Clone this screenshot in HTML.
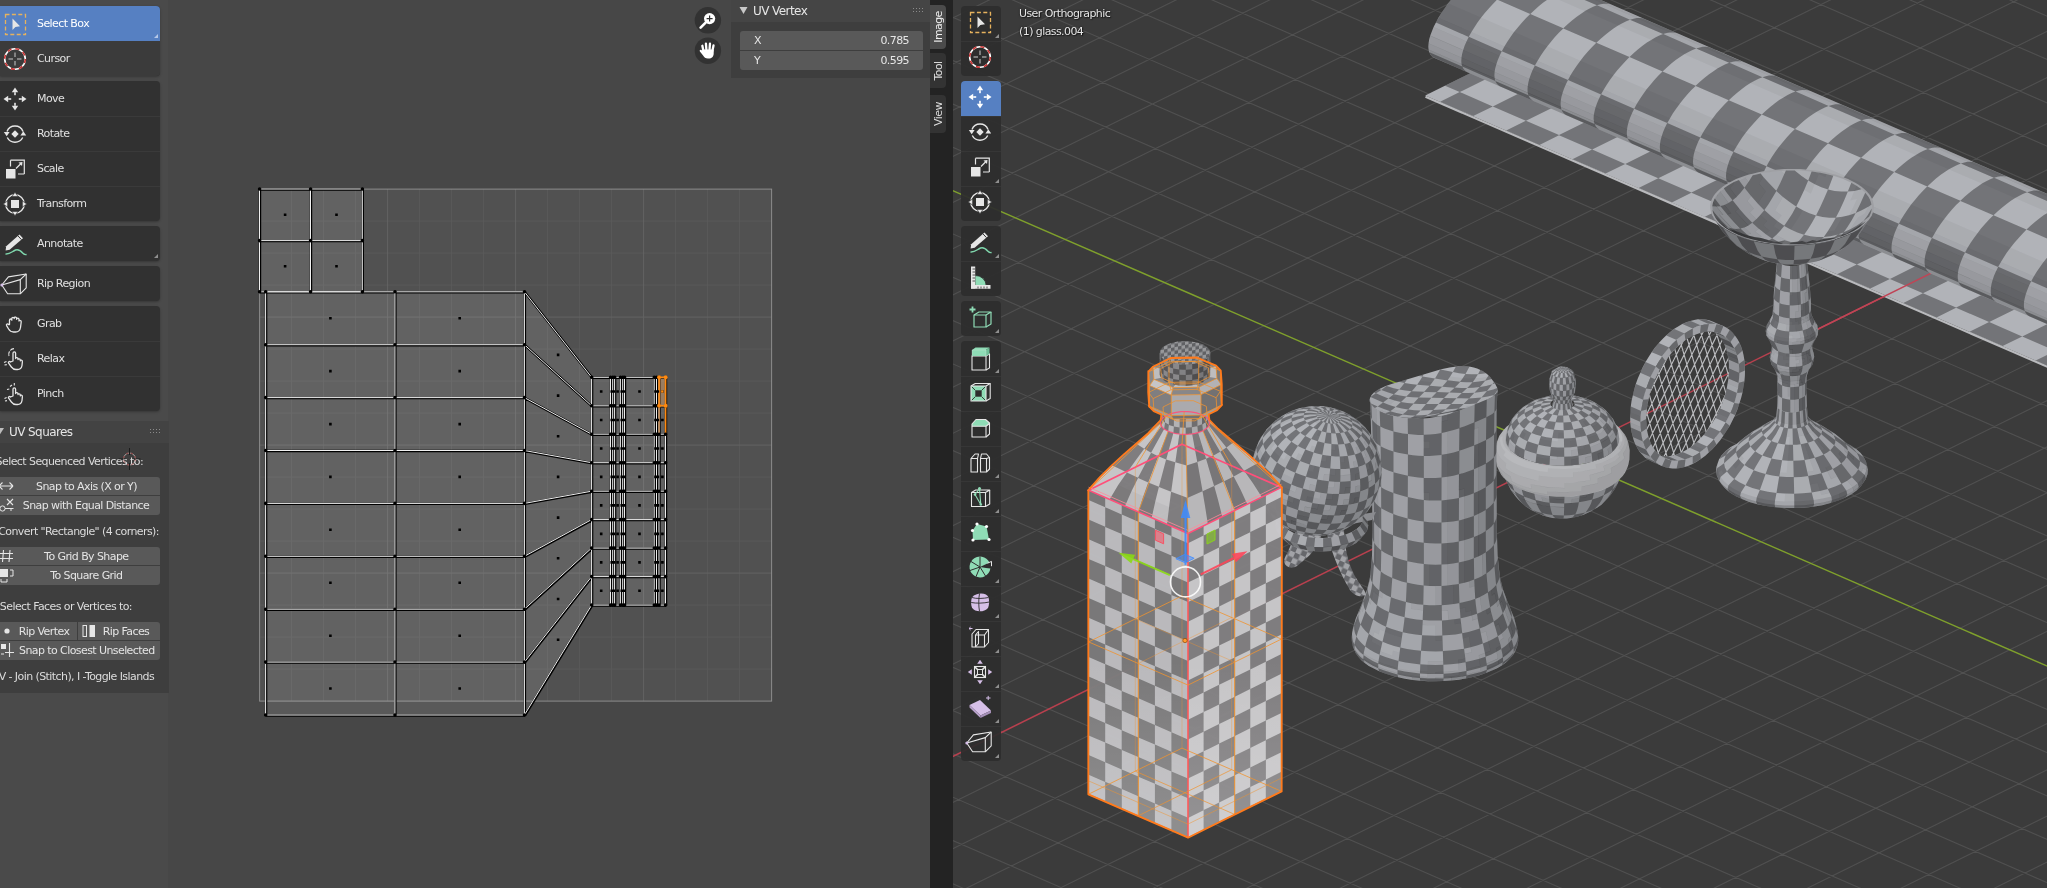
<!DOCTYPE html><html><head><meta charset="utf-8"><title>Blender</title><style>
*{box-sizing:border-box;margin:0;padding:0}
html,body{width:2047px;height:888px;overflow:hidden;background:#474747}
body{position:relative;font-family:"DejaVu Sans","Liberation Sans",sans-serif;font-size:11px;color:#e6e6e6;letter-spacing:-0.58px;-webkit-font-smoothing:antialiased}
.abs{position:absolute}
#uv{left:0;top:0;width:930px;height:888px;background:#474747;overflow:hidden;will-change:transform}
#tbreg{left:0;top:0;width:168px;height:888px;background:rgba(255,255,255,0.02)}
.tb{position:absolute;left:0;width:160px;background:#313131;box-shadow:0 1px 2.5px rgba(0,0,0,.28)}
.tb.g1{border-radius:0 4px 4px 0}
.ti{position:absolute;left:0;width:160px;height:35px;line-height:35px;padding-left:37px;font-size:11px;color:#e0e0e0;white-space:nowrap}
.ti.sep{box-shadow:inset 0 1px 0 #3a3a3a}
.ti.act{background:#5680c2;color:#fff;border-radius:0 4px 0 0}
.ti.hov{background:#3b3b3b;border-radius:0 0 4px 0}
.ti svg{position:absolute;left:1px;top:4px;width:28px;height:28px;overflow:visible}
.tri{position:absolute;right:2px;bottom:3px;width:0;height:0;border-left:4px solid transparent;border-bottom:4px solid #8f8f8f}
.ti.act .tri{border-bottom-color:#b6c8e8}
#pnl{left:0;top:421px;width:169px;height:272px;background:#3e3e3e}
#pnlh{left:0;top:0;width:169px;height:22px;background:#434343}
.pt{font-size:12px;color:#e6e6e6;white-space:nowrap}
.lbl{position:absolute;white-space:nowrap;color:#dcdcdc;font-size:11px;line-height:13px}
.btn{position:absolute;background:#595959;color:#e4e4e4;height:18px;line-height:19.6px;font-size:11px;white-space:nowrap;text-align:center}
.btn span{position:absolute;left:0;top:0;height:18px}
#npanel{left:731px;top:0;width:199px;height:78px;background:#3e3e3e}
#nph{left:0;top:0;width:199px;height:22px;background:#454545}
.fld{position:absolute;left:9px;width:183px;height:19px;background:#595959;line-height:19px;font-size:11px;color:#e6e6e6}
#tabs{left:930px;top:0;width:17px;height:888px;background:#232323;will-change:transform}
#gap{left:947px;top:0;width:6px;height:888px;background:#232323}
.tab{position:absolute;left:0;width:16px;border-radius:0 4px 4px 0}
.tab div{position:absolute;left:50%;top:50%;transform:translate(-50%,-50%) rotate(-90deg);white-space:nowrap;font-size:11px}
#v3d{left:953px;top:0;width:1094px;height:888px;background:#3b3b3b;overflow:hidden;will-change:transform}
.t3{position:absolute;left:8px;width:40px;background:rgba(45,45,45,0.93);border-radius:4px}
.t3i{position:absolute;left:0;width:40px;height:35px}
.t3i.sep{box-shadow:inset 0 1px 0 rgba(255,255,255,.04)}
.t3i.act{background:#5680c2}
.t3i svg{position:absolute;left:4.5px;top:2px;width:28px;height:28px;overflow:visible}
.t3i .tri{right:2px;bottom:3px}
.vtxt{position:absolute;left:66px;color:#e6e6e6;font-size:11px;white-space:nowrap;text-shadow:0 0 2px rgba(0,0,0,.7), 1px 1px 1px rgba(0,0,0,.5)}
</style></head><body>
<div id="uv" class="abs">
<svg class="abs" style="left:0;top:0" width="930" height="888" viewBox="0 0 930 888">
<rect x="259.6" y="189.1" width="512.0" height="512.0" fill="#515151"/>
<path d="M291.6 189.1v512.0M259.6 221.1h512.0M323.6 189.1v512.0M259.6 253.1h512.0M355.6 189.1v512.0M259.6 285.1h512.0M419.6 189.1v512.0M259.6 349.1h512.0M451.6 189.1v512.0M259.6 381.1h512.0M483.6 189.1v512.0M259.6 413.1h512.0M547.6 189.1v512.0M259.6 477.1h512.0M579.6 189.1v512.0M259.6 509.1h512.0M611.6 189.1v512.0M259.6 541.1h512.0M675.6 189.1v512.0M259.6 605.1h512.0M707.6 189.1v512.0M259.6 637.1h512.0M739.6 189.1v512.0M259.6 669.1h512.0" stroke="#5a5a5a" stroke-width="1" fill="none"/>
<path d="M387.6 189.1v512.0M259.6 317.1h512.0M515.6 189.1v512.0M259.6 445.1h512.0M643.6 189.1v512.0M259.6 573.1h512.0" stroke="#636363" stroke-width="1" fill="none"/>
<rect x="259.6" y="189.1" width="512.0" height="512.0" fill="none" stroke="#8c8c8c" stroke-width="1"/>
<path d="M259.6 189L310.6 189L310.6 240.6L259.6 240.6ZM259.6 240.6L310.6 240.6L310.6 291.8L259.6 291.8ZM310.6 189L362.4 189L362.4 240.6L310.6 240.6ZM310.6 240.6L362.4 240.6L362.4 291.8L310.6 291.8ZM265.7 291.8L395 291.8L395 344.7L265.7 344.7ZM265.7 344.7L395 344.7L395 397.6L265.7 397.6ZM265.7 397.6L395 397.6L395 450.5L265.7 450.5ZM265.7 450.5L395 450.5L395 503.4L265.7 503.4ZM265.7 503.4L395 503.4L395 556.3L265.7 556.3ZM265.7 556.3L395 556.3L395 609.2L265.7 609.2ZM265.7 609.2L395 609.2L395 662.1L265.7 662.1ZM265.7 662.1L395 662.1L395 715L265.7 715ZM395 291.8L524.5 291.8L524.5 344.7L395 344.7ZM395 344.7L524.5 344.7L524.5 397.6L395 397.6ZM395 397.6L524.5 397.6L524.5 450.5L395 450.5ZM395 450.5L524.5 450.5L524.5 503.4L395 503.4ZM395 503.4L524.5 503.4L524.5 556.3L395 556.3ZM395 556.3L524.5 556.3L524.5 609.2L395 609.2ZM395 609.2L524.5 609.2L524.5 662.1L395 662.1ZM395 662.1L524.5 662.1L524.5 715L395 715ZM524.5 291.8L591.7 377.3L591.7 405.8L524.5 344.7ZM524.5 344.7L591.7 405.8L591.7 434.2L524.5 397.6ZM524.5 397.6L591.7 434.2L591.7 462.7L524.5 450.5ZM524.5 450.5L591.7 462.7L591.7 491.2L524.5 503.4ZM524.5 503.4L591.7 491.2L591.7 519.6L524.5 556.3ZM524.5 556.3L591.7 519.6L591.7 548.1L524.5 609.2ZM524.5 609.2L591.7 548.1L591.7 576.6L524.5 662.1ZM524.5 662.1L591.7 576.6L591.7 605.1L524.5 715ZM591.7 377.3L610.6 377.3L610.6 405.8L591.7 405.8ZM591.7 405.8L610.6 405.8L610.6 434.2L591.7 434.2ZM591.7 434.2L610.6 434.2L610.6 462.7L591.7 462.7ZM591.7 462.7L610.6 462.7L610.6 491.2L591.7 491.2ZM591.7 491.2L610.6 491.2L610.6 519.6L591.7 519.6ZM591.7 519.6L610.6 519.6L610.6 548.1L591.7 548.1ZM591.7 548.1L610.6 548.1L610.6 576.6L591.7 576.6ZM591.7 576.6L610.6 576.6L610.6 605.1L591.7 605.1ZM610.6 377.3L612.8 377.3L612.8 405.8L610.6 405.8ZM610.6 405.8L612.8 405.8L612.8 434.2L610.6 434.2ZM610.6 434.2L612.8 434.2L612.8 462.7L610.6 462.7ZM610.6 462.7L612.8 462.7L612.8 491.2L610.6 491.2ZM610.6 491.2L612.8 491.2L612.8 519.6L610.6 519.6ZM610.6 519.6L612.8 519.6L612.8 548.1L610.6 548.1ZM610.6 548.1L612.8 548.1L612.8 576.6L610.6 576.6ZM610.6 576.6L612.8 576.6L612.8 605.1L610.6 605.1ZM612.8 377.3L614.7 377.3L614.7 405.8L612.8 405.8ZM612.8 405.8L614.7 405.8L614.7 434.2L612.8 434.2ZM612.8 434.2L614.7 434.2L614.7 462.7L612.8 462.7ZM612.8 462.7L614.7 462.7L614.7 491.2L612.8 491.2ZM612.8 491.2L614.7 491.2L614.7 519.6L612.8 519.6ZM612.8 519.6L614.7 519.6L614.7 548.1L612.8 548.1ZM612.8 548.1L614.7 548.1L614.7 576.6L612.8 576.6ZM612.8 576.6L614.7 576.6L614.7 605.1L612.8 605.1ZM614.7 377.3L620.5 377.3L620.5 405.8L614.7 405.8ZM614.7 405.8L620.5 405.8L620.5 434.2L614.7 434.2ZM614.7 434.2L620.5 434.2L620.5 462.7L614.7 462.7ZM614.7 462.7L620.5 462.7L620.5 491.2L614.7 491.2ZM614.7 491.2L620.5 491.2L620.5 519.6L614.7 519.6ZM614.7 519.6L620.5 519.6L620.5 548.1L614.7 548.1ZM614.7 548.1L620.5 548.1L620.5 576.6L614.7 576.6ZM614.7 576.6L620.5 576.6L620.5 605.1L614.7 605.1ZM620.5 377.3L622.8 377.3L622.8 405.8L620.5 405.8ZM620.5 405.8L622.8 405.8L622.8 434.2L620.5 434.2ZM620.5 434.2L622.8 434.2L622.8 462.7L620.5 462.7ZM620.5 462.7L622.8 462.7L622.8 491.2L620.5 491.2ZM620.5 491.2L622.8 491.2L622.8 519.6L620.5 519.6ZM620.5 519.6L622.8 519.6L622.8 548.1L620.5 548.1ZM620.5 548.1L622.8 548.1L622.8 576.6L620.5 576.6ZM620.5 576.6L622.8 576.6L622.8 605.1L620.5 605.1ZM622.8 377.3L624.6 377.3L624.6 405.8L622.8 405.8ZM622.8 405.8L624.6 405.8L624.6 434.2L622.8 434.2ZM622.8 434.2L624.6 434.2L624.6 462.7L622.8 462.7ZM622.8 462.7L624.6 462.7L624.6 491.2L622.8 491.2ZM622.8 491.2L624.6 491.2L624.6 519.6L622.8 519.6ZM622.8 519.6L624.6 519.6L624.6 548.1L622.8 548.1ZM622.8 548.1L624.6 548.1L624.6 576.6L622.8 576.6ZM622.8 576.6L624.6 576.6L624.6 605.1L622.8 605.1ZM624.6 377.3L654.3 377.3L654.3 405.8L624.6 405.8ZM624.6 405.8L654.3 405.8L654.3 434.2L624.6 434.2ZM624.6 434.2L654.3 434.2L654.3 462.7L624.6 462.7ZM624.6 462.7L654.3 462.7L654.3 491.2L624.6 491.2ZM624.6 491.2L654.3 491.2L654.3 519.6L624.6 519.6ZM624.6 519.6L654.3 519.6L654.3 548.1L624.6 548.1ZM624.6 548.1L654.3 548.1L654.3 576.6L624.6 576.6ZM624.6 576.6L654.3 576.6L654.3 605.1L624.6 605.1ZM654.3 377.3L656.6 377.3L656.6 405.8L654.3 405.8ZM654.3 405.8L656.6 405.8L656.6 434.2L654.3 434.2ZM654.3 434.2L656.6 434.2L656.6 462.7L654.3 462.7ZM654.3 462.7L656.6 462.7L656.6 491.2L654.3 491.2ZM654.3 491.2L656.6 491.2L656.6 519.6L654.3 519.6ZM654.3 519.6L656.6 519.6L656.6 548.1L654.3 548.1ZM654.3 548.1L656.6 548.1L656.6 576.6L654.3 576.6ZM654.3 576.6L656.6 576.6L656.6 605.1L654.3 605.1ZM656.6 377.3L659.1 377.3L659.1 405.8L656.6 405.8ZM656.6 405.8L659.1 405.8L659.1 434.2L656.6 434.2ZM656.6 434.2L659.1 434.2L659.1 462.7L656.6 462.7ZM656.6 462.7L659.1 462.7L659.1 491.2L656.6 491.2ZM656.6 491.2L659.1 491.2L659.1 519.6L656.6 519.6ZM656.6 519.6L659.1 519.6L659.1 548.1L656.6 548.1ZM656.6 548.1L659.1 548.1L659.1 576.6L656.6 576.6ZM656.6 576.6L659.1 576.6L659.1 605.1L656.6 605.1ZM659.1 377.3L665.6 377.3L665.6 405.8L659.1 405.8ZM659.1 405.8L665.6 405.8L665.6 434.2L659.1 434.2ZM659.1 434.2L665.6 434.2L665.6 462.7L659.1 462.7ZM659.1 462.7L665.6 462.7L665.6 491.2L659.1 491.2ZM659.1 491.2L665.6 491.2L665.6 519.6L659.1 519.6ZM659.1 519.6L665.6 519.6L665.6 548.1L659.1 548.1ZM659.1 548.1L665.6 548.1L665.6 576.6L659.1 576.6ZM659.1 576.6L665.6 576.6L665.6 605.1L659.1 605.1Z" fill="#fff" fill-opacity=".1"/>
<path d="M259.6 189L259.6 240.6M259.6 189L310.6 189M259.6 240.6L259.6 291.8M259.6 240.6L310.6 240.6M259.6 291.8L310.6 291.8M265.7 291.8L265.7 344.7M265.7 291.8L395 291.8M265.7 344.7L265.7 397.6M265.7 344.7L395 344.7M265.7 397.6L265.7 450.5M265.7 397.6L395 397.6M265.7 450.5L265.7 503.4M265.7 450.5L395 450.5M265.7 503.4L265.7 556.3M265.7 503.4L395 503.4M265.7 556.3L265.7 609.2M265.7 556.3L395 556.3M265.7 609.2L265.7 662.1M265.7 609.2L395 609.2M265.7 662.1L265.7 715M265.7 662.1L395 662.1M265.7 715L395 715M310.6 189L310.6 240.6M310.6 189L362.4 189M310.6 240.6L310.6 291.8M310.6 240.6L362.4 240.6M310.6 291.8L362.4 291.8M362.4 189L362.4 240.6M362.4 240.6L362.4 291.8M395 291.8L395 344.7M395 291.8L524.5 291.8M395 344.7L395 397.6M395 344.7L524.5 344.7M395 397.6L395 450.5M395 397.6L524.5 397.6M395 450.5L395 503.4M395 450.5L524.5 450.5M395 503.4L395 556.3M395 503.4L524.5 503.4M395 556.3L395 609.2M395 556.3L524.5 556.3M395 609.2L395 662.1M395 609.2L524.5 609.2M395 662.1L395 715M395 662.1L524.5 662.1M395 715L524.5 715M524.5 291.8L524.5 344.7M524.5 291.8L591.7 377.3M524.5 344.7L524.5 397.6M524.5 344.7L591.7 405.8M524.5 397.6L524.5 450.5M524.5 397.6L591.7 434.2M524.5 450.5L524.5 503.4M524.5 450.5L591.7 462.7M524.5 503.4L524.5 556.3M524.5 503.4L591.7 491.2M524.5 556.3L524.5 609.2M524.5 556.3L591.7 519.6M524.5 609.2L524.5 662.1M524.5 609.2L591.7 548.1M524.5 662.1L524.5 715M524.5 662.1L591.7 576.6M524.5 715L591.7 605.1M591.7 377.3L591.7 405.8M591.7 377.3L610.6 377.3M591.7 405.8L591.7 434.2M591.7 405.8L610.6 405.8M591.7 434.2L591.7 462.7M591.7 434.2L610.6 434.2M591.7 462.7L591.7 491.2M591.7 462.7L610.6 462.7M591.7 491.2L591.7 519.6M591.7 491.2L610.6 491.2M591.7 519.6L591.7 548.1M591.7 519.6L610.6 519.6M591.7 548.1L591.7 576.6M591.7 548.1L610.6 548.1M591.7 576.6L591.7 605.1M591.7 576.6L610.6 576.6M591.7 605.1L610.6 605.1M610.6 377.3L610.6 405.8M610.6 377.3L612.8 377.3M610.6 405.8L610.6 434.2M610.6 405.8L612.8 405.8M610.6 434.2L610.6 462.7M610.6 434.2L612.8 434.2M610.6 462.7L610.6 491.2M610.6 462.7L612.8 462.7M610.6 491.2L610.6 519.6M610.6 491.2L612.8 491.2M610.6 519.6L610.6 548.1M610.6 519.6L612.8 519.6M610.6 548.1L610.6 576.6M610.6 548.1L612.8 548.1M610.6 576.6L610.6 605.1M610.6 576.6L612.8 576.6M610.6 605.1L612.8 605.1M612.8 377.3L612.8 405.8M612.8 377.3L614.7 377.3M612.8 405.8L612.8 434.2M612.8 405.8L614.7 405.8M612.8 434.2L612.8 462.7M612.8 434.2L614.7 434.2M612.8 462.7L612.8 491.2M612.8 462.7L614.7 462.7M612.8 491.2L612.8 519.6M612.8 491.2L614.7 491.2M612.8 519.6L612.8 548.1M612.8 519.6L614.7 519.6M612.8 548.1L612.8 576.6M612.8 548.1L614.7 548.1M612.8 576.6L612.8 605.1M612.8 576.6L614.7 576.6M612.8 605.1L614.7 605.1M614.7 377.3L614.7 405.8M614.7 377.3L620.5 377.3M614.7 405.8L614.7 434.2M614.7 405.8L620.5 405.8M614.7 434.2L614.7 462.7M614.7 434.2L620.5 434.2M614.7 462.7L614.7 491.2M614.7 462.7L620.5 462.7M614.7 491.2L614.7 519.6M614.7 491.2L620.5 491.2M614.7 519.6L614.7 548.1M614.7 519.6L620.5 519.6M614.7 548.1L614.7 576.6M614.7 548.1L620.5 548.1M614.7 576.6L614.7 605.1M614.7 576.6L620.5 576.6M614.7 605.1L620.5 605.1M620.5 377.3L620.5 405.8M620.5 377.3L622.8 377.3M620.5 405.8L620.5 434.2M620.5 405.8L622.8 405.8M620.5 434.2L620.5 462.7M620.5 434.2L622.8 434.2M620.5 462.7L620.5 491.2M620.5 462.7L622.8 462.7M620.5 491.2L620.5 519.6M620.5 491.2L622.8 491.2M620.5 519.6L620.5 548.1M620.5 519.6L622.8 519.6M620.5 548.1L620.5 576.6M620.5 548.1L622.8 548.1M620.5 576.6L620.5 605.1M620.5 576.6L622.8 576.6M620.5 605.1L622.8 605.1M622.8 377.3L622.8 405.8M622.8 377.3L624.6 377.3M622.8 405.8L622.8 434.2M622.8 405.8L624.6 405.8M622.8 434.2L622.8 462.7M622.8 434.2L624.6 434.2M622.8 462.7L622.8 491.2M622.8 462.7L624.6 462.7M622.8 491.2L622.8 519.6M622.8 491.2L624.6 491.2M622.8 519.6L622.8 548.1M622.8 519.6L624.6 519.6M622.8 548.1L622.8 576.6M622.8 548.1L624.6 548.1M622.8 576.6L622.8 605.1M622.8 576.6L624.6 576.6M622.8 605.1L624.6 605.1M624.6 377.3L624.6 405.8M624.6 377.3L654.3 377.3M624.6 405.8L624.6 434.2M624.6 405.8L654.3 405.8M624.6 434.2L624.6 462.7M624.6 434.2L654.3 434.2M624.6 462.7L624.6 491.2M624.6 462.7L654.3 462.7M624.6 491.2L624.6 519.6M624.6 491.2L654.3 491.2M624.6 519.6L624.6 548.1M624.6 519.6L654.3 519.6M624.6 548.1L624.6 576.6M624.6 548.1L654.3 548.1M624.6 576.6L624.6 605.1M624.6 576.6L654.3 576.6M624.6 605.1L654.3 605.1M654.3 377.3L654.3 405.8M654.3 377.3L656.6 377.3M654.3 405.8L654.3 434.2M654.3 405.8L656.6 405.8M654.3 434.2L654.3 462.7M654.3 434.2L656.6 434.2M654.3 462.7L654.3 491.2M654.3 462.7L656.6 462.7M654.3 491.2L654.3 519.6M654.3 491.2L656.6 491.2M654.3 519.6L654.3 548.1M654.3 519.6L656.6 519.6M654.3 548.1L654.3 576.6M654.3 548.1L656.6 548.1M654.3 576.6L654.3 605.1M654.3 576.6L656.6 576.6M654.3 605.1L656.6 605.1M656.6 377.3L656.6 405.8M656.6 377.3L659.1 377.3M656.6 405.8L656.6 434.2M656.6 405.8L659.1 405.8M656.6 434.2L656.6 462.7M656.6 434.2L659.1 434.2M656.6 462.7L656.6 491.2M656.6 462.7L659.1 462.7M656.6 491.2L656.6 519.6M656.6 491.2L659.1 491.2M656.6 519.6L656.6 548.1M656.6 519.6L659.1 519.6M656.6 548.1L656.6 576.6M656.6 548.1L659.1 548.1M656.6 576.6L656.6 605.1M656.6 576.6L659.1 576.6M656.6 605.1L659.1 605.1M659.1 377.3L659.1 405.8M659.1 377.3L665.6 377.3M659.1 405.8L659.1 434.2M659.1 405.8L665.6 405.8M659.1 434.2L659.1 462.7M659.1 434.2L665.6 434.2M659.1 462.7L659.1 491.2M659.1 462.7L665.6 462.7M659.1 491.2L659.1 519.6M659.1 491.2L665.6 491.2M659.1 519.6L659.1 548.1M659.1 519.6L665.6 519.6M659.1 548.1L659.1 576.6M659.1 548.1L665.6 548.1M659.1 576.6L659.1 605.1M659.1 576.6L665.6 576.6M659.1 605.1L665.6 605.1M665.6 377.3L665.6 405.8M665.6 405.8L665.6 434.2M665.6 434.2L665.6 462.7M665.6 462.7L665.6 491.2M665.6 491.2L665.6 519.6M665.6 519.6L665.6 548.1M665.6 548.1L665.6 576.6M665.6 576.6L665.6 605.1" stroke="#000" stroke-width="2.4" fill="none" transform="translate(0.4,0.5)"/>
<path d="M259.6 189L259.6 240.6M259.6 189L310.6 189M259.6 240.6L259.6 291.8M259.6 240.6L310.6 240.6M259.6 291.8L310.6 291.8M265.7 291.8L265.7 344.7M265.7 291.8L395 291.8M265.7 344.7L265.7 397.6M265.7 344.7L395 344.7M265.7 397.6L265.7 450.5M265.7 397.6L395 397.6M265.7 450.5L265.7 503.4M265.7 450.5L395 450.5M265.7 503.4L265.7 556.3M265.7 503.4L395 503.4M265.7 556.3L265.7 609.2M265.7 556.3L395 556.3M265.7 609.2L265.7 662.1M265.7 609.2L395 609.2M265.7 662.1L265.7 715M265.7 662.1L395 662.1M265.7 715L395 715M310.6 189L310.6 240.6M310.6 189L362.4 189M310.6 240.6L310.6 291.8M310.6 240.6L362.4 240.6M310.6 291.8L362.4 291.8M362.4 189L362.4 240.6M362.4 240.6L362.4 291.8M395 291.8L395 344.7M395 291.8L524.5 291.8M395 344.7L395 397.6M395 344.7L524.5 344.7M395 397.6L395 450.5M395 397.6L524.5 397.6M395 450.5L395 503.4M395 450.5L524.5 450.5M395 503.4L395 556.3M395 503.4L524.5 503.4M395 556.3L395 609.2M395 556.3L524.5 556.3M395 609.2L395 662.1M395 609.2L524.5 609.2M395 662.1L395 715M395 662.1L524.5 662.1M395 715L524.5 715M524.5 291.8L524.5 344.7M524.5 291.8L591.7 377.3M524.5 344.7L524.5 397.6M524.5 344.7L591.7 405.8M524.5 397.6L524.5 450.5M524.5 397.6L591.7 434.2M524.5 450.5L524.5 503.4M524.5 450.5L591.7 462.7M524.5 503.4L524.5 556.3M524.5 503.4L591.7 491.2M524.5 556.3L524.5 609.2M524.5 556.3L591.7 519.6M524.5 609.2L524.5 662.1M524.5 609.2L591.7 548.1M524.5 662.1L524.5 715M524.5 662.1L591.7 576.6M524.5 715L591.7 605.1M591.7 377.3L591.7 405.8M591.7 377.3L610.6 377.3M591.7 405.8L591.7 434.2M591.7 405.8L610.6 405.8M591.7 434.2L591.7 462.7M591.7 434.2L610.6 434.2M591.7 462.7L591.7 491.2M591.7 462.7L610.6 462.7M591.7 491.2L591.7 519.6M591.7 491.2L610.6 491.2M591.7 519.6L591.7 548.1M591.7 519.6L610.6 519.6M591.7 548.1L591.7 576.6M591.7 548.1L610.6 548.1M591.7 576.6L591.7 605.1M591.7 576.6L610.6 576.6M591.7 605.1L610.6 605.1M610.6 377.3L610.6 405.8M610.6 377.3L612.8 377.3M610.6 405.8L610.6 434.2M610.6 405.8L612.8 405.8M610.6 434.2L610.6 462.7M610.6 434.2L612.8 434.2M610.6 462.7L610.6 491.2M610.6 462.7L612.8 462.7M610.6 491.2L610.6 519.6M610.6 491.2L612.8 491.2M610.6 519.6L610.6 548.1M610.6 519.6L612.8 519.6M610.6 548.1L610.6 576.6M610.6 548.1L612.8 548.1M610.6 576.6L610.6 605.1M610.6 576.6L612.8 576.6M610.6 605.1L612.8 605.1M612.8 377.3L612.8 405.8M612.8 377.3L614.7 377.3M612.8 405.8L612.8 434.2M612.8 405.8L614.7 405.8M612.8 434.2L612.8 462.7M612.8 434.2L614.7 434.2M612.8 462.7L612.8 491.2M612.8 462.7L614.7 462.7M612.8 491.2L612.8 519.6M612.8 491.2L614.7 491.2M612.8 519.6L612.8 548.1M612.8 519.6L614.7 519.6M612.8 548.1L612.8 576.6M612.8 548.1L614.7 548.1M612.8 576.6L612.8 605.1M612.8 576.6L614.7 576.6M612.8 605.1L614.7 605.1M614.7 377.3L614.7 405.8M614.7 377.3L620.5 377.3M614.7 405.8L614.7 434.2M614.7 405.8L620.5 405.8M614.7 434.2L614.7 462.7M614.7 434.2L620.5 434.2M614.7 462.7L614.7 491.2M614.7 462.7L620.5 462.7M614.7 491.2L614.7 519.6M614.7 491.2L620.5 491.2M614.7 519.6L614.7 548.1M614.7 519.6L620.5 519.6M614.7 548.1L614.7 576.6M614.7 548.1L620.5 548.1M614.7 576.6L614.7 605.1M614.7 576.6L620.5 576.6M614.7 605.1L620.5 605.1M620.5 377.3L620.5 405.8M620.5 377.3L622.8 377.3M620.5 405.8L620.5 434.2M620.5 405.8L622.8 405.8M620.5 434.2L620.5 462.7M620.5 434.2L622.8 434.2M620.5 462.7L620.5 491.2M620.5 462.7L622.8 462.7M620.5 491.2L620.5 519.6M620.5 491.2L622.8 491.2M620.5 519.6L620.5 548.1M620.5 519.6L622.8 519.6M620.5 548.1L620.5 576.6M620.5 548.1L622.8 548.1M620.5 576.6L620.5 605.1M620.5 576.6L622.8 576.6M620.5 605.1L622.8 605.1M622.8 377.3L622.8 405.8M622.8 377.3L624.6 377.3M622.8 405.8L622.8 434.2M622.8 405.8L624.6 405.8M622.8 434.2L622.8 462.7M622.8 434.2L624.6 434.2M622.8 462.7L622.8 491.2M622.8 462.7L624.6 462.7M622.8 491.2L622.8 519.6M622.8 491.2L624.6 491.2M622.8 519.6L622.8 548.1M622.8 519.6L624.6 519.6M622.8 548.1L622.8 576.6M622.8 548.1L624.6 548.1M622.8 576.6L622.8 605.1M622.8 576.6L624.6 576.6M622.8 605.1L624.6 605.1M624.6 377.3L624.6 405.8M624.6 377.3L654.3 377.3M624.6 405.8L624.6 434.2M624.6 405.8L654.3 405.8M624.6 434.2L624.6 462.7M624.6 434.2L654.3 434.2M624.6 462.7L624.6 491.2M624.6 462.7L654.3 462.7M624.6 491.2L624.6 519.6M624.6 491.2L654.3 491.2M624.6 519.6L624.6 548.1M624.6 519.6L654.3 519.6M624.6 548.1L624.6 576.6M624.6 548.1L654.3 548.1M624.6 576.6L624.6 605.1M624.6 576.6L654.3 576.6M624.6 605.1L654.3 605.1M654.3 377.3L654.3 405.8M654.3 377.3L656.6 377.3M654.3 405.8L654.3 434.2M654.3 405.8L656.6 405.8M654.3 434.2L654.3 462.7M654.3 434.2L656.6 434.2M654.3 462.7L654.3 491.2M654.3 462.7L656.6 462.7M654.3 491.2L654.3 519.6M654.3 491.2L656.6 491.2M654.3 519.6L654.3 548.1M654.3 519.6L656.6 519.6M654.3 548.1L654.3 576.6M654.3 548.1L656.6 548.1M654.3 576.6L654.3 605.1M654.3 576.6L656.6 576.6M654.3 605.1L656.6 605.1M656.6 377.3L656.6 405.8M656.6 377.3L659.1 377.3M656.6 405.8L656.6 434.2M656.6 405.8L659.1 405.8M656.6 434.2L656.6 462.7M656.6 434.2L659.1 434.2M656.6 462.7L656.6 491.2M656.6 462.7L659.1 462.7M656.6 491.2L656.6 519.6M656.6 491.2L659.1 491.2M656.6 519.6L656.6 548.1M656.6 519.6L659.1 519.6M656.6 548.1L656.6 576.6M656.6 548.1L659.1 548.1M656.6 576.6L656.6 605.1M656.6 576.6L659.1 576.6M656.6 605.1L659.1 605.1M659.1 377.3L659.1 405.8M659.1 377.3L665.6 377.3M659.1 405.8L659.1 434.2M659.1 405.8L665.6 405.8M659.1 434.2L659.1 462.7M659.1 434.2L665.6 434.2M659.1 462.7L659.1 491.2M659.1 462.7L665.6 462.7M659.1 491.2L659.1 519.6M659.1 491.2L665.6 491.2M659.1 519.6L659.1 548.1M659.1 519.6L665.6 519.6M659.1 548.1L659.1 576.6M659.1 548.1L665.6 548.1M659.1 576.6L659.1 605.1M659.1 576.6L665.6 576.6M659.1 605.1L665.6 605.1M665.6 377.3L665.6 405.8M665.6 405.8L665.6 434.2M665.6 434.2L665.6 462.7M665.6 462.7L665.6 491.2M665.6 491.2L665.6 519.6M665.6 519.6L665.6 548.1M665.6 548.1L665.6 576.6M665.6 576.6L665.6 605.1" stroke="#f0f0f0" stroke-width="1" fill="none" transform="translate(-0.1,0)"/>
<rect x="659.1" y="377.3" width="6.5" height="28.5" fill="#ffb060" fill-opacity=".35"/>
<path d="M659.1 377.3H665.6V434.2M659.1 377.3V405.8H665.6" stroke="#ff8a10" stroke-width="1.6" fill="none"/>
<path d="M659.1 405.8V434.2" stroke="#d9904a" stroke-width="1.2" fill="none"/>
<path d="M283.8 213.5h2.6v2.6h-2.6zM283.8 264.9h2.6v2.6h-2.6zM335.2 213.5h2.6v2.6h-2.6zM335.2 264.9h2.6v2.6h-2.6zM329.1 316.9h2.6v2.6h-2.6zM329.1 369.8h2.6v2.6h-2.6zM329.1 422.8h2.6v2.6h-2.6zM329.1 475.6h2.6v2.6h-2.6zM329.1 528.5h2.6v2.6h-2.6zM329.1 581.5h2.6v2.6h-2.6zM329.1 634.4h2.6v2.6h-2.6zM329.1 687.2h2.6v2.6h-2.6zM458.4 316.9h2.6v2.6h-2.6zM458.4 369.8h2.6v2.6h-2.6zM458.4 422.8h2.6v2.6h-2.6zM458.4 475.6h2.6v2.6h-2.6zM458.4 528.5h2.6v2.6h-2.6zM458.4 581.5h2.6v2.6h-2.6zM458.4 634.4h2.6v2.6h-2.6zM458.4 687.2h2.6v2.6h-2.6zM556.8 353.6h2.6v2.6h-2.6zM556.8 394.3h2.6v2.6h-2.6zM556.8 435.0h2.6v2.6h-2.6zM556.8 475.6h2.6v2.6h-2.6zM556.8 516.3h2.6v2.6h-2.6zM556.8 557.0h2.6v2.6h-2.6zM556.8 597.7h2.6v2.6h-2.6zM556.8 638.4h2.6v2.6h-2.6zM599.9 390.2h2.6v2.6h-2.6zM599.9 418.7h2.6v2.6h-2.6zM599.9 447.2h2.6v2.6h-2.6zM599.9 475.6h2.6v2.6h-2.6zM599.9 504.1h2.6v2.6h-2.6zM599.9 532.6h2.6v2.6h-2.6zM599.9 561.1h2.6v2.6h-2.6zM599.9 589.5h2.6v2.6h-2.6zM610.4 390.2h2.6v2.6h-2.6zM610.4 418.7h2.6v2.6h-2.6zM610.4 447.2h2.6v2.6h-2.6zM610.4 475.6h2.6v2.6h-2.6zM610.4 504.1h2.6v2.6h-2.6zM610.4 532.6h2.6v2.6h-2.6zM610.4 561.1h2.6v2.6h-2.6zM610.4 589.5h2.6v2.6h-2.6zM612.5 390.2h2.6v2.6h-2.6zM612.5 418.7h2.6v2.6h-2.6zM612.5 447.2h2.6v2.6h-2.6zM612.5 475.6h2.6v2.6h-2.6zM612.5 504.1h2.6v2.6h-2.6zM612.5 532.6h2.6v2.6h-2.6zM612.5 561.1h2.6v2.6h-2.6zM612.5 589.5h2.6v2.6h-2.6zM616.3 390.2h2.6v2.6h-2.6zM616.3 418.7h2.6v2.6h-2.6zM616.3 447.2h2.6v2.6h-2.6zM616.3 475.6h2.6v2.6h-2.6zM616.3 504.1h2.6v2.6h-2.6zM616.3 532.6h2.6v2.6h-2.6zM616.3 561.1h2.6v2.6h-2.6zM616.3 589.5h2.6v2.6h-2.6zM620.4 390.2h2.6v2.6h-2.6zM620.4 418.7h2.6v2.6h-2.6zM620.4 447.2h2.6v2.6h-2.6zM620.4 475.6h2.6v2.6h-2.6zM620.4 504.1h2.6v2.6h-2.6zM620.4 532.6h2.6v2.6h-2.6zM620.4 561.1h2.6v2.6h-2.6zM620.4 589.5h2.6v2.6h-2.6zM622.4 390.2h2.6v2.6h-2.6zM622.4 418.7h2.6v2.6h-2.6zM622.4 447.2h2.6v2.6h-2.6zM622.4 475.6h2.6v2.6h-2.6zM622.4 504.1h2.6v2.6h-2.6zM622.4 532.6h2.6v2.6h-2.6zM622.4 561.1h2.6v2.6h-2.6zM622.4 589.5h2.6v2.6h-2.6zM638.2 390.2h2.6v2.6h-2.6zM638.2 418.7h2.6v2.6h-2.6zM638.2 447.2h2.6v2.6h-2.6zM638.2 475.6h2.6v2.6h-2.6zM638.2 504.1h2.6v2.6h-2.6zM638.2 532.6h2.6v2.6h-2.6zM638.2 561.1h2.6v2.6h-2.6zM638.2 589.5h2.6v2.6h-2.6zM654.2 390.2h2.6v2.6h-2.6zM654.2 418.7h2.6v2.6h-2.6zM654.2 447.2h2.6v2.6h-2.6zM654.2 475.6h2.6v2.6h-2.6zM654.2 504.1h2.6v2.6h-2.6zM654.2 532.6h2.6v2.6h-2.6zM654.2 561.1h2.6v2.6h-2.6zM654.2 589.5h2.6v2.6h-2.6zM656.6 390.2h2.6v2.6h-2.6zM656.6 418.7h2.6v2.6h-2.6zM656.6 447.2h2.6v2.6h-2.6zM656.6 475.6h2.6v2.6h-2.6zM656.6 504.1h2.6v2.6h-2.6zM656.6 532.6h2.6v2.6h-2.6zM656.6 561.1h2.6v2.6h-2.6zM656.6 589.5h2.6v2.6h-2.6zM661.1 390.2h2.6v2.6h-2.6zM661.1 418.7h2.6v2.6h-2.6zM661.1 447.2h2.6v2.6h-2.6zM661.1 475.6h2.6v2.6h-2.6zM661.1 504.1h2.6v2.6h-2.6zM661.1 532.6h2.6v2.6h-2.6zM661.1 561.1h2.6v2.6h-2.6zM661.1 589.5h2.6v2.6h-2.6z" fill="#000"/>
<path d="M257.8 189.0a1.8 1.8 0 1 0 3.6 0a1.8 1.8 0 1 0 -3.6 0M257.8 240.6a1.8 1.8 0 1 0 3.6 0a1.8 1.8 0 1 0 -3.6 0M257.8 291.8a1.8 1.8 0 1 0 3.6 0a1.8 1.8 0 1 0 -3.6 0M263.9 291.8a1.8 1.8 0 1 0 3.6 0a1.8 1.8 0 1 0 -3.6 0M263.9 344.7a1.8 1.8 0 1 0 3.6 0a1.8 1.8 0 1 0 -3.6 0M263.9 397.6a1.8 1.8 0 1 0 3.6 0a1.8 1.8 0 1 0 -3.6 0M263.9 450.5a1.8 1.8 0 1 0 3.6 0a1.8 1.8 0 1 0 -3.6 0M263.9 503.4a1.8 1.8 0 1 0 3.6 0a1.8 1.8 0 1 0 -3.6 0M263.9 556.3a1.8 1.8 0 1 0 3.6 0a1.8 1.8 0 1 0 -3.6 0M263.9 609.2a1.8 1.8 0 1 0 3.6 0a1.8 1.8 0 1 0 -3.6 0M263.9 662.1a1.8 1.8 0 1 0 3.6 0a1.8 1.8 0 1 0 -3.6 0M263.9 715.0a1.8 1.8 0 1 0 3.6 0a1.8 1.8 0 1 0 -3.6 0M308.8 189.0a1.8 1.8 0 1 0 3.6 0a1.8 1.8 0 1 0 -3.6 0M308.8 240.6a1.8 1.8 0 1 0 3.6 0a1.8 1.8 0 1 0 -3.6 0M308.8 291.8a1.8 1.8 0 1 0 3.6 0a1.8 1.8 0 1 0 -3.6 0M360.6 189.0a1.8 1.8 0 1 0 3.6 0a1.8 1.8 0 1 0 -3.6 0M360.6 240.6a1.8 1.8 0 1 0 3.6 0a1.8 1.8 0 1 0 -3.6 0M360.6 291.8a1.8 1.8 0 1 0 3.6 0a1.8 1.8 0 1 0 -3.6 0M393.2 291.8a1.8 1.8 0 1 0 3.6 0a1.8 1.8 0 1 0 -3.6 0M393.2 344.7a1.8 1.8 0 1 0 3.6 0a1.8 1.8 0 1 0 -3.6 0M393.2 397.6a1.8 1.8 0 1 0 3.6 0a1.8 1.8 0 1 0 -3.6 0M393.2 450.5a1.8 1.8 0 1 0 3.6 0a1.8 1.8 0 1 0 -3.6 0M393.2 503.4a1.8 1.8 0 1 0 3.6 0a1.8 1.8 0 1 0 -3.6 0M393.2 556.3a1.8 1.8 0 1 0 3.6 0a1.8 1.8 0 1 0 -3.6 0M393.2 609.2a1.8 1.8 0 1 0 3.6 0a1.8 1.8 0 1 0 -3.6 0M393.2 662.1a1.8 1.8 0 1 0 3.6 0a1.8 1.8 0 1 0 -3.6 0M393.2 715.0a1.8 1.8 0 1 0 3.6 0a1.8 1.8 0 1 0 -3.6 0M522.7 291.8a1.8 1.8 0 1 0 3.6 0a1.8 1.8 0 1 0 -3.6 0M522.7 344.7a1.8 1.8 0 1 0 3.6 0a1.8 1.8 0 1 0 -3.6 0M522.7 397.6a1.8 1.8 0 1 0 3.6 0a1.8 1.8 0 1 0 -3.6 0M522.7 450.5a1.8 1.8 0 1 0 3.6 0a1.8 1.8 0 1 0 -3.6 0M522.7 503.4a1.8 1.8 0 1 0 3.6 0a1.8 1.8 0 1 0 -3.6 0M522.7 556.3a1.8 1.8 0 1 0 3.6 0a1.8 1.8 0 1 0 -3.6 0M522.7 609.2a1.8 1.8 0 1 0 3.6 0a1.8 1.8 0 1 0 -3.6 0M522.7 662.1a1.8 1.8 0 1 0 3.6 0a1.8 1.8 0 1 0 -3.6 0M522.7 715.0a1.8 1.8 0 1 0 3.6 0a1.8 1.8 0 1 0 -3.6 0M589.9 377.3a1.8 1.8 0 1 0 3.6 0a1.8 1.8 0 1 0 -3.6 0M589.9 405.8a1.8 1.8 0 1 0 3.6 0a1.8 1.8 0 1 0 -3.6 0M589.9 434.2a1.8 1.8 0 1 0 3.6 0a1.8 1.8 0 1 0 -3.6 0M589.9 462.7a1.8 1.8 0 1 0 3.6 0a1.8 1.8 0 1 0 -3.6 0M589.9 491.2a1.8 1.8 0 1 0 3.6 0a1.8 1.8 0 1 0 -3.6 0M589.9 519.6a1.8 1.8 0 1 0 3.6 0a1.8 1.8 0 1 0 -3.6 0M589.9 548.1a1.8 1.8 0 1 0 3.6 0a1.8 1.8 0 1 0 -3.6 0M589.9 576.6a1.8 1.8 0 1 0 3.6 0a1.8 1.8 0 1 0 -3.6 0M589.9 605.1a1.8 1.8 0 1 0 3.6 0a1.8 1.8 0 1 0 -3.6 0M608.8 377.3a1.8 1.8 0 1 0 3.6 0a1.8 1.8 0 1 0 -3.6 0M608.8 405.8a1.8 1.8 0 1 0 3.6 0a1.8 1.8 0 1 0 -3.6 0M608.8 434.2a1.8 1.8 0 1 0 3.6 0a1.8 1.8 0 1 0 -3.6 0M608.8 462.7a1.8 1.8 0 1 0 3.6 0a1.8 1.8 0 1 0 -3.6 0M608.8 491.2a1.8 1.8 0 1 0 3.6 0a1.8 1.8 0 1 0 -3.6 0M608.8 519.6a1.8 1.8 0 1 0 3.6 0a1.8 1.8 0 1 0 -3.6 0M608.8 548.1a1.8 1.8 0 1 0 3.6 0a1.8 1.8 0 1 0 -3.6 0M608.8 576.6a1.8 1.8 0 1 0 3.6 0a1.8 1.8 0 1 0 -3.6 0M608.8 605.1a1.8 1.8 0 1 0 3.6 0a1.8 1.8 0 1 0 -3.6 0M611.0 377.3a1.8 1.8 0 1 0 3.6 0a1.8 1.8 0 1 0 -3.6 0M611.0 405.8a1.8 1.8 0 1 0 3.6 0a1.8 1.8 0 1 0 -3.6 0M611.0 434.2a1.8 1.8 0 1 0 3.6 0a1.8 1.8 0 1 0 -3.6 0M611.0 462.7a1.8 1.8 0 1 0 3.6 0a1.8 1.8 0 1 0 -3.6 0M611.0 491.2a1.8 1.8 0 1 0 3.6 0a1.8 1.8 0 1 0 -3.6 0M611.0 519.6a1.8 1.8 0 1 0 3.6 0a1.8 1.8 0 1 0 -3.6 0M611.0 548.1a1.8 1.8 0 1 0 3.6 0a1.8 1.8 0 1 0 -3.6 0M611.0 576.6a1.8 1.8 0 1 0 3.6 0a1.8 1.8 0 1 0 -3.6 0M611.0 605.1a1.8 1.8 0 1 0 3.6 0a1.8 1.8 0 1 0 -3.6 0M612.9 377.3a1.8 1.8 0 1 0 3.6 0a1.8 1.8 0 1 0 -3.6 0M612.9 405.8a1.8 1.8 0 1 0 3.6 0a1.8 1.8 0 1 0 -3.6 0M612.9 434.2a1.8 1.8 0 1 0 3.6 0a1.8 1.8 0 1 0 -3.6 0M612.9 462.7a1.8 1.8 0 1 0 3.6 0a1.8 1.8 0 1 0 -3.6 0M612.9 491.2a1.8 1.8 0 1 0 3.6 0a1.8 1.8 0 1 0 -3.6 0M612.9 519.6a1.8 1.8 0 1 0 3.6 0a1.8 1.8 0 1 0 -3.6 0M612.9 548.1a1.8 1.8 0 1 0 3.6 0a1.8 1.8 0 1 0 -3.6 0M612.9 576.6a1.8 1.8 0 1 0 3.6 0a1.8 1.8 0 1 0 -3.6 0M612.9 605.1a1.8 1.8 0 1 0 3.6 0a1.8 1.8 0 1 0 -3.6 0M618.7 377.3a1.8 1.8 0 1 0 3.6 0a1.8 1.8 0 1 0 -3.6 0M618.7 405.8a1.8 1.8 0 1 0 3.6 0a1.8 1.8 0 1 0 -3.6 0M618.7 434.2a1.8 1.8 0 1 0 3.6 0a1.8 1.8 0 1 0 -3.6 0M618.7 462.7a1.8 1.8 0 1 0 3.6 0a1.8 1.8 0 1 0 -3.6 0M618.7 491.2a1.8 1.8 0 1 0 3.6 0a1.8 1.8 0 1 0 -3.6 0M618.7 519.6a1.8 1.8 0 1 0 3.6 0a1.8 1.8 0 1 0 -3.6 0M618.7 548.1a1.8 1.8 0 1 0 3.6 0a1.8 1.8 0 1 0 -3.6 0M618.7 576.6a1.8 1.8 0 1 0 3.6 0a1.8 1.8 0 1 0 -3.6 0M618.7 605.1a1.8 1.8 0 1 0 3.6 0a1.8 1.8 0 1 0 -3.6 0M621.0 377.3a1.8 1.8 0 1 0 3.6 0a1.8 1.8 0 1 0 -3.6 0M621.0 405.8a1.8 1.8 0 1 0 3.6 0a1.8 1.8 0 1 0 -3.6 0M621.0 434.2a1.8 1.8 0 1 0 3.6 0a1.8 1.8 0 1 0 -3.6 0M621.0 462.7a1.8 1.8 0 1 0 3.6 0a1.8 1.8 0 1 0 -3.6 0M621.0 491.2a1.8 1.8 0 1 0 3.6 0a1.8 1.8 0 1 0 -3.6 0M621.0 519.6a1.8 1.8 0 1 0 3.6 0a1.8 1.8 0 1 0 -3.6 0M621.0 548.1a1.8 1.8 0 1 0 3.6 0a1.8 1.8 0 1 0 -3.6 0M621.0 576.6a1.8 1.8 0 1 0 3.6 0a1.8 1.8 0 1 0 -3.6 0M621.0 605.1a1.8 1.8 0 1 0 3.6 0a1.8 1.8 0 1 0 -3.6 0M622.8 377.3a1.8 1.8 0 1 0 3.6 0a1.8 1.8 0 1 0 -3.6 0M622.8 405.8a1.8 1.8 0 1 0 3.6 0a1.8 1.8 0 1 0 -3.6 0M622.8 434.2a1.8 1.8 0 1 0 3.6 0a1.8 1.8 0 1 0 -3.6 0M622.8 462.7a1.8 1.8 0 1 0 3.6 0a1.8 1.8 0 1 0 -3.6 0M622.8 491.2a1.8 1.8 0 1 0 3.6 0a1.8 1.8 0 1 0 -3.6 0M622.8 519.6a1.8 1.8 0 1 0 3.6 0a1.8 1.8 0 1 0 -3.6 0M622.8 548.1a1.8 1.8 0 1 0 3.6 0a1.8 1.8 0 1 0 -3.6 0M622.8 576.6a1.8 1.8 0 1 0 3.6 0a1.8 1.8 0 1 0 -3.6 0M622.8 605.1a1.8 1.8 0 1 0 3.6 0a1.8 1.8 0 1 0 -3.6 0M652.5 377.3a1.8 1.8 0 1 0 3.6 0a1.8 1.8 0 1 0 -3.6 0M652.5 405.8a1.8 1.8 0 1 0 3.6 0a1.8 1.8 0 1 0 -3.6 0M652.5 434.2a1.8 1.8 0 1 0 3.6 0a1.8 1.8 0 1 0 -3.6 0M652.5 462.7a1.8 1.8 0 1 0 3.6 0a1.8 1.8 0 1 0 -3.6 0M652.5 491.2a1.8 1.8 0 1 0 3.6 0a1.8 1.8 0 1 0 -3.6 0M652.5 519.6a1.8 1.8 0 1 0 3.6 0a1.8 1.8 0 1 0 -3.6 0M652.5 548.1a1.8 1.8 0 1 0 3.6 0a1.8 1.8 0 1 0 -3.6 0M652.5 576.6a1.8 1.8 0 1 0 3.6 0a1.8 1.8 0 1 0 -3.6 0M652.5 605.1a1.8 1.8 0 1 0 3.6 0a1.8 1.8 0 1 0 -3.6 0M654.8 377.3a1.8 1.8 0 1 0 3.6 0a1.8 1.8 0 1 0 -3.6 0M654.8 405.8a1.8 1.8 0 1 0 3.6 0a1.8 1.8 0 1 0 -3.6 0M654.8 434.2a1.8 1.8 0 1 0 3.6 0a1.8 1.8 0 1 0 -3.6 0M654.8 462.7a1.8 1.8 0 1 0 3.6 0a1.8 1.8 0 1 0 -3.6 0M654.8 491.2a1.8 1.8 0 1 0 3.6 0a1.8 1.8 0 1 0 -3.6 0M654.8 519.6a1.8 1.8 0 1 0 3.6 0a1.8 1.8 0 1 0 -3.6 0M654.8 548.1a1.8 1.8 0 1 0 3.6 0a1.8 1.8 0 1 0 -3.6 0M654.8 576.6a1.8 1.8 0 1 0 3.6 0a1.8 1.8 0 1 0 -3.6 0M654.8 605.1a1.8 1.8 0 1 0 3.6 0a1.8 1.8 0 1 0 -3.6 0M657.3 377.3a1.8 1.8 0 1 0 3.6 0a1.8 1.8 0 1 0 -3.6 0M657.3 405.8a1.8 1.8 0 1 0 3.6 0a1.8 1.8 0 1 0 -3.6 0M657.3 434.2a1.8 1.8 0 1 0 3.6 0a1.8 1.8 0 1 0 -3.6 0M657.3 462.7a1.8 1.8 0 1 0 3.6 0a1.8 1.8 0 1 0 -3.6 0M657.3 491.2a1.8 1.8 0 1 0 3.6 0a1.8 1.8 0 1 0 -3.6 0M657.3 519.6a1.8 1.8 0 1 0 3.6 0a1.8 1.8 0 1 0 -3.6 0M657.3 548.1a1.8 1.8 0 1 0 3.6 0a1.8 1.8 0 1 0 -3.6 0M657.3 576.6a1.8 1.8 0 1 0 3.6 0a1.8 1.8 0 1 0 -3.6 0M657.3 605.1a1.8 1.8 0 1 0 3.6 0a1.8 1.8 0 1 0 -3.6 0M663.8 377.3a1.8 1.8 0 1 0 3.6 0a1.8 1.8 0 1 0 -3.6 0M663.8 405.8a1.8 1.8 0 1 0 3.6 0a1.8 1.8 0 1 0 -3.6 0M663.8 434.2a1.8 1.8 0 1 0 3.6 0a1.8 1.8 0 1 0 -3.6 0M663.8 462.7a1.8 1.8 0 1 0 3.6 0a1.8 1.8 0 1 0 -3.6 0M663.8 491.2a1.8 1.8 0 1 0 3.6 0a1.8 1.8 0 1 0 -3.6 0M663.8 519.6a1.8 1.8 0 1 0 3.6 0a1.8 1.8 0 1 0 -3.6 0M663.8 548.1a1.8 1.8 0 1 0 3.6 0a1.8 1.8 0 1 0 -3.6 0M663.8 576.6a1.8 1.8 0 1 0 3.6 0a1.8 1.8 0 1 0 -3.6 0M663.8 605.1a1.8 1.8 0 1 0 3.6 0a1.8 1.8 0 1 0 -3.6 0" fill="#000"/>
<circle cx="659.1" cy="377.3" r="2" fill="#ff8a10"/>
<circle cx="665.6" cy="377.3" r="2" fill="#ff8a10"/>
<circle cx="659.1" cy="405.8" r="2" fill="#ff8a10"/>
<circle cx="665.6" cy="405.8" r="2" fill="#ff8a10"/>
<rect x="661.1" y="390.3" width="2.4" height="2.4" fill="#ff8a10"/>
</svg>
<div id="tbreg" class="abs"></div>
<div id="pnl" class="abs"><div id="pnlh" class="abs"></div>
<svg class="abs" style="left:-5px;top:6px" width="12" height="10"><path d="M0 1H9L4.5 8Z" fill="#bdbdbd"/></svg>
<div class="abs pt" style="left:9px;top:3px;line-height:16px">UV Squares</div>
<svg class="abs" style="left:150px;top:7px" width="14" height="8"><g fill="#8a8a8a"><rect x="0" y="1" width="1" height="1"/><rect x="0" y="4" width="1" height="1"/><rect x="3" y="1" width="1" height="1"/><rect x="3" y="4" width="1" height="1"/><rect x="6" y="1" width="1" height="1"/><rect x="6" y="4" width="1" height="1"/><rect x="9" y="1" width="1" height="1"/><rect x="9" y="4" width="1" height="1"/></g></svg>
<div class="lbl" style="left:-4.4px;top:34.2px">Select Sequenced Vertices to:</div>
<div class="btn" style="left:0px;top:56px;width:160px;height:18px;border-radius:0 3px 0 0"><svg class="abs" style="left:-2px;top:1px" width="18" height="16"><path d="M1 8H15M1 8L4.5 4.5M1 8L4.5 11.5M15 8L11.5 4.5M15 8L11.5 11.5" stroke="#e6e6e6" stroke-width="1.1" fill="none"/></svg><span style="left:-13.5px;width:200px">Snap to Axis (X or Y)</span></div>
<div class="btn" style="left:0px;top:74.80000000000001px;width:160px;height:19px;border-radius:0 0 3px 0"><svg class="abs" style="left:-1px;top:1px" width="18" height="16"><path d="M8 2L14 8M14 2L8 8" stroke="#e6e6e6" stroke-width="1.1"/><circle cx="3.5" cy="11.5" r="2.6" fill="none" stroke="#e6e6e6" stroke-width="1"/><path d="M6 11.5H14.5M12 11.5V14" stroke="#e6e6e6" stroke-width="1"/></svg><span style="left:-14px;width:200px">Snap with Equal Distance</span></div>
<div class="lbl" style="left:-1.8px;top:104.2px">Convert "Rectangle" (4 corners):</div>
<div class="btn" style="left:0px;top:126px;width:160px;height:18px;border-radius:0 3px 0 0"><svg class="abs" style="left:-1px;top:1px" width="18" height="16"><path d="M1 5.5H14M1 10.5H14M4.5 2L3.5 14M11 2L10 14" stroke="#e6e6e6" stroke-width="1.1"/></svg><span style="left:-13.700000000000003px;width:200px">To Grid By Shape</span></div>
<div class="btn" style="left:0px;top:144.79999999999995px;width:160px;height:19px;border-radius:0 0 3px 0"><svg class="abs" style="left:-1px;top:1px" width="18" height="16"><rect x="0" y="2" width="9" height="8" fill="#e6e6e6"/><path d="M11 3H14V9H11M2 12V15H8V12" stroke="#e6e6e6" stroke-width="1" fill="none"/></svg><span style="left:-13.700000000000003px;width:200px">To Square Grid</span></div>
<div class="lbl" style="left:-0.2px;top:178.8px">Select Faces or Vertices to:</div>
<div class="btn" style="left:0px;top:201px;width:77px;height:18px;border-radius:0"><svg class="abs" style="left:0;top:1px" width="18" height="16"><circle cx="7" cy="8" r="2.6" fill="#e6e6e6"/></svg><span style="left:-56px;width:200px">Rip Vertex</span></div>
<div class="btn" style="left:78px;top:201px;width:82px;height:18px;border-radius:0 3px 0 0"><svg class="abs" style="left:4px;top:1px" width="18" height="16"><rect x="1" y="2.5" width="3.5" height="11" fill="none" stroke="#e6e6e6" stroke-width="1"/><rect x="7.5" y="2" width="5.5" height="12" fill="#e6e6e6"/></svg><span style="left:-52px;width:200px">Rip Faces</span></div>
<div class="btn" style="left:0px;top:219.79999999999995px;width:160px;height:19px;border-radius:0 0 3px 0"><svg class="abs" style="left:-1px;top:1px" width="18" height="16"><rect x="2" y="2" width="5" height="5" fill="#e6e6e6"/><path d="M10.5 1V15M6 10.5H15M2 12H5" stroke="#e6e6e6" stroke-width="1.1"/></svg><span style="left:-13.200000000000003px;width:200px">Snap to Closest Unselected</span></div>
<div class="lbl" style="left:-1.3px;top:248.99999999999994px">V - Join (Stitch), I -Toggle Islands</div>
</div>
<svg class="abs" style="left:110px;top:440px;opacity:.55" width="40" height="40" viewBox="110 440 40 40">
<g transform="translate(129.5,459)"><circle r="6" fill="none" stroke="#fff" stroke-width="1"/><circle r="6" fill="none" stroke="#d03030" stroke-width="1" stroke-dasharray="2.4 2.4"/><path d="M-11 0H-4M4 0H11M0 -11V-4M0 4V11" stroke="#000" stroke-width="1"/></g>
</svg>
<div class="tb" style="top:5.5px;height:70px;border-radius:0 4px 4px 0">
<div class="ti act" style="top:0px"><svg viewBox="0 0 28 28"><rect x="4.5" y="4.5" width="20" height="20" fill="none" stroke="#e6b25e" stroke-width="1.3" stroke-dasharray="4 2.4"/><path d="M11.5 8.5 L11.5 20 L14.4 17 L19 16.2 Z" fill="#e6e6e6"/></svg>Select Box<i class=tri></i></div>
<div class="ti hov" style="top:35px"><svg viewBox="0 0 28 28"><circle cx="14" cy="14" r="10.3" fill="none" stroke="#fff" stroke-width="1.6"/><circle cx="14" cy="14" r="10.3" fill="none" stroke="#c83232" stroke-width="1.6" stroke-dasharray="4.05 4.05"/><path d="M14 7.5V12M14 16V20.5M7.5 14H12M16 14H20.5" stroke="#9a9a9a" stroke-width="1.5" fill="none"/></svg>Cursor</div>
</div>
<div class="tb" style="top:80.5px;height:140px;border-radius:0 4px 4px 0">
<div class="ti " style="top:0px"><svg viewBox="0 0 28 28"><g fill="#e6e6e6"><path d="M14 2.5L17.2 7.2H10.8Z"/><path d="M14 25.5L17.2 20.8H10.8Z"/><path d="M2.5 14L7.2 10.8V17.2Z"/><path d="M25.5 14L20.8 10.8V17.2Z"/><rect x="13.2" y="7.2" width="1.6" height="3"/><rect x="13.2" y="17.8" width="1.6" height="3"/><rect x="7.2" y="13.2" width="3" height="1.6"/><rect x="17.8" y="13.2" width="3" height="1.6"/></g></svg>Move</div>
<div class="ti  sep" style="top:35px"><svg viewBox="0 0 28 28"><g fill="none" stroke="#e6e6e6" stroke-width="1.4"><path d="M6 11.5A8.6 8.6 0 0 1 22 11.5"/><path d="M6.3 17.5A8.6 8.6 0 0 0 21.7 17.5"/></g><g fill="#e6e6e6"><path d="M14 10.3L17.7 14L14 17.7L10.3 14Z"/><path d="M2.8 12L8.6 12L5.7 16.3Z"/><path d="M19.4 15.6L25.2 15.6L22.3 11.3Z"/></g></svg>Rotate</div>
<div class="ti  sep" style="top:70px"><svg viewBox="0 0 28 28"><rect x="5" y="14" width="9.5" height="9.5" fill="#e6e6e6"/><path d="M9.5 5.2H23.3V19" fill="none" stroke="#e6e6e6" stroke-width="1.2"/><path d="M9.5 5.2V11.5M23.3 19H17" fill="none" stroke="#e6e6e6" stroke-width="1.2"/><path d="M15 13.5L20.5 8" stroke="#e6e6e6" stroke-width="1.3"/><path d="M21.5 7L21 11L17.5 7.5Z" fill="#e6e6e6"/></svg>Scale</div>
<div class="ti  sep" style="top:105px"><svg viewBox="0 0 28 28"><circle cx="14" cy="14" r="9.3" fill="none" stroke="#e6e6e6" stroke-width="1.3"/><rect x="10" y="10" width="8" height="8" fill="#e6e6e6"/><g fill="#e6e6e6" stroke="#313131" stroke-width=".6"><path d="M14 2.2L17 6.6H11Z"/><path d="M14 25.8L17 21.4H11Z"/><path d="M2.2 14L6.6 11V17Z"/><path d="M25.8 14L21.4 11V17Z"/></g></svg>Transform</div>
</div>
<div class="tb" style="top:225.5px;height:35px;border-radius:0 4px 4px 0">
<div class="ti " style="top:0px"><svg viewBox="0 0 28 28"><path d="M5.2 16.2L18.5 4.4L22 8.2L8.6 19.8L4.6 20.6Z" fill="#e6e6e6"/><path d="M17 5.9L20.4 9.6" stroke="#313131" stroke-width="1"/><path d="M4.5 24C9 24.5 11 21.5 14.5 20C18 18.6 20 21 22 23.3 C23 24.4 24.5 24.7 25.6 24.5" fill="none" stroke="#7fd6ac" stroke-width="1.4"/></svg>Annotate<i class=tri></i></div>
</div>
<div class="tb" style="top:265.5px;height:35px;border-radius:0 4px 4px 0">
<div class="ti " style="top:0px"><svg viewBox="0 0 28 28"><g fill="none" stroke="#e6e6e6" stroke-width="1.1" stroke-linejoin="round"><path d="M0.8 15L7.4 6.9L25.2 4V17.8L19.3 23.8H6.6Z"/><path d="M19.3 9.6V23.8M19.3 9.6L25.2 4M0.8 15L19.3 9.6"/></g><circle cx="0.8" cy="15" r="1.5" fill="#d6bfe8"/></svg>Rip Region</div>
</div>
<div class="tb" style="top:305.5px;height:105px;border-radius:0 4px 4px 0">
<div class="ti " style="top:0px"><svg viewBox="0 0 28 28"><path d="M8.5 14.5V10.2C8.5 8.6 10.8 8.6 10.8 10.2V8.6C10.8 7 13.2 7 13.2 8.6V8.2C13.2 6.6 15.6 6.6 15.6 8.4V9.3C15.6 7.8 18 7.8 18 9.5V11C18.6 10 20.6 10.4 20.2 12L19.5 17.5C19 20.5 17.3 22 14.5 22H12.5C10 22 8.8 21 7.6 19L5.6 15.6C4.9 14.2 6.6 13.3 7.6 14.5Z" fill="none" stroke="#e6e6e6" stroke-width="1.3" stroke-linejoin="round"/></svg>Grab</div>
<div class="ti  sep" style="top:35px"><svg viewBox="0 0 28 28"><path d="M12 16V8.3C12 6.5 14.6 6.5 14.6 8.3V13.5C14.6 12.2 17 12.3 17 13.8V14.6C17 13.4 19.3 13.6 19.3 15V15.8C19.5 14.8 21.5 15 21.4 16.6L21 20.5C20.6 23 19 24.5 16.5 24.5H15C12.8 24.5 11.6 23.6 10.4 22L7.6 18.2C6.8 17 8.4 15.9 9.5 17Z" fill="none" stroke="#e6e6e6" stroke-width="1.3" stroke-linejoin="round"/><path d="M9.2 5.5A5 5 0 0 1 13 3.6M8 11A5.5 5.5 0 0 1 8.5 6.4" fill="none" stroke="#e6e6e6" stroke-width="1.1"/><path d="M3 17.5L5.5 16.5M3.5 20L5.8 19.6" stroke="#e6e6e6" stroke-width="1.1"/></svg>Relax</div>
<div class="ti  sep" style="top:70px"><svg viewBox="0 0 28 28"><path d="M12 16V9.3C12 7.5 14.6 7.5 14.6 9.3V13.5C14.6 12.2 17 12.3 17 13.8V14.6C17 13.4 19.3 13.6 19.3 15V15.8C19.5 14.8 21.5 15 21.4 16.6L21 20.5C20.6 23 19 24.5 16.5 24.5H15C12.8 24.5 11.6 23.6 10.4 22L7.6 18.2C6.8 17 8.4 15.9 9.5 17Z" fill="none" stroke="#e6e6e6" stroke-width="1.3" stroke-linejoin="round"/><path d="M9 6.5L11 5M13.3 3V5.4M6 9.5L8.3 9" fill="none" stroke="#e6e6e6" stroke-width="1.1"/><path d="M3.5 18.5L5.6 17.5M4 21L6 20.6" stroke="#e6e6e6" stroke-width="1.1"/></svg>Pinch</div>
</div>
<div id="npanel" class="abs"><div id="nph" class="abs"></div>
<svg class="abs" style="left:8px;top:6px" width="10" height="10"><path d="M0.5 1H8.5L4.5 8Z" fill="#c8c8c8"/></svg>
<div class="abs pt" style="left:22px;top:3px;line-height:16px">UV Vertex</div>
<svg class="abs" style="left:182px;top:7px" width="14" height="8"><g fill="#8a8a8a"><rect x="0" y="1" width="1" height="1"/><rect x="0" y="4" width="1" height="1"/><rect x="3" y="1" width="1" height="1"/><rect x="3" y="4" width="1" height="1"/><rect x="6" y="1" width="1" height="1"/><rect x="6" y="4" width="1" height="1"/><rect x="9" y="1" width="1" height="1"/><rect x="9" y="4" width="1" height="1"/></g></svg>
<div class="fld" style="top:31px;border-radius:3px 3px 0 0"><span class="abs" style="left:14px">X</span><span class="abs" style="right:14px">0.785</span></div>
<div class="fld" style="top:50.5px;border-radius:0 0 3px 3px"><span class="abs" style="left:14px">Y</span><span class="abs" style="right:14px">0.595</span></div>
</div>
<svg class="abs" style="left:690px;top:0" width="40" height="70"><circle cx="17.9" cy="20.3" r="13.2" fill="#303030" fill-opacity=".9"/><circle cx="17.9" cy="50.7" r="13.2" fill="#303030" fill-opacity=".9"/><circle cx="19.6" cy="18.6" r="5.6" fill="#fff"/><path d="M15.6 22.6L10.6 27.6" stroke="#fff" stroke-width="2.6" stroke-linecap="round"/><path d="M19.6 15.6V21.6M16.6 18.6H22.6" stroke="#303030" stroke-width="1.2"/><g transform="translate(17.9,51)" fill="#fff"><rect x="-5.6" y="-6.5" width="2.3" height="8" rx="1.15" transform="rotate(-12 -4.5 0)"/><rect x="-2.6" y="-8.6" width="2.3" height="9" rx="1.15" transform="rotate(-4 -1.5 0)"/><rect x="0.4" y="-8.6" width="2.3" height="9" rx="1.15" transform="rotate(4 1.5 0)"/><rect x="3.3" y="-6.8" width="2.3" height="8" rx="1.15" transform="rotate(12 4.5 0)"/><path d="M-5.6 -1.5H5.8V2.5C5.8 5.5 3.8 7.6 0.8 7.6H0C-2.5 7.6 -3.6 6.4 -4.8 4.6L-8 0.6C-8.8 -0.6 -7.4 -1.8 -6.2 -0.8L-5.6 -0.2Z"/></g></svg>
</div>
<div id="tabs" class="abs">
<div class="tab" style="top:4.5px;height:44px;background:#4b4b4b;color:#f0f0f0"><div>Image</div></div>
<div class="tab" style="top:53px;height:35px;background:#333;color:#dcdcdc"><div>Tool</div></div>
<div class="tab" style="top:94.5px;height:38.5px;background:#333;color:#dcdcdc"><div>View</div></div>
</div><div id="gap" class="abs"></div>
<div id="v3d" class="abs">
<svg class="abs" style="left:0;top:0" width="1094" height="888" viewBox="953 0 1094 888"><path d="M2151 2010.9L-1826.6 282.9M2197.7 1987.8L-1779.9 259.8M2244.3 1964.8L-1733.3 236.8M2291 1941.8L-1686.6 213.8M2337.7 1918.7L-1639.9 190.7M2384.3 1895.7L-1593.2 167.7M2431 1872.6L-1546.6 144.6M2477.7 1849.5L-1499.9 121.5M2524.4 1826.5L-1453.2 98.5M2571 1803.5L-1406.6 75.5M2617.7 1780.4L-1359.9 52.4M2664.4 1757.3L-1313.2 29.3M2711 1734.3L-1266.6 6.3M2757.7 1711.2L-1219.9 -16.8M2804.4 1688.2L-1173.2 -39.8M2851 1665.2L-1126.6 -62.9M2897.7 1642.1L-1079.9 -85.9M2944.4 1619L-1033.2 -109M2991.1 1596L-986.5 -132M3037.7 1573L-939.9 -155M3084.4 1549.9L-893.2 -178.1M3131.1 1526.8L-846.5 -201.1M3177.7 1503.8L-799.9 -224.2M3224.4 1480.8L-753.2 -247.2M3271.1 1457.7L-706.5 -270.3M3317.8 1434.7L-659.9 -293.4M3364.4 1411.6L-613.2 -316.4M3411.1 1388.5L-566.5 -339.5M3457.8 1365.5L-519.8 -362.5M3504.4 1342.5L-473.2 -385.6M3597.8 1296.3L-379.8 -431.7M3644.4 1273.3L-333.2 -454.7M3691.1 1250.2L-286.5 -477.8M3737.8 1227.2L-239.8 -500.8M3784.4 1204.2L-193.1 -523.9M3831.1 1181.1L-146.5 -546.9M3877.8 1158L-99.8 -570M3924.5 1135L-53.1 -593M3971.1 1112L-6.5 -616.1M4017.8 1088.9L40.2 -639.1M4064.5 1065.8L86.9 -662.2M4111.1 1042.8L133.5 -685.2M4157.8 1019.8L180.2 -708.2M4204.5 996.7L226.9 -731.3M4251.1 973.6L273.5 -754.4M4297.8 950.6L320.2 -777.4M4344.5 927.5L366.9 -800.5M4391.2 904.5L413.6 -823.5M4437.8 881.5L460.2 -846.5M4484.5 858.4L506.9 -869.6M4531.2 835.3L553.6 -892.7M4577.8 812.3L600.2 -915.7M4624.5 789.2L646.9 -938.8M4671.2 766.2L693.6 -961.8M4717.9 743.1L740.3 -984.9M4764.5 720.1L786.9 -1007.9M4811.2 697L833.6 -1031M4857.9 674L880.3 -1054M4904.5 650.9L926.9 -1077.1M4951.2 627.9L973.6 -1100.1M1187.1 2025.4L4920.7 181.4M1137.4 2003.8L4871 159.8M1087.7 1982.2L4821.3 138.2M1037.9 1960.6L4771.5 116.6M988.2 1939L4721.8 95M938.5 1917.4L4672.1 73.4M888.8 1895.8L4622.4 51.8M839.1 1874.2L4572.7 30.2M789.3 1852.6L4522.9 8.6M739.6 1831L4473.2 -13M689.9 1809.4L4423.5 -34.6M640.2 1787.8L4373.8 -56.2M590.5 1766.2L4324.1 -77.8M540.7 1744.6L4274.3 -99.4M491 1723L4224.6 -121M441.3 1701.4L4174.9 -142.6M391.6 1679.8L4125.2 -164.2M341.9 1658.2L4075.5 -185.8M292.1 1636.6L4025.7 -207.4M242.4 1615L3976 -229M192.7 1593.4L3926.3 -250.6M143 1571.8L3876.6 -272.2M93.3 1550.2L3826.9 -293.8M43.5 1528.6L3777.1 -315.4M-6.2 1507L3727.4 -337M-55.9 1485.4L3677.7 -358.6M-105.6 1463.8L3628 -380.2M-155.3 1442.2L3578.3 -401.8M-205.1 1420.6L3528.5 -423.4M-254.8 1399L3478.8 -445M-354.2 1355.8L3379.4 -488.2M-403.9 1334.2L3329.7 -509.8M-453.7 1312.6L3279.9 -531.4M-503.4 1291L3230.2 -553M-553.1 1269.4L3180.5 -574.6M-602.8 1247.8L3130.8 -596.2M-652.5 1226.2L3081.1 -617.8M-702.3 1204.6L3031.3 -639.4M-752 1183L2981.6 -661M-801.7 1161.4L2931.9 -682.6M-851.4 1139.8L2882.2 -704.2M-901.1 1118.2L2832.5 -725.8M-950.9 1096.6L2782.7 -747.4M-1000.6 1075L2733 -769M-1050.3 1053.4L2683.3 -790.6M-1100 1031.8L2633.6 -812.2M-1149.7 1010.2L2583.9 -833.8M-1199.5 988.6L2534.1 -855.4M-1249.2 967L2484.4 -877M-1298.9 945.4L2434.7 -898.6M-1348.6 923.8L2385 -920.2M-1398.3 902.2L2335.3 -941.8M-1448.1 880.6L2285.5 -963.4M-1497.8 859L2235.8 -985M-1547.5 837.4L2186.1 -1006.6M-1597.2 815.8L2136.4 -1028.2M-1646.9 794.2L2086.7 -1049.8M-1696.7 772.6L2036.9 -1071.4M-1746.4 751L1987.2 -1093M-1796.1 729.4L1937.5 -1114.6" stroke="#505050" stroke-width="1.1" fill="none"/><path d="M3551.1 1319.4L-426.5 -408.6" stroke="#7fa02c" stroke-width="1.5" fill="none"/><path d="M-304.5 1377.4L3429.1 -466.6" stroke="#b8404e" stroke-width="1.5" fill="none"/><path d="M1425.2 95.4L2068.8 375L2150.8 334.5L1507.2 54.9Z" fill="rgb(177, 179, 184)"/><path d="M1459.7 92L1440.1 101.7L1473.2 116.1L1492.8 106.4L1525.8 120.8L1506.2 130.5L1539.4 144.9L1559 135.2L1592 149.5L1572.4 159.2L1605.6 173.6L1625.2 163.9L1658.2 178.3L1638.6 188L1671.8 202.4L1691.4 192.7L1724.4 207L1704.8 216.7L1737.9 231.1L1757.5 221.4L1790.5 235.8L1770.9 245.5L1804.1 259.9L1823.7 250.2L1856.7 264.5L1837.1 274.2L1870.3 288.6L1889.9 278.9L1922.9 293.3L1903.3 303L1936.5 317.4L1956.1 307.7L1989.1 322L1969.5 331.7L2002.6 346.1L2022.2 336.4L2055.3 350.8L2035.7 360.5L2068.8 374.9L2088.5 365.1L2055.4 350.8L2086.4 335.5L2119.5 349.8L2150.6 334.5L2117.4 320.1L2086.4 335.4L2053.4 321.1L2084.4 305.7L2051.3 291.3L2020.2 306.6L1987.2 292.3L2018.3 277L1985.1 262.6L1954 277.9L1921 263.6L1952.1 248.2L1918.9 233.8L1887.9 249.1L1854.8 234.8L1885.9 219.5L1852.7 205.1L1821.7 220.4L1788.7 206.1L1819.7 190.7L1786.6 176.3L1755.5 191.6L1722.5 177.3L1753.5 162L1720.4 147.6L1689.3 162.9L1656.3 148.6L1687.4 133.2L1654.2 118.8L1623.1 134.1L1590.1 119.8L1621.2 104.5L1588 90.1L1557 105.4L1524 91.1L1555 75.7L1521.8 61.3L1490.8 76.6L1476.2 70.3L1445 85.7ZM1724.5 207L1755.5 191.7L1788.5 206.1L1757.5 221.4ZM1557 105.5L1590 119.8L1559 135.1L1526 120.8ZM1523.8 91.1L1492.8 106.4L1459.8 92L1490.8 76.7ZM1625.2 163.9L1592.2 149.5L1623.1 134.2L1656.2 148.6ZM1691.4 192.6L1658.3 178.3L1689.3 163L1722.3 177.3ZM1887.9 249.2L1920.9 263.6L1889.9 278.9L1856.9 264.5ZM1854.7 234.8L1823.7 250.1L1790.7 235.8L1821.7 220.5ZM1956.1 307.6L1923 293.3L1954 278L1987 292.3ZM2022.2 336.4L1989.2 322L2020.2 306.7L2053.2 321.1Z" fill="#000" fill-opacity="0.350"/><path d="M1425.5 96.7L2061.9 373.1" stroke="#b9babd" stroke-width="2.2"/><path d="M1805 335.5L2005.7 236.4" stroke="#c04455" stroke-width="1.5" fill="none"/><path d="M1507.2 -39.6L1501.1 -38.8L1497.6 -37.7L1490.2 -34.4L1485.8 -31.9L1477.2 -26L1468.4 -18.7L1460 -10.5L1455.7 -5.9L1448 3.5L1441.4 13L1438.3 17.9L1433.6 27L1430.3 35.6L1429.2 39.6L1428.6 43.2L1428.4 46.8L1428.6 49.5L1429.2 52.1L1430.3 54.3L1430.1 54.2L1431.5 56L1433.9 57.7L2095.9 345.3L2093.6 343.5L2092.1 341.8L2091 339.7L2090.4 337.1L2090.1 334.1L2090.3 330.8L2090.9 327.1L2092 323.2L2095.3 314.6L2100.1 305.3L2106.3 295.7L2113.5 286.2L2121.6 277.1L2130.2 268.7L2139 261.5L2147.6 255.6L2155.7 251.3L2159.5 249.8L2163 248.8L2166.3 248.2L2169.3 248.1L2171.9 248.5L2174.7 249.5L2174.8 249.3L1512.7 -38.3L1509.9 -39.3Z" fill="rgb(177, 179, 184)"/><path d="M1504.7 -39.3L1501.4 -38.7L1497.9 -37.7L1530.7 -23.4L1526.9 -21.9L1522.9 -20L1518.8 -17.6L1514.5 -14.9L1510.2 -11.7L1505.8 -8.3L1501.4 -4.5L1497.1 -0.5L1464.3 -14.7L1460 -10.4L1455.9 -5.9L1451.9 -1.3L1448.1 3.5L1444.6 8.3L1441.4 13.1L1438.5 17.9L1435.9 22.6L1468.7 36.9L1466.5 41.4L1464.6 45.8L1463.2 50L1462.1 54L1461.5 57.6L1461.3 61L1461.5 63.9L1462.2 66.5L1429.4 52.3L1430.4 54.4L1431.9 56.2L1433.9 57.6L1466.9 71.9L1464.9 70.5L1463.4 68.7L1462.3 66.6L1495.3 81L1496.3 83.1L1497.8 84.8L1499.8 86.2L1533 100.7L1531 99.2L1529.5 97.5L1528.5 95.4L1561.5 109.7L1562.5 111.8L1564 113.6L1566 115L1599.2 129.4L1597.2 128L1595.7 126.2L1594.7 124.1L1627.7 138.5L1628.7 140.6L1630.1 142.3L1632.2 143.7L1665.4 158.2L1663.4 156.7L1661.9 155L1660.8 152.9L1693.8 167.2L1694.8 169.3L1696.3 171.1L1698.3 172.5L1731.6 186.9L1729.6 185.5L1728.1 183.7L1727 181.6L1760 196L1761 198.1L1762.5 199.8L1764.5 201.2L1797.7 215.7L1795.7 214.2L1794.2 212.5L1793.2 210.4L1826.2 224.7L1827.2 226.8L1828.7 228.6L1830.7 230L1863.9 244.4L1861.9 243L1860.4 241.2L1859.4 239.1L1892.4 253.5L1893.4 255.6L1894.8 257.3L1896.9 258.7L1930.1 273.2L1928.1 271.7L1926.6 270L1925.5 267.9L1958.5 282.2L1959.6 284.3L1961 286.1L1963.1 287.5L1996.3 301.9L1994.3 300.5L1992.8 298.7L1991.7 296.6L2024.7 311L2025.7 313.1L2027.2 314.8L2029.2 316.2L2062.5 330.6L2060.4 329.2L2058.9 327.5L2057.9 325.4L2091 339.7L2090.3 337.1L2090 334.1L2090.2 330.8L2090.8 327.1L2091.9 323.2L2093.3 319L2095.2 314.6L2097.4 310L2064.4 295.6L2066.9 290.9L2069.9 286.1L2073.1 281.3L2076.6 276.5L2080.4 271.8L2084.3 267.1L2088.5 262.6L2092.7 258.4L2125.8 272.7L2130.2 268.7L2134.6 264.9L2138.9 261.4L2143.3 258.3L2147.6 255.5L2151.7 253.2L2155.7 251.2L2159.5 249.7L2126.5 235.3L2129.9 234.3L2133.2 233.7L2136.2 233.7L2138.8 234L2141.2 234.9L2108 220.4L2105.6 219.5L2102.9 219.2L2100 219.3L2096.7 219.9L2093.3 220.9L2060.3 206.6L2063.8 205.6L2067 205L2070 204.9L2072.6 205.3L2075.1 206.1L2041.8 191.7L2039.4 190.8L2036.8 190.4L2033.8 190.6L2030.6 191.2L2027.1 192.2L1994.1 177.8L1997.6 176.8L2000.8 176.3L2003.8 176.2L2006.4 176.5L2008.9 177.4L1975.7 162.9L1973.2 162L1970.6 161.7L1967.6 161.8L1964.4 162.4L1960.9 163.4L1927.9 149.1L1931.4 148.1L1934.7 147.5L1937.6 147.4L1940.3 147.8L1942.7 148.6L1909.5 134.2L1907.1 133.3L1904.4 132.9L1901.4 133.1L1898.2 133.7L1894.8 134.7L1861.8 120.3L1865.2 119.3L1868.5 118.8L1871.5 118.7L1874.1 119L1876.5 119.9L1843.3 105.4L1840.9 104.5L1838.2 104.2L1835.3 104.3L1832 104.9L1828.6 105.9L1795.6 91.6L1799 90.6L1802.3 90L1805.3 89.9L1807.9 90.3L1810.4 91.1L1777.1 76.7L1774.7 75.8L1772.1 75.4L1769.1 75.6L1765.8 76.2L1762.4 77.2L1729.4 62.8L1732.9 61.8L1736.1 61.3L1739.1 61.2L1741.7 61.5L1744.2 62.4L1710.9 47.9L1708.5 47L1705.9 46.7L1702.9 46.8L1699.7 47.4L1696.2 48.4L1663.2 34.1L1666.7 33.1L1670 32.5L1672.9 32.4L1675.6 32.8L1678 33.6L1644.8 19.2L1642.3 18.3L1639.7 17.9L1636.7 18.1L1633.5 18.7L1630 19.7L1597 5.3L1600.5 4.3L1603.8 3.8L1606.7 3.7L1609.4 4L1611.8 4.9L1578.6 -9.6L1576.2 -10.5L1573.5 -10.8L1570.6 -10.7L1567.3 -10.1L1563.9 -9.1L1530.9 -23.4L1534.3 -24.4L1537.6 -25L1540.6 -25.1L1543.2 -24.7L1545.6 -23.9L1512.7 -38.2L1510.3 -39.1L1507.6 -39.4ZM1760.1 195.9L1759.4 193.3L1759.2 190.4L1759.3 187L1760 183.4L1761 179.4L1762.5 175.2L1764.3 170.8L1766.5 166.3L1799.6 180.6L1797.4 185.1L1795.5 189.6L1794 193.8L1793 197.7L1792.4 201.4L1792.2 204.7L1792.4 207.7L1793.1 210.3ZM1802.2 175.9L1805.2 171.1L1808.4 166.3L1811.9 161.5L1815.7 156.8L1819.6 152.1L1823.8 147.6L1828 143.4L1861 157.7L1856.8 162L1852.7 166.5L1848.7 171.1L1844.9 175.9L1841.4 180.7L1838.2 185.5L1835.3 190.3L1832.7 194.9L1799.7 180.6ZM1778.8 147.1L1775.2 151.9L1772 156.7L1769.1 161.5L1766.5 166.2L1733.5 151.8L1736.1 147.2L1739 142.4L1742.2 137.6L1745.7 132.8L1749.5 128L1753.5 123.4L1757.6 118.9L1761.8 114.6L1794.9 129L1790.6 133.2L1786.5 137.7L1782.5 142.4ZM1799.3 124.9L1803.7 121.1L1808.1 117.6L1812.4 114.5L1816.7 111.8L1820.8 109.4L1824.8 107.5L1828.6 106L1861.6 120.3L1857.8 121.8L1853.8 123.8L1849.7 126.1L1845.4 128.9L1841.1 132L1836.7 135.5L1832.3 139.3L1828 143.3L1795 128.9ZM1774.9 103.2L1770.5 106.7L1766.1 110.5L1761.8 114.5L1728.8 100.2L1733.1 96.2L1737.5 92.4L1741.9 88.9L1746.2 85.8L1750.5 83L1754.6 80.7L1758.6 78.7L1762.4 77.2L1795.4 91.6L1791.6 93.1L1787.6 95L1783.5 97.4L1779.2 100.1ZM1560.9 107.1L1560.6 104.1L1560.8 100.8L1561.4 97.1L1562.5 93.2L1563.9 89L1565.8 84.6L1568 80L1601 94.4L1598.8 98.9L1597 103.3L1595.5 107.5L1594.5 111.5L1593.8 115.1L1593.6 118.4L1593.9 121.4L1594.5 124L1561.5 109.7ZM1537.5 60.9L1540.5 56.1L1543.7 51.3L1547.2 46.5L1551 41.8L1554.9 37.1L1559.1 32.6L1563.3 28.4L1596.3 42.7L1592.1 47L1587.9 51.5L1584 56.1L1580.2 60.9L1576.7 65.7L1573.5 70.5L1570.5 75.3L1568 79.9L1534.9 65.6ZM1629.5 57.1L1662.5 71.5L1658.2 75.8L1654.1 80.2L1650.2 84.9L1646.4 89.6L1642.9 94.4L1639.7 99.2L1636.7 104L1634.2 108.7L1601.1 94.3L1603.7 89.7L1606.6 84.9L1609.9 80.1L1613.4 75.3L1617.1 70.5L1621.1 65.9L1625.2 61.4ZM1600.7 38.7L1605.1 34.9L1609.5 31.4L1613.9 28.3L1618.1 25.5L1622.3 23.2L1626.3 21.2L1630 19.7L1663.1 34.1L1659.3 35.6L1655.3 37.5L1651.2 39.9L1646.9 42.6L1642.5 45.8L1638.1 49.2L1633.8 53L1629.5 57L1596.4 42.7ZM1494.6 72L1495.2 68.4L1496.3 64.4L1497.7 60.2L1499.6 55.8L1501.8 51.3L1534.9 65.6L1532.6 70.1L1530.8 74.6L1529.3 78.8L1528.3 82.7L1527.7 86.4L1527.5 89.7L1527.7 92.7L1528.4 95.3L1495.3 80.9L1494.7 78.3L1494.4 75.4ZM1539 6.1L1543.3 2.6L1547.7 -0.5L1552 -3.2L1556.1 -5.6L1560.1 -7.5L1563.9 -9L1596.9 5.3L1593.1 6.8L1589.1 8.8L1585 11.1L1580.7 13.9L1576.4 17L1572 20.5L1567.6 24.3L1563.3 28.3L1530.3 13.9L1534.6 9.9ZM1484.8 13L1488.8 8.4L1492.9 3.9L1497.1 -0.4L1530.2 14L1525.9 18.3L1521.8 22.7L1517.8 27.4L1514 32.1L1510.5 36.9L1507.3 41.7L1504.4 46.5L1501.8 51.2L1468.8 36.8L1471.3 32.2L1474.3 27.4L1477.5 22.6L1481 17.8ZM1675.7 60.1L1680.1 57L1684.3 54.3L1688.5 51.9L1692.5 50L1696.2 48.5L1729.2 62.8L1725.4 64.3L1721.5 66.3L1717.3 68.6L1713.1 71.4L1708.7 74.5L1704.3 78L1699.9 81.8L1695.6 85.8L1662.6 71.4L1666.9 67.4L1671.3 63.6ZM1626.8 132.9L1627 129.5L1627.6 125.9L1628.6 121.9L1630.1 117.7L1632 113.3L1634.2 108.8L1667.2 123.1L1665 127.6L1663.1 132.1L1661.7 136.3L1660.6 140.2L1660 143.9L1659.8 147.2L1660.1 150.2L1660.7 152.8L1627.7 138.4L1627 135.8ZM1676.1 108.8L1679.6 104L1683.3 99.3L1687.3 94.6L1691.4 90.1L1695.7 85.9L1728.7 100.2L1724.4 104.5L1720.3 109L1716.3 113.6L1712.6 118.4L1709.1 123.2L1705.8 128L1702.9 132.8L1700.3 137.4L1667.3 123.1L1669.9 118.4L1672.8 113.6ZM1693.8 154.6L1694.8 150.7L1696.3 146.5L1698.1 142.1L1700.4 137.5L1733.4 151.9L1731.2 156.4L1729.3 160.8L1727.9 165L1726.8 169L1726.2 172.6L1726 175.9L1726.2 178.9L1726.9 181.5L1693.9 167.2L1693.2 164.6L1693 161.6L1693.2 158.3ZM1891.7 250.8L1891.5 247.9L1891.7 244.5L1892.3 240.9L1893.4 236.9L1894.8 232.7L1896.7 228.3L1898.9 223.8L1931.9 238.1L1929.7 242.6L1927.9 247.1L1926.4 251.3L1925.3 255.2L1924.7 258.9L1924.5 262.2L1924.8 265.2L1925.4 267.8L1892.4 253.4ZM1868.4 204.7L1871.3 199.9L1874.6 195.1L1878.1 190.3L1881.9 185.5L1885.8 180.9L1889.9 176.4L1894.2 172.1L1927.2 186.5L1923 190.7L1918.8 195.2L1914.9 199.9L1911.1 204.6L1907.6 209.4L1904.4 214.2L1901.4 219L1898.9 223.7L1865.8 209.3ZM1960.4 200.9L1993.4 215.2L1989.1 219.5L1985 224L1981 228.6L1977.3 233.4L1973.8 238.2L1970.5 243L1967.6 247.8L1965 252.4L1932 238.1L1934.6 233.4L1937.5 228.6L1940.8 223.8L1944.3 219L1948 214.3L1952 209.6L1956.1 205.1ZM1931.6 182.4L1936 178.6L1940.4 175.1L1944.8 172L1949 169.3L1953.2 166.9L1957.2 165L1960.9 163.5L1993.9 177.8L1990.2 179.3L1986.2 181.3L1982 183.6L1977.8 186.4L1973.4 189.5L1969 193L1964.6 196.8L1960.4 200.8L1927.3 186.4ZM1827.2 208.2L1828.6 204L1830.5 199.6L1832.7 195L1865.7 209.4L1863.5 213.9L1861.7 218.3L1860.2 222.5L1859.2 226.5L1858.5 230.1L1858.4 233.4L1858.6 236.4L1859.3 239L1826.2 224.7L1825.6 222.1L1825.3 219.1L1825.5 215.8L1826.1 212.1ZM1898.5 168L1894.2 172L1861.1 157.7L1865.5 153.7L1869.8 149.9L1874.2 146.4L1878.6 143.3L1882.9 140.5L1887 138.2L1891 136.2L1894.8 134.7L1927.8 149.1L1924 150.6L1920 152.5L1915.9 154.9L1911.7 157.6L1907.2 160.8L1902.9 164.2ZM2006.6 203.9L2010.9 200.8L2015.2 198L2019.4 195.7L2023.3 193.7L2027.1 192.2L2060.1 206.6L2056.3 208.1L2052.4 210L2048.2 212.4L2043.9 215.1L2039.6 218.3L2035.2 221.7L2030.8 225.5L2026.5 229.5L1993.5 215.2L1997.8 211.2L2002.2 207.4ZM2024 302L2024.7 298.4L2025.7 294.4L2027.2 290.2L2029 285.8L2031.2 281.3L2064.3 295.6L2062.1 300.1L2060.2 304.6L2058.7 308.8L2057.7 312.7L2057.1 316.4L2056.9 319.7L2057.1 322.7L2057.8 325.3L2024.8 310.9L2024.1 308.3L2023.9 305.4ZM1991.5 284L1990.9 287.6L1990.7 290.9L1990.9 293.9L1991.6 296.5L1958.6 282.2L1957.9 279.6L1957.7 276.6L1957.9 273.3L1958.5 269.6L1959.5 265.7L1961 261.5L1962.8 257.1L1965.1 252.5L1998.1 266.9L1995.9 271.4L1994 275.8L1992.6 280ZM2006.9 252.6L2010.5 247.8L2014.2 243L2018.2 238.4L2022.3 233.9L2026.5 229.6L2059.6 244L2055.3 248.2L2051.2 252.7L2047.2 257.4L2043.5 262.1L2040 266.9L2036.7 271.7L2033.8 276.5L2031.2 281.2L1998.2 266.8L2000.8 262.2L2003.7 257.4ZM2089.5 222.5L2093.3 221L2126.3 235.3L2122.5 236.8L2118.5 238.8L2114.4 241.1L2110.1 243.9L2105.8 247L2101.4 250.5L2097 254.3L2092.7 258.3L2059.7 243.9L2064 239.9L2068.4 236.1L2072.8 232.6L2077.1 229.5L2081.4 226.8L2085.5 224.4Z" fill="#000" fill-opacity="0.350"/><path d="M1490.2 -34.4L1485.8 -31.9L2147.6 255.6L2155.7 251.3L2159.8 249.7L1498 -37.8ZM1448.2 3.3L1438.3 17.9L2100.1 305.4L2109.9 290.8Z" fill="#000" fill-opacity="0.04"/><path d="M1497.6 -37.7L2159.5 249.8L2166.7 248.1L1504.8 -39.4ZM1433.5 27.2L2095.2 314.7L2100.2 305.2L1438.5 17.7Z" fill="#000" fill-opacity="0.07"/><path d="M1504.2 -39.4L2166.3 248.2L2172.5 248.6L1510.4 -39.1L1507.2 -39.6ZM1430.2 35.9L1926.3 251.4L2091.9 323.3L2095.3 314.5L1433.6 27Z" fill="#000" fill-opacity="0.10"/><path d="M1509.9 -39.3L2171.9 248.5L2174.7 249.5ZM1428.6 43.5L1858.4 230.2L2090.3 331L2092 323.1L1430.3 35.6Z" fill="#000" fill-opacity="0.14"/><path d="M1428.6 43.2L1428.6 49.8L2090.4 337.3L2090.3 330.7Z" fill="#000" fill-opacity="0.17"/><path d="M1430.3 54.3L1431.5 56L1433.9 57.7L2096 345.2L2093.6 343.5L2092.1 341.8L2090.3 337L1428.6 49.5Z" fill="#000" fill-opacity="0.21"/><path d="M1745.2 436.8L1736.8 443.7L1730.7 447.1L1725.6 451L1721.6 455.2L1718.9 459.6L1719 459.5L1717.4 464L1716.4 467.1L1716 472.3L1716.2 472.2L1717.1 476.8L1717.2 476.6L1719 480.4L1721.4 483.9L1725.2 488.5L1729.8 492.4L1735.4 496L1741.9 499.1L1749.3 501.9L1757.4 504.2L1766.2 506L1775.4 507.3L1784.8 508L1794.2 508.1L1803.8 507.7L1813.1 506.7L1822.1 505.2L1830.6 503.1L1838.4 500.6L1845.4 497.6L1851.4 494.3L1856.6 490.5L1861 486L1865.8 479L1867.4 474.4L1867.5 474.7L1867.9 470.1L1868 470L1866.9 464.9L1866 461.8L1863.8 457.3L1864 457.4L1860.6 453.1L1856.1 449L1849.9 445L1847.7 443.9L1834.9 433.8L1822.6 426.1L1811.1 419.7L1810 418.8L1808.6 417.5L1807.9 416.1L1806.7 404.8L1806.5 406.3L1805.6 408L1803.8 409.5L1802.6 410.2L1799.7 411.3L1796.2 412L1790.6 412.3L1785.1 411.5L1780.7 409.8L1779.6 409.1L1778.1 407.5L1777.6 406.7L1777.5 405.8L1777.6 404.4L1777.4 404.4L1776.2 416L1775.3 417.6L1772.9 419.7L1764.2 424.4L1751.9 431.9Z" fill="rgb(177, 179, 184)"/><path d="M1748 434.9L1745.4 436.8L1742.7 439L1739.6 442.2L1737.5 445.4L1731.7 450.3L1725.9 455L1728.4 451.2L1732.2 447.3L1726.1 450.7L1722 455L1719.1 459.3L1725.7 455.2L1724.3 459.3L1724 463.3L1720.7 465.8L1717.3 468.1L1716.2 471.7L1717.2 476.4L1719.4 480.9L1720.5 477.1L1726.9 471.4L1730 475.3L1734.2 478.9L1728.5 485.3L1727.5 489.1L1727.5 489L1729.4 492L1735.1 495.7L1741.7 498.9L1740.1 496.2L1740.9 492.4L1745.5 485.3L1752.3 487.9L1759.8 490.1L1756.7 497.6L1756.1 501.5L1757.2 504L1766 505.9L1775.2 507.2L1774.7 504.8L1775 500.8L1776.5 493L1785.2 493.6L1794.1 493.8L1794.3 501.7L1794.3 508.1L1803.9 507.6L1813.3 506.6L1814 504.2L1813.7 500.2L1811.7 492.4L1820 491L1827.8 489.1L1831.4 496.5L1831.9 500.4L1830.8 503L1838.6 500.4L1845.7 497.3L1847.3 494.6L1846.5 490.7L1841.6 483.8L1847.2 480.7L1851.9 477.2L1857.8 483.4L1858.8 487.2L1856.8 490.1L1860.9 486L1865.9 478.6L1864.8 474.9L1858.2 469.4L1859.7 465.4L1860 461.3L1866.7 466L1867.9 469.6L1866.9 464.9L1865.8 461.5L1863.6 457L1857.1 453.1L1854.1 449.4L1850 445.8L1852.7 447.4L1855.6 448.9L1849.8 445.1L1847.6 444L1839.4 437.5L1842.9 440.6L1845.3 443.5L1842.6 441.2L1839.6 439L1833.5 434.9L1831.6 432.5L1829.1 430.4L1834.5 433.7L1825.4 427.9L1826.5 428.7L1815.3 422L1810.1 419.3L1808.7 418L1809.2 419.1L1809.4 420L1807.9 416.9L1806.7 405.3L1806.6 406.3L1806.2 407.2L1807.4 418.9L1809 422.3L1808.3 423.3L1807.4 424.2L1806 420.6L1804.9 408.8L1802.7 410.3L1803.5 422.1L1804.7 426L1801.2 427.3L1800.4 423.3L1799.8 411.4L1796.2 412.1L1796.5 424.1L1797 428.2L1792.6 428.5L1792.5 412.4L1788.6 412.2L1788.4 424.2L1788 428.3L1783.8 427.6L1784.6 423.5L1785.1 411.6L1781.9 410.5L1781.1 422.4L1780 426.3L1777.2 424.7L1778.6 421L1779.6 409.2L1778.7 408.4L1777.9 407.5L1776.8 419.2L1775.2 422.7L1774.8 421.7L1774.5 420.7L1776.2 417.5L1776.2 417L1776.7 416.5L1776.2 416.9L1776.7 415.3L1776.4 415.8L1777.4 404.8L1776.2 416L1775.4 417.6L1771.5 421L1765.8 424.1L1767.6 422.8L1770.2 421.2L1759.6 427.3L1756.8 429L1753.8 431.3ZM1779.3 476.5L1782.1 460.3L1787.7 460.8L1793.3 460.8L1793.7 477.1L1786.5 477ZM1776.7 459.5L1771.6 458.4L1777.8 443.2L1781.3 443.9L1785.1 444.5L1782.1 460.3ZM1785.2 444.4L1786.7 436.6L1788 428.4L1792.5 428.6L1792.9 444.8L1789 444.7ZM1798.8 436.4L1797.1 428.2L1801.2 427.4L1804.2 435.3L1807.8 442.7L1804.4 443.5L1800.7 444.2ZM1739.4 482.2L1734.3 478.9L1744.5 465L1748.7 467.7L1753.7 470.2L1745.5 485.2ZM1755.8 466.4L1762.4 455.4L1766.7 457.1L1771.5 458.5L1768.4 466.2L1765.6 474.1L1759.4 472.3L1753.8 470.2ZM1771.4 441.1L1762.3 455.4L1758.5 453.5L1755.2 451.3L1766.4 438.3L1768.7 439.7ZM1764.6 436.6L1763.2 434.9L1769.7 429.3L1775.3 422.8L1776.1 423.8L1777.1 424.7L1772.2 431.8L1766.4 438.2ZM1768.7 426.5L1762 431.3L1762.1 429.5L1762.7 427.7L1769.2 423.8L1774.9 418.7L1774.5 419.8L1774.5 420.7ZM1762.7 427.7L1749.9 436.1L1751.5 433.7L1753.8 431.3L1765.3 424.4L1763.7 426ZM1755.1 451.4L1746.9 461.4L1744.5 464.9L1741.1 461.9L1738.5 458.8L1741.3 455.6L1744.3 452.5L1750.5 446.6L1752.5 449.1ZM1748.7 441.4L1758.6 433.8L1761.9 431.4L1762.3 433.2L1763.2 434.9L1750.5 446.5L1749.3 444ZM1733.2 455L1736.1 452.2L1736.8 455.5L1738.4 458.8L1732.8 465.1L1726.9 471.3L1724.9 467.4L1724.1 463.3ZM1748.7 441.4L1742.1 446.5L1739.1 449.2L1736.1 452L1736.4 448.7L1737.6 445.4L1740.4 442.9L1743.5 440.6L1749.7 436.3L1748.8 438.9ZM1759.9 490L1765.6 474.1L1772.2 475.5L1779.2 476.5L1776.5 492.9L1768 491.7ZM1776.1 434L1780 426.4L1783.7 427.6L1781 435.6L1777.8 443.1L1774.5 442.2L1771.4 441ZM1808.2 476L1804.6 460L1809.9 459.1L1814.8 457.8L1818.3 465.4L1821.4 473.2L1815 474.8ZM1814.9 457.8L1807.9 442.7L1811.1 441.7L1813.9 440.4L1823.6 454.5L1819.4 456.2ZM1814 440.4L1809 433.5L1804.8 426L1806.2 425.2L1807.4 424.3L1812.5 431.2L1818.5 437.4L1816.4 439ZM1814.7 428.6L1809.1 422.3L1809.4 421.4L1809.5 420.2L1815.3 425.9L1822.1 430.4L1821.9 432.2L1821.3 434ZM1821.8 428.7L1820.9 426.9L1833.5 435L1834.7 437.5L1835.3 440L1822.1 430.4ZM1794.2 493.7L1793.8 477.2L1801.1 476.9L1808.2 476.1L1811.6 492.4L1803 493.3ZM1793.4 460.8L1793 444.8L1796.9 444.7L1800.7 444.2L1804.5 459.9L1799 460.5ZM1810.3 419.5L1817.6 423.5L1819.4 425.1L1820.7 426.7L1814.3 423ZM1827.9 489L1821.5 473.3L1827.5 471.3L1832.8 469L1841.5 483.8L1835.1 486.6ZM1830.7 465.2L1823.6 454.5L1827.2 452.5L1830.2 450.3L1835.9 456.7L1838.7 460L1841.2 463.5L1837.4 466.3L1832.8 468.9ZM1840.5 451L1834.2 445.3L1835.2 442.8L1835.3 440.2L1841.8 445.1L1844.9 447.7L1847.9 450.4L1847.6 453.8L1846.4 457.1L1843.6 454ZM1820.2 435.8L1821.3 434.1L1834.2 445.3L1832.5 447.8L1830.2 450.2L1818.6 437.4ZM1844.4 460.4L1846.5 457.2L1852.2 463.4L1858.2 469.4L1855.6 473.4L1851.9 477.1L1841.3 463.5ZM1847.2 447.1L1845.6 443.9L1851.3 448.6L1857.1 453.2L1859.1 457.2L1859.9 461.2L1853.9 455.9L1847.9 450.4Z" fill="#000" fill-opacity="0.350"/><path d="M1759.3 429.7L1740.3 442.8L1739.2 446L1733.7 451L1735 447.5L1723 456.8L1725.7 452.7L1722 454.8L1718.9 459.6L1717.4 464L1717.2 468.4L1718.2 472.9L1721.6 470.3L1723.7 474.5L1732.8 465.3L1735.6 468.9L1743.9 458.6L1741.4 455.6L1763.3 434.9L1762.5 433.2L1768.9 428.1L1770.8 430.8L1776.1 424L1780.1 426.5L1787.9 428.4L1786.5 436.7L1789.6 437L1786.6 472.7L1779.8 472.2L1776.3 493L1785.1 493.7L1784.5 501.6L1794.5 501.8L1804.2 501.3L1822.7 498.8L1831.6 496.6L1829.7 492.6L1821.4 494.7L1817.6 482.8L1810 484.1L1807.5 472L1814 470.9L1804.6 443.7L1808 442.8L1804.3 435.1L1798.8 436.3L1797.2 428.1L1788.1 428.2L1788.5 424.1L1781.2 422.3L1777.5 419.9L1776 423.6L1774.8 421.7L1774.7 419.3L1769.1 424.7L1770.6 422L1760.6 427.7Z" fill="#000" fill-opacity="0.04"/><path d="M1751.9 431.9L1736.8 443.7L1730.7 447.1L1725.6 451L1721.6 455.2L1724.9 453.5L1722.2 457.6L1725.4 455.6L1734.4 448.3L1733.2 451.8L1739.4 446.1L1740.5 442.9L1759.5 429.8L1760.8 427.9L1769.8 422.7L1768.6 425.5L1774.4 420L1774.7 422.1L1776.1 424L1777.7 420.1L1776.3 417.3L1777.1 416.3L1776.3 416.7L1776.4 415.8L1775.6 417.3L1772.9 419.7ZM1722.8 485.1L1727.6 489.4L1733.4 493.1L1740.2 496.4L1747.9 499.3L1756.3 501.7L1765.3 503.6L1774.6 504.9L1784.6 505.7L1794.5 505.8L1794.5 501.6L1784.6 501.4L1775 500.7L1765.6 499.4L1756.7 497.5L1748.4 495.1L1740.9 492.2L1734.2 488.9L1728.6 485.3L1724 481.3L1720.6 477.1L1718.2 472.4L1717 476.3L1719.4 481.1ZM1787.9 428.4L1797 428.3L1798.6 436.6L1804.2 435.4L1807.7 442.6L1804.2 443.5L1813.7 470.7L1807.2 471.8L1809.8 484.4L1817.4 483.1L1821.3 495L1829.5 492.9L1831.3 496.6L1839.5 493.9L1846.7 490.8L1852.9 487.3L1847.3 480.5L1841.6 483.6L1837.2 476.3L1831.3 478.8L1825.7 467.5L1830.8 465.3L1821.4 451L1824.7 449.1L1810.9 432.3L1806.8 434.3L1803.1 426.6L1797.2 428.1L1796.7 424L1788.3 424.1Z" fill="#000" fill-opacity="0.07"/><path d="M1782 410.5L1778.7 408.4L1777.5 406.3L1776.6 415.2L1774.3 420.2L1776.5 416.1L1776.2 418.3L1776.9 419.7L1779.9 422L1786.3 424.1L1792.6 424.6L1792.6 412.3L1786.8 411.9ZM1717.1 476.8L1718.4 472.7L1717.4 468.2L1717.7 463.1L1716.4 467.1L1716 472.3ZM1800.4 423.2L1796.4 424L1797 428.3L1801.4 427.4ZM1802.9 426.6L1806.7 434.6L1810.9 432.6L1824.4 449L1821 450.9L1830.5 465.2L1825.4 467.4L1831.1 479.2L1837.1 476.6L1841.5 484L1847.2 480.8L1852.7 487.4L1857.9 483.6L1861.9 479.5L1864.8 475.1L1866.5 470.4L1862.9 467.8L1861.4 472L1858.2 469.2L1855.5 473.3L1851.9 476.9L1838.9 460L1841.7 457.1L1838.8 453.9L1840.7 451L1814.6 428.4L1812.5 431L1807.4 424.1ZM1794.2 501.6L1794.3 505.8L1804.2 505.4L1814.1 504.3L1813.7 500.1L1804.1 501.1Z" fill="#000" fill-opacity="0.10"/><path d="M1777.4 404.4L1776 417.9L1776.4 418.9L1777.7 406.7ZM1792.3 412.3L1792.4 424.6L1796.7 424.2L1796.4 412ZM1814.9 424.4L1815.1 426.9L1812.2 424.1L1811.7 425.3L1809 422.1L1807.3 424.3L1812.5 431.4L1814.7 428.8L1840.4 451.1L1838.5 454L1841.4 457.1L1838.5 460L1851.9 477.3L1855.6 473.6L1858.2 469.6L1861.5 472.4L1863 468.2L1866.5 470.7L1866.9 466.2L1866 461.8L1864 457.4L1860.6 453.1L1855.6 448.7L1852.1 446.9L1856.9 451.2L1859.7 454.7L1856.8 452.8L1859 457.2L1859.8 460.9L1853.7 455.7L1853.5 459.4L1844.8 450.8L1845.1 447.6L1841.9 445L1841.3 442L1834.9 437.4L1833.6 434.8L1824.1 428.7L1822.6 426.8L1817.6 423.4L1811.3 420L1813.1 421.8ZM1801.1 427.5L1804.9 426.1L1803.6 422L1800.2 423.2ZM1813.5 500.1L1813.8 504.4L1823.1 502.8L1831.9 500.6L1840.2 497.9L1839.4 493.7L1831.4 496.4L1822.7 498.5Z" fill="#000" fill-opacity="0.14"/><path d="M1796.1 412L1796.5 424.3L1802.2 422.9L1801.4 410.7ZM1815.4 424.8L1812.7 421L1817.5 423.6L1822.4 427L1823.9 428.9L1833.4 435L1834.7 437.6L1841.1 442.1L1841.7 445.1L1844.8 447.7L1844.6 450.9L1853.7 459.9L1853.9 456.2L1860.2 461.6L1859.5 457.6L1857.4 453.6L1860.7 455.5L1857.5 451.4L1853.4 447.9L1856.1 449L1847.7 443.9L1833.9 433.2L1822.6 426.1L1811.1 419.7L1808.4 417.6L1809.4 420.2L1808.9 422.3L1811.8 425.7L1812.3 424.5L1815.3 427.5ZM1804.7 426.2L1808.5 423.3L1806.9 419.5L1803.4 422.1ZM1847.2 494.8L1853.7 491.1L1852.8 487.1L1846.4 490.6L1839.2 493.8L1839.9 497.9Z" fill="#000" fill-opacity="0.17"/><path d="M1801.2 410.8L1801.7 418.7L1801.9 422.9L1805 421.4L1804 409.4ZM1749 501.8L1757.4 504.2L1756.3 501.5L1747.8 499L1740.2 496.1L1733 492.6L1734.9 495.7L1741.9 499.1ZM1807.5 416.7L1808.7 418.2L1811.9 421L1810.6 419.4ZM1809.5 421.2L1807.7 417.5L1806.7 419.7L1808.3 423.6ZM1836.6 435L1846 443.3L1846.2 443.1ZM1863.1 483L1862 479L1857.8 483.3L1852.6 487.2L1853.5 491.3L1858.8 487.4Z" fill="#000" fill-opacity="0.21"/><path d="M1807.9 416.1L1806.6 404.8L1806.2 407.1L1803.8 409.5L1804.8 421.6L1806.7 420L1807.8 418.3L1809.5 421.7L1809.6 419.6ZM1725.2 488.5L1729.8 492.4L1735.4 496L1733.4 492.8L1727.6 489.1L1723 485L1719 480.4ZM1766.2 506L1775.4 507.3L1784.8 508L1804 507.7L1813.1 506.7L1822.4 505.1L1830.6 503.1L1838.4 500.6L1845.4 497.6L1851.4 494.3L1856.6 490.5L1861 486L1865.8 479L1867.5 474.7L1868 470L1865.7 460.8L1866.6 466L1866.2 470.5L1864.6 474.9L1861.8 479.3L1862.8 483L1858.8 487.1L1853.5 491L1847.2 494.5L1840 497.7L1831.9 500.3L1823.2 502.5L1813.9 504.1L1804.3 505.2L1794.4 505.6L1784.5 505.4L1774.7 504.7L1765.2 503.4L1756 501.4L1757.1 504.1Z" fill="#000" fill-opacity="0.25"/><path d="M1774 290.3L1772.6 314.4L1770.6 318.6L1766.8 324.9L1766 328.4L1765.7 330.9L1766.3 334.8L1766.1 334.9L1766.6 336L1766.7 335.9L1769.5 340.7L1771.8 345.5L1771.8 347.2L1771.4 349.5L1770.7 351.9L1769.8 356.5L1769.8 357.7L1769.9 357.7L1770.6 361.2L1771.6 364.7L1775.3 370.2L1776.9 375.1L1777.3 377.6L1777.6 390.2L1777.2 405.9L1777.6 407.5L1777.7 407.3L1778.3 408.4L1779.3 409.2L1781.8 410.7L1783.9 411.4L1787.8 412.3L1790.3 412.5L1794.6 412.4L1797.1 412.1L1800.9 411.2L1802.6 410.5L1805.2 408.8L1806 407.9L1806 408.1L1806.4 407L1806.6 407.1L1806.8 405.4L1806.4 389.7L1806.7 377.5L1807 375.2L1808.7 370.1L1812.3 365.1L1813.6 360.6L1814.2 356.4L1813.5 352.8L1812.6 349.7L1812.2 347.3L1812.2 345.4L1814 341.7L1816.8 337L1817.6 335.2L1817.8 335.2L1818.3 329L1818.1 329L1817.3 325.3L1817.4 325.2L1813.8 319.4L1811.4 314.4L1811.1 312.3L1810.9 302.3L1809.8 286.6L1806.7 258.6L1806.4 260.2L1806 261.2L1804.1 263.1L1802.6 263.9L1799 265.2L1796.9 265.7L1792.5 266.1L1790.2 266L1785.8 265.4L1783.8 264.9L1780.5 263.4L1779.2 262.6L1777.7 260.6L1777.5 259.6L1777.6 258L1777.4 257.9Z" fill="rgb(177, 179, 184)"/><path d="M1774.6 284.6L1774.9 285.9L1774 298.3L1773.6 297L1773.2 303.3L1773 309.7L1773.4 311.1L1773.3 314.2L1772.9 317.4L1770.3 323.3L1769.9 321.8L1770.1 320.2L1770.8 318.5L1767.5 323.7L1766.7 325.7L1766 328.4L1765.8 330.5L1766.1 333.5L1766.6 335.5L1769.6 340.7L1771.9 345.5L1771.9 347.3L1771.5 349.5L1770.7 352.3L1769.9 357.3L1770.3 358.7L1770.8 361.6L1771.7 364.7L1772.6 366.3L1776 371L1777.2 372.2L1778.7 373.2L1780.3 374L1781.7 379.4L1782 382.3L1782 385.4L1780.5 384.6L1779.3 383.8L1778.3 382.8L1777.7 381.8L1777.7 378.8L1777.3 375.6L1776.9 374.4L1777.4 377.6L1777.4 380.8L1777.7 381.8L1777.9 391.2L1777.9 394.1L1777.6 393.1L1777.3 405.9L1777.6 407.1L1777.9 394.4L1778.5 395.5L1779.4 396.4L1780.7 397.2L1782.1 398L1781.9 410.6L1785.8 411.8L1790.2 412.4L1790.2 399.7L1794.7 399.7L1798.9 399L1799 411.6L1802.7 410.3L1804.1 409.5L1805.3 408.5L1805 395.9L1805.8 395.1L1806.3 394.1L1806.4 392.9L1806.6 380.2L1806.4 381.4L1805.9 382.4L1805.2 383.3L1805.3 380.3L1805.6 377.3L1807.4 371.6L1811.9 365.4L1812.5 364.1L1813.4 361L1813.9 357.9L1813.1 359.6L1812 361.1L1811.5 357.9L1810.7 354.7L1810.2 351.5L1810.2 348.5L1811.3 347.1L1813.9 341.6L1817 336.3L1815.5 338.1L1815.7 335L1815.1 332L1812.1 325.8L1813.3 324.4L1814 322.8L1814.2 321.3L1813.8 319.7L1817.1 324.9L1813.7 319.4L1811.3 314.4L1811 312.3L1811 309L1810.8 310.5L1810.2 311.9L1809.2 313.1L1809 306.8L1808.6 300.5L1809.6 299.4L1810.2 298.1L1810.4 296.6L1809.7 287.1L1809.4 284L1809.2 285.4L1808.6 286.6L1807.7 287.7L1806.8 278.2L1806.5 275L1807.3 274.1L1807.8 273L1808 271.6L1806.7 259L1806.5 260.2L1806.1 261.3L1805.2 262.3L1806.4 275L1805.2 276L1803.6 276.9L1801.8 277.7L1799.7 278.3L1799.1 265.3L1794.7 266L1790.1 266.1L1790 279.2L1785.2 278.5L1783.1 278L1781.1 277.3L1782 264.3L1780.4 263.5L1779.2 262.6L1778.2 261.7L1777.6 260.6L1776.3 273.1L1776.1 272.1L1776.2 270.8ZM1785.9 399.1L1782.2 397.9L1782.1 385.5L1785.8 386.7L1790.2 387.2L1790.2 399.7ZM1784.8 375.4L1782.4 374.8L1780.4 374L1777.9 369.8L1777.3 367.2L1777 364.3L1779.6 365.3L1782.6 366.1L1785.9 366.6L1789.2 366.9L1789.4 372.3L1789.8 376.1ZM1789.3 366.9L1789.5 353.8L1792.6 353.8L1795.7 353.7L1798.8 353.3L1801.6 352.7L1801.7 355.8L1802.6 365.7L1799.5 366.4L1796.1 366.8L1792.7 367ZM1783.5 352.9L1780.7 352.2L1778.3 351.3L1776.5 346.5L1774.3 341.9L1777.5 343.1L1781 344L1784.8 344.7L1788.7 345L1789.5 353.7L1786.4 353.4ZM1788.8 342L1789.3 331.7L1792.7 331.7L1796.1 331.6L1799.5 331.1L1802.6 330.5L1804.2 337.3L1804.6 340.6L1804.5 343.6L1800.8 344.3L1796.9 344.8L1792.8 345.1L1788.8 345ZM1792.6 318.2L1789.7 318.1L1789.7 305.4L1792.6 305.4L1795.4 305.3L1798.2 304.9L1800.8 304.4L1801.1 317.1L1798.4 317.7L1795.5 318ZM1795.3 292.2L1789.9 292.3L1790 279.2L1795 279.2L1799.7 278.4L1800.3 291.4L1797.9 291.9ZM1776.9 328.9L1778.7 322.3L1779 319.1L1779.1 315.9L1781.4 316.7L1784 317.4L1786.8 317.9L1789.6 318.2L1789.5 324.6L1789.2 331.6L1785.8 331.3L1782.6 330.7L1779.6 329.9ZM1779.5 303.1L1780.2 290.3L1782.3 291.1L1784.6 291.7L1787.2 292.1L1789.8 292.4L1789.7 305.3L1786.9 305L1784.2 304.6L1781.7 303.9ZM1776.8 288.2L1775.7 287.1L1775 285.9L1776.4 273.4L1777 274.5L1778.1 275.5L1779.4 276.5L1781.1 277.3L1780.1 290.2L1778.3 289.3ZM1771.7 352.6L1772.3 349.5L1772.3 346.4L1773.2 347.8L1774.5 349.1L1776.2 350.3L1778.2 351.3L1778.2 354.4L1776.9 364.2L1774.6 363L1772.7 361.7L1771.3 360.2L1770.4 358.7L1770.9 355.6ZM1774.5 335.6L1774.1 338.7L1774.2 341.8L1771.5 340.4L1769.3 338.9L1767.6 337.1L1766.6 335.3L1766.4 332.2L1767 329.2L1770.3 323.5L1771.2 325L1772.6 326.5L1774.5 327.8L1776.8 329ZM1773.4 311.1L1774 298.6L1774.8 299.9L1776 301.1L1777.5 302.2L1779.4 303.1L1779 315.8L1777.1 314.8L1775.4 313.7L1774.2 312.4ZM1801.7 352.6L1803 347.9L1804.5 343.6L1807.9 342.6L1810.9 341.3L1813.4 339.9L1815.3 338.3L1812.5 343.3L1810.2 348.4L1808.6 349.7L1806.6 350.8L1804.3 351.8ZM1799 398.9L1799 386.5L1802.6 385.2L1804 384.4L1805.1 383.5L1805 395.9L1803.9 396.8L1802.5 397.6ZM1800.3 375.1L1802 371.2L1802.7 365.8L1805.5 364.9L1808 363.8L1810.2 362.6L1811.9 361.2L1811.4 364.1L1810.6 366.9L1807.4 371.6L1806.1 372.7L1804.4 373.6L1802.4 374.5ZM1790.2 387.2L1790.2 381.2L1789.9 376.1L1795.2 376L1797.7 375.7L1800.2 375.2L1799.2 380.4L1799 386.4L1794.7 387.1ZM1801.4 323.5L1801.2 317.1L1803.6 316.4L1805.8 315.5L1807.6 314.4L1809.1 313.2L1809.2 316.4L1809.5 319.6L1812 325.8L1810.3 327.2L1808.1 328.4L1805.6 329.5L1802.7 330.4ZM1800.9 304.3L1800.4 291.4L1802.6 290.8L1804.6 289.9L1806.3 288.9L1807.7 287.9L1808.6 300.5L1807.2 301.6L1805.4 302.7L1803.2 303.6Z" fill="#000" fill-opacity="0.350"/><path d="M1772.6 326.2L1771.1 324.7L1769.6 327.7L1768.7 326.1L1766.9 329.2L1768.1 331.3L1771.7 334.3L1774.6 335.8L1781.3 337.8L1788.7 338.8L1792.9 338.9L1792.9 335.1L1789.2 335L1789.4 331.5L1786 331.2L1786.7 324.2L1778.8 322.1L1774.9 319.8Z" fill="#000" fill-opacity="0.04"/><path d="M1773 317.3L1772.6 315.6L1770.1 321.1L1770.2 319.7L1766.6 325.5L1766.4 327.9L1766.9 329.5L1768.7 326.6L1769.7 328.2L1771.2 325.2L1772.6 326.6L1775.1 320ZM1767.3 334.1L1771.4 337.6L1777.4 340.1L1784.6 341.7L1788.8 342.1L1788.9 338.6L1781.2 337.6L1774.6 335.5L1769.8 332.6L1768 330.8ZM1770.8 355.6L1773 358.6L1772.6 361.8L1774.7 363.3L1779.5 365.3L1786 366.7L1786.1 363.4L1789.4 363.7L1789.5 360.1L1783.3 359.2L1783.6 355.9L1778.3 354.3L1774.3 351.9L1773.8 355L1771.7 352.2ZM1786.5 324.2L1785.7 331.4L1789.1 331.7L1788.9 335.3L1792.6 335.4L1792.7 338.9L1800.8 338.2L1799.6 331L1796.3 331.4L1795.8 324.4Z" fill="#000" fill-opacity="0.07"/><path d="M1777.5 260.3L1773.5 304.8L1774.2 306.2L1774 315.2L1773.2 313.9L1772.8 317.4L1775.1 320.3L1778.8 322.4L1786.5 324.4L1792.7 324.8L1792.7 321.3L1789.7 321.2L1789.9 295.8L1792.7 295.8L1792.6 266.1L1787.9 265.8L1782 264.2L1779.2 262.6ZM1773.5 312.6L1770.6 318.6L1767.4 323.7L1766.5 326.1L1769.8 320.8L1769.7 322.4L1772.7 316ZM1766.3 332.8L1767.5 334.4L1768.2 331L1767.1 329.2L1766.6 326.9L1765.8 330.3ZM1774.1 341.9L1777.6 343.2L1777.4 339.9L1774 338.6ZM1771.9 347.3L1769.8 357.1L1770.4 359.3L1772.8 362L1773.3 358.5L1771 355.6L1771.8 352.8L1774 355.6L1774.5 352.3L1778.4 354.6L1783.3 356.1L1783.1 359.4L1789.3 360.3L1789.2 363.5L1785.9 363.2L1785.7 366.7L1796.3 366.9L1796.2 363.6L1799.4 363.2L1799.1 359.5L1796 359.9L1795.9 356.6L1786.5 356.4L1786.5 353.4L1778.3 351.2L1774.5 348.9L1773 347.4L1773 350.3ZM1779.1 380.4L1779.3 392.8L1778.4 391.9L1778.1 408L1779.3 409.2L1782.1 410.8L1785.9 411.9L1790.3 412.5L1790.3 396.4L1788.1 396.2L1788 383.8L1782 382.2ZM1799.4 331.2L1800.5 338.2L1807.8 336.4L1805.7 329.4L1802.8 330.3L1801.5 323.4L1795.5 324.4L1796 331.7ZM1788.6 342.1L1797 342L1796.9 338.5L1788.7 338.6Z" fill="#000" fill-opacity="0.10"/><path d="M1775 280.3L1773.1 302.9L1772.4 316.5L1773 318L1773.4 314.7L1774.2 316L1774.5 306.1L1773.7 304.8L1774.7 289.1L1777.7 260.7L1777.6 258ZM1765.7 330.9L1766.7 327.4L1766.9 325L1766 328.4ZM1767.8 337.7L1774.4 342L1774.2 338.7L1769.2 335.7L1766.2 331.7L1766.4 335.4ZM1771.9 344.2L1771.2 351.6L1771.4 351.6L1771.9 348.5L1772.3 349.9L1773.2 351.2L1773.2 347.6ZM1770 357.7L1770.6 354.1L1770.7 351.9L1770 355.5ZM1774.9 366.1L1780 368.3L1789.4 369.9L1789.4 366.8L1782.6 365.9L1777 364.1L1772.8 361.6L1771.1 359.9L1771.6 363.3ZM1777.4 383.3L1777.2 405.9L1777.6 407.5L1778.3 408.4L1778.6 392.5L1779.6 393.4L1779.3 380.9L1782.1 382.5L1787.8 384L1787.9 396.4L1790.1 396.6L1790 412.5L1794.9 412.4L1794.9 383.9L1790.3 384L1790.2 381.1L1785.6 380.5L1781.8 379.3L1778.9 377.6L1777 375ZM1789.7 295.5L1789.5 321.4L1792.5 321.5L1792.5 324.8L1798.7 324.2L1798.6 320.7L1795.7 321.1L1795.6 311.8L1798.5 311.4L1797.1 265.6L1792.3 266.1L1792.4 295.6ZM1781.1 344.1L1788.6 345.1L1792.9 345.2L1792.9 341.9L1784.7 341.5L1777.2 339.8L1777.3 343.1ZM1786.3 356.6L1795.7 356.9L1795.8 360.2L1798.9 359.8L1799.2 363L1795.9 363.4L1796 366.9L1802.8 365.8L1802.5 362.5L1805.3 361.7L1804.8 358.1L1802.1 358.9L1801.8 355.6L1795.9 356.6L1795.9 353.5L1786.3 353.3ZM1805.5 329.7L1807.5 336.5L1813.2 333.7L1810.4 327L1808.2 328.3L1806.2 321.7L1801.2 323.5L1802.6 330.6ZM1796.8 342L1804.7 340.7L1804.4 337.2L1796.7 338.5Z" fill="#000" fill-opacity="0.14"/><path d="M1766 333.5L1766.7 335.9L1765.9 329.7L1765.7 329.8ZM1772.5 366.2L1774.2 367.9L1778.1 370.1L1786.1 372.2L1792.8 372.6L1792.8 370L1796.2 369.8L1796.3 366.7L1789.1 366.8L1789.2 369.6L1782.9 368.8L1777.3 367.1L1775.1 365.9L1771.9 363.2L1771.4 360.2L1769.8 356.5L1770.9 362.4ZM1775.7 370.5L1777.7 379.3L1777.3 375.3L1777.8 376.7L1780.3 378.9L1785.5 380.7L1790 381.3L1790.1 384.2L1794.6 384.2L1794.6 412.4L1799.2 411.7L1799.2 383.2L1797.1 383.6L1797.2 380.7L1790.2 381.1L1790 376L1784.8 375.3L1780.4 373.9L1777.2 372ZM1795.4 311.6L1795.4 321.4L1798.3 321L1798.5 324.3L1804 322.9L1803.8 319.4L1801.3 320.1L1801.2 310.9L1803.6 310.1L1801.1 264.6L1796.8 265.7L1798.2 311.2ZM1792.7 341.9L1792.7 345.2L1800.9 344.5L1801 341.2ZM1795.6 353.5L1795.7 356.9L1801.6 355.9L1801.8 359.2L1804.6 358.4L1805 361.5L1802.2 362.4L1802.5 365.9L1808.2 363.8L1806.8 353.8L1801.8 355.6L1801.8 352.5ZM1809.6 319.3L1806 321.8L1808.1 328.7L1810.2 327.4L1813 333.8L1816.6 330.3L1813.3 324.1L1812.1 325.6ZM1810.7 334.9L1804.1 337.2L1804.5 340.7L1811.2 338.3Z" fill="#000" fill-opacity="0.17"/><path d="M1773 347.7L1776.4 350.6L1780.9 352.4L1786.5 353.6L1792.8 353.9L1792.8 349.1L1789.3 349L1788.9 344.9L1781 343.8L1774.3 341.7L1769.4 338.8L1767.3 336.7ZM1775.1 369.2L1777.1 375.7L1778.1 377.2L1776.1 370.9ZM1778.5 373.2L1780.7 374.3L1782.7 375L1781.5 372.7L1776.8 370.6ZM1792.6 369.7L1792.5 372.6L1799.1 372L1799.4 369.4L1802.5 368.7L1802.8 365.6L1796 366.7L1795.9 369.6ZM1789.7 376L1790 381.3L1797 381L1796.8 383.9L1798.9 383.5L1798.9 411.7L1800.9 411.2L1802.8 410.4L1802.8 381.8L1801.1 382.5L1801.3 379.6L1797.2 380.7L1797.9 375.5ZM1804.2 263L1800.9 264.7L1803.4 309.9L1800.9 310.7L1801.1 320.5L1803.5 319.7L1803.8 322.9L1808.2 320.8L1807.8 317.3L1806 318.4L1805 293.2L1806.8 292.2ZM1808 342.7L1808.2 339.3L1800.7 341.2L1800.7 344.5ZM1806.6 354.1L1807 357.4L1808 364L1810.4 362.6L1809.9 359.4L1811.6 358L1810.7 354.5L1809.2 355.8L1808.7 352.6L1806.8 353.7L1806.8 350.7L1801.6 352.6L1801.6 355.9ZM1813.2 324.5L1816.5 330.5L1817.7 327.2L1817.1 324.7L1815.1 321.6L1815.4 323.1L1814 320.7L1813.9 322.3L1811.3 316.5L1809.4 319.5L1812 326.1ZM1810.4 335L1811 338.4L1815.8 335.1L1815.1 331.8Z" fill="#000" fill-opacity="0.21"/><path d="M1766.3 334.8L1770.8 342.9L1771 342.7ZM1800.8 344.3L1788.6 344.9L1789 349.3L1792.6 349.4L1792.5 353.9L1798.9 353.4L1806.5 351.1L1806.5 354.2L1808.5 353L1809 356.3L1810.6 355L1811.3 357.9L1809.7 359.3L1810.1 362.5L1805.5 364.7L1802.5 365.6L1802.3 368.5L1799.2 369.2L1798.9 371.8L1795.9 372.1L1789.4 372.2L1780.4 370.7L1775.8 368.6L1772.2 365.7L1775.9 371L1779 373.5L1777.5 371.2L1781.3 372.9L1782.4 374.9L1785 375.6L1792.4 376.3L1797.6 375.8L1797 381L1801.1 380L1800.8 382.9L1802.5 382.2L1802.6 410.5L1805.2 408.8L1806.6 407.1L1806.4 389.7L1807 375.2L1808.7 370.1L1812.3 365.1L1813.6 360.6L1814.2 356.4L1812.6 349.7L1812.2 345.4L1817.8 335.2L1818.3 329L1817.4 326L1817.1 328.4L1814.9 332L1815.5 335L1811 338.1L1807.9 339.4L1807.8 342.5ZM1806 261.2L1804 263.1L1806.5 292L1804.8 293L1805.8 318.8L1807.6 317.7L1808 320.9L1810.6 318.6L1811.3 317.2L1814 323.2L1814.2 321.6L1815.9 324.5L1815.6 322.8L1817.2 325.3L1811.4 314.4L1809.8 286.6L1806.7 258.6Z" fill="#000" fill-opacity="0.25"/><path d="M1713.9 218.5L1722.3 231L1726 235.6L1736.8 245.7L1749.2 253.9L1759.5 258.6L1764.9 260.6L1770.1 262.1L1775.8 263.2L1783.7 264.4L1792.9 264.8L1797.7 264.6L1803.3 264L1811 262.7L1816.5 261.4L1821.5 259.8L1832.2 255.2L1837.4 252.3L1843.8 248L1848.7 244.4L1860.1 233.1L1872.1 215L1871.9 214.9L1868.5 220.1L1864 224.6L1858.4 228.8L1851.6 232.6L1843.8 236L1835.1 238.9L1825.7 241.2L1815.7 243L1805.2 244.1L1794.6 244.6L1783.9 244.4L1773.3 243.6L1763.1 242.2L1753.4 240.1L1744.3 237.5L1736 234.4L1728.7 230.7L1722.5 226.7L1717.5 222.4L1713.4 217.3Z" fill="rgb(177, 179, 184)"/><path d="M1737.2 245.9L1748.9 253.6L1753.9 256.1L1748.2 252.1L1754.6 254.5L1761.6 256.5L1765.5 259.9L1769.6 261.8L1775.4 263L1783.1 264.2L1788.3 264.6L1793.2 264.7L1793.5 264.4L1799.6 264.1L1805.7 263.5L1808.3 261.8L1810.6 258.7L1818.4 257.4L1825.8 255.6L1821.4 259L1816.9 261.2L1821.9 259.5L1832.9 254.7L1838.9 250.6L1844.1 247.7L1848.7 244.3L1856.2 236.9L1863.5 225.8L1867.9 221.4L1871.8 215.3L1868.5 220.1L1864.1 224.7L1863.5 225.7L1857.9 229.9L1851.2 233.6L1851.7 232.7L1843.8 236.1L1835.1 239L1834.8 239.9L1825.4 242.2L1815.5 243.9L1815.7 243L1805.2 244.2L1794.6 244.7L1794.5 245.6L1784 245.4L1773.5 244.6L1773.4 243.7L1763.1 242.2L1753.3 240.2L1753.6 241.1L1744.7 238.5L1736.5 235.4L1736 234.4L1728.7 230.8L1722.4 226.7L1722.9 227.7L1718.1 223.5L1714.2 218.8L1722.4 230.9L1725.6 234.9L1733.4 242.5ZM1761.7 256.4L1757.7 250.8L1753.7 241.2L1763.4 243.2L1773.5 244.6L1775.4 253.9L1777.3 259.2L1769.3 258ZM1785.6 259.9L1794 260L1793.5 264.3L1787.3 264.2L1781.2 263.8L1779.3 262.3L1777.4 259.2ZM1794.1 259.9L1794.6 245.6L1805.1 245.1L1815.4 244L1813 253.4L1810.6 258.7L1802.4 259.6ZM1730.2 238.9L1723.1 228L1729.3 231.9L1736.4 235.5L1742.1 245.6L1747.9 251.8L1742.3 249.1L1737.4 245.9ZM1845 244.1L1838.8 250.6L1832.7 253.2L1826 255.4L1830.4 249.7L1834.8 240L1843.4 237.1L1851.1 233.8Z" fill="#000" fill-opacity="0.350"/><path d="M1713.4 217.3L1722.3 231L1726 235.6L1736.8 245.7L1749.2 253.9L1759.5 258.6L1770.1 262.1L1783.7 264.4L1792.9 264.8L1803.3 264L1816.5 261.4L1821.5 259.8L1832.2 255.2L1837.4 252.3L1848.7 244.4L1860.1 233.1L1872.1 215L1868.5 220.1L1864 224.6L1858.4 228.8L1851.6 232.6L1843.8 236L1835.1 238.9L1825.7 241.2L1815.7 243L1805.2 244.1L1794.6 244.6L1783.9 244.4L1773.3 243.6L1763.1 242.2L1753.4 240.1L1744.3 237.5L1736 234.4L1728.7 230.7L1722.5 226.7L1717.5 222.4Z" fill="#000" fill-opacity="0.33"/><path d="M1848 179.1L1844 177.5L1839.7 176L1835.3 174.6L1830.7 173.4L1825.9 172.3L1820.9 171.3L1815.8 170.5L1810.7 169.9L1805.4 169.4L1800.1 169.1L1794.8 168.9L1789.4 168.9L1784.1 169.1L1778.8 169.4L1773.5 169.9L1768.3 170.5L1763.3 171.3L1758.3 172.3L1753.5 173.4L1748.9 174.6L1744.4 176L1740.2 177.5L1736.1 179.1L1732.3 180.9L1728.8 182.7L1725.5 184.7L1722.6 186.8L1719.9 188.9L1717.5 191.2L1715.4 193.4L1713.7 195.8L1712.3 198.2L1711.3 200.6L1710.6 203.1L1710.2 205.6L1710.2 208L1710.6 210.5L1711.2 213L1712.3 215.4L1713.7 217.8L1715.4 220.1L1717.4 222.4L1719.8 224.7L1722.5 226.8L1725.4 228.9L1728.7 230.8L1732.2 232.7L1736 234.5L1740 236.1L1744.3 237.6L1748.7 239L1753.3 240.2L1758.1 241.3L1763.1 242.3L1768.2 243.1L1773.3 243.7L1778.6 244.2L1783.9 244.5L1789.2 244.7L1794.6 244.7L1799.9 244.5L1805.2 244.2L1810.5 243.7L1815.7 243.1L1820.7 242.3L1825.7 241.3L1830.5 240.2L1835.1 239L1839.6 237.6L1843.8 236.1L1847.9 234.5L1851.7 232.7L1855.2 230.9L1858.5 228.9L1861.4 226.8L1864.1 224.7L1866.5 222.5L1868.6 220.2L1870.3 217.8L1871.7 215.4L1872.7 213L1873.4 210.5L1873.8 208.1L1873.8 205.6L1873.4 203.1L1872.8 200.6L1871.7 198.2L1870.3 195.8L1868.6 193.5L1866.6 191.2L1864.2 188.9L1861.5 186.8L1858.6 184.7L1855.3 182.8L1851.8 180.9Z" fill="#9fa0a4"/><path d="M1842.7 178.8L1834.2 176L1825 173.7L1815.2 172L1810.2 171.4L1799.9 170.6L1789.5 170.5L1779.1 170.9L1774 171.4L1764 172.8L1754.5 174.8L1745.6 177.4L1741.5 178.8L1733.8 182.1L1727.2 185.9L1721.7 190L1717.4 194.4L1715.7 196.7L1714.3 199L1713.3 201.4L1712.6 203.8L1712.3 206.2L1712.3 208.6L1712.6 211L1713.3 213.4L1714.3 215.8L1717.3 220.4L1721.6 224.8L1727.1 228.9L1730.3 230.8L1737.4 234.4L1745.5 237.4L1754.3 240L1763.8 242L1773.8 243.4L1784.1 244.2L1794.5 244.3L1804.9 243.9L1815.1 242.8L1820 242L1829.5 240L1838.4 237.5L1842.5 236L1850.2 232.7L1856.8 228.9L1862.3 224.8L1866.6 220.4L1869.7 215.8L1870.7 213.4L1871.4 211L1871.7 208.6L1871.7 206.2L1871.4 203.8L1870.7 201.4L1869.7 199L1866.7 194.4L1862.4 190L1856.9 185.9L1850.3 182.2Z" fill="rgb(177, 179, 184)"/><path d="M1725.8 191.4L1732.5 200.3L1728.5 203L1724.5 204.9L1720.5 206.1L1714.7 198.3L1713.3 201.4L1712.6 203.8L1712.3 206.3L1716.6 206.6L1720.5 206.2L1727 214.3L1733.7 221.8L1740.3 228.5L1736.3 229L1732.3 228.6L1728.3 227.6L1721.7 220.9L1715.1 213.4L1712.5 210.1L1713.3 213.4L1714.3 215.8L1715.6 218.1L1717.3 220.4L1719.3 222.7L1721.6 224.8L1724.2 226.9L1727.1 228.9L1732.8 232.2L1732.2 231.6L1725.6 227.1L1722.1 224.4L1724.4 225.9L1728.3 227.7L1734 232.8L1741.3 236L1749.8 238.8L1759 241.1L1768.8 242.8L1773.8 243.4L1783.4 244.1L1778.8 242.1L1772.2 238.4L1776.2 234.9L1780.2 230.7L1784.2 225.9L1790.7 229.5L1797.3 232.5L1804 234.8L1800 239.7L1797.9 241.8L1795.6 242.2L1791.5 242.4L1789.1 244.3L1794.5 244.3L1804.9 243.9L1815.1 242.8L1824.8 241.1L1829.5 240L1836.2 238.1L1834.2 237.5L1827.5 238.5L1823.3 238.8L1820.6 241L1823.9 236.9L1830.4 236.2L1837 234.7L1843.6 232.4L1840 236.9L1846.5 234.4L1850.2 232.7L1853.6 230.9L1856.8 228.9L1859.7 226.9L1862.3 224.8L1864.6 222.7L1864.9 222.4L1864.8 222.3L1860.1 225.4L1863.5 221.1L1869.2 216.6L1870.7 213.4L1871.4 211L1871.7 208.6L1871.7 208.5L1867.5 215.4L1863.5 221.1L1856.9 225.6L1850.3 229.3L1843.8 232.3L1847.8 226.6L1851.7 220.2L1855.7 213.1L1862.2 210.1L1868.8 206.4L1871.5 204.6L1870.7 201.4L1869.7 199L1868.4 196.7L1866.7 194.4L1865.2 192.8L1859.7 205.1L1855.7 213L1849.1 215.3L1842.5 216.8L1835.9 217.6L1839.9 209.7L1843.9 201L1847.9 191.6L1854.4 190.9L1861.4 189.2L1856.9 185.9L1851.3 182.7L1847.8 191.6L1841.2 191.6L1834.6 190.9L1828.1 189.4L1833.3 175.8L1825 173.7L1820.2 172.8L1811.6 171.6L1808.2 180.4L1801.6 176L1794.7 170.5L1785.9 170.6L1780.3 182.9L1776.3 190.8L1769.8 184.1L1763.1 176.7L1760.6 173.5L1752.7 175.3L1748.5 182.1L1744.5 187.7L1738.8 179.9L1733.8 182.1L1730.4 184L1727.2 185.9L1723.8 188.3ZM1777.6 221.3L1771 216.1L1764.4 210.1L1768.3 204.5L1772.3 198.1L1776.4 190.9L1783 196.9L1789.6 202.1L1796.1 206.5L1792.2 213.7L1788.1 220.1L1784.2 225.8ZM1744.3 227.4L1748.4 225.4L1752.3 222.8L1758.9 228.7L1765.5 233.9L1772.1 238.4L1768.8 240.6L1767.9 239.9L1761.3 238.1L1754.6 237.2L1748.7 235.8L1747 234.5L1740.4 228.6ZM1745.7 216L1739.1 208.5L1732.5 200.3L1736.5 196.9L1740.5 192.7L1744.5 187.8L1751.1 196L1757.7 203.5L1764.3 210.2L1760.3 215.1L1756.3 219.3L1752.3 222.7ZM1804.1 234.7L1808.1 229L1812.1 222.6L1816 215.5L1822.6 216.9L1829.2 217.7L1835.8 217.7L1831.8 224.8L1827.8 231.2L1823.8 236.9L1817.2 236.9L1810.6 236.2ZM1800.2 198.6L1804.2 190L1808.2 180.5L1814.8 184.2L1821.4 187.2L1828 189.4L1824 198.8L1820 207.5L1816 215.4L1809.4 213.2L1802.8 210.2L1796.2 206.5Z" fill="#000" fill-opacity="0.350"/><path d="M1784.2 174.3L1776.2 190.9L1782.8 196.8L1774.8 210.5L1781.4 215.7L1773.4 226.3L1780 230.8L1776 235L1782.6 238.7L1789.2 241.7L1786.2 244.3L1799.7 244.2L1815.1 242.8L1829.5 240L1840.2 236.8L1843.8 232.5L1850.4 229.5L1858.4 217.3L1865 213.6L1869 206.4L1871.5 204.7L1869.7 199L1866.7 194.4L1862.4 190L1856.4 185.6L1850.3 200.4L1856.9 198.9L1853 207.4L1849 215.2L1842.4 216.8L1834.4 230.4L1827.8 231.1L1823.8 236.8L1817.2 236.8L1813.2 241.8L1806.6 241L1800.2 239.6L1804.2 234.7L1797.4 232.4L1791 229.5L1798.8 217.6L1803 210.2L1796.3 206.5L1804.2 190.1L1810.9 193.8L1818.9 174.2L1825.5 177.2L1826.6 174.1L1819.2 172.7L1818.7 173.9L1815.6 172.1L1805.1 170.9L1794.7 170.5L1780.8 170.8ZM1864.8 222.5L1866.1 221L1864.4 222.5Z" fill="#000" fill-opacity="0.04"/><path d="M1763 176.7L1759 183.9L1765.6 191.3L1757.6 203.5L1764.2 210.2L1760.2 215.1L1766.8 221.1L1762.8 225.3L1769.4 230.5L1765.4 233.9L1772 238.4L1769.2 240.2L1761.5 238L1754.6 237.1L1750.8 239.1L1759 241.1L1768.8 242.8L1778.9 243.9L1789.3 244.3L1799.7 244.2L1810 243.4L1820 242L1828.9 240.2L1823.5 238.7L1819.5 241.7L1812.8 239.9L1808.8 242.9L1802.2 241.1L1798.2 244.1L1789.5 241.7L1776.4 234.9L1780.4 230.7L1773.7 226.3L1781.7 215.6L1775.1 210.4L1783.1 196.8L1776.5 190.8L1784.5 174.2L1781.1 170.8L1768.9 172L1760.4 173.5ZM1864.7 222.3L1860.4 225.1L1863.6 221.2L1869.1 216.8L1869.7 215.8L1871.4 211L1871.7 208.6L1871.5 204.4L1868.8 206.2L1864.8 213.4L1858.2 217.2L1850.2 229.3L1843.6 232.3L1841.2 235.2L1838.1 234.4L1831.4 239.5L1842.5 236L1850.2 232.7L1859.7 226.9ZM1741.6 233.5L1735 230.6L1725.8 228.1L1730.3 230.8L1738.8 235ZM1719.2 222L1718.6 221.8L1718.9 222.2Z" fill="#000" fill-opacity="0.07"/><path d="M1748.4 182.1L1744.4 187.8L1751 196L1747 200.9L1753.6 208.4L1749.6 212.6L1756.2 219.3L1752.1 222.7L1758.7 228.7L1754.7 231.4L1761.3 236.6L1757.3 238.5L1761.9 241.6L1772.2 243.2L1768.4 241.1L1772.4 238.4L1765.8 233.9L1769.7 230.5L1763.1 225.2L1767.1 221.1L1760.5 215.1L1764.5 210.1L1757.9 203.4L1765.9 191.3L1759.3 183.8L1763.3 176.7L1760.7 173.4L1745 177.6ZM1863.4 221L1859.4 225.9L1852.8 230.4L1851.2 232.1L1856.8 228.9L1862.3 224.8L1866.6 220.4L1869.5 216.2ZM1748 235.6L1741.4 233.4L1738.5 234.8L1751.1 239.1L1754.9 237.1ZM1778.4 241.8L1773.8 241.7L1781.1 243.8L1785.5 240.4ZM1802.7 241L1791 242.4L1798.5 244.2ZM1842.1 234.5L1837.5 234.5L1842.7 235.9L1849.2 233.1ZM1834.5 237.4L1827.5 238.4L1822.9 238.7L1828.4 240.3L1832 239.4Z" fill="#000" fill-opacity="0.10"/><path d="M1733.7 183.7L1729.7 187.9L1736.3 196.9L1732.3 200.3L1738.9 208.5L1734.9 211.2L1748.1 225.4L1744.1 227.3L1750.7 233.3L1746.7 234.5L1753.4 239.7L1762.5 241.7L1757.8 238.6L1761.8 236.6L1755.1 231.4L1759.1 228.7L1752.5 222.7L1756.5 219.3L1749.9 212.6L1753.9 208.4L1747.3 200.9L1751.3 196L1744.7 187.8L1748.7 182.1L1745.3 177.5L1733 182.6ZM1718.9 221.9L1724.2 226.9L1725.9 227.3ZM1846.5 233.9L1849 233.2L1853.3 230L1853.2 229.8ZM1819.5 242L1824 238.5L1816.7 241.2ZM1808.9 243.2L1813.4 239.7L1806.1 242.4Z" fill="#000" fill-opacity="0.14"/><path d="M1720 191.5L1728.3 203L1724.3 204.9L1730.9 213.1L1726.9 214.3L1740.1 228.4L1736 228.9L1746.2 237.7L1754.1 239.9L1747.2 234.6L1751.2 233.4L1744.5 227.4L1748.5 225.4L1735.3 211.2L1739.3 208.6L1732.7 200.3L1736.7 196.9L1730 187.9L1734 183.7L1733.2 182.5L1727.2 185.9ZM1717.1 194.7L1715.7 196.7L1715.6 196.8L1718.1 196.1ZM1712.3 205.8L1712.3 206.3L1712.8 206.5Z" fill="#000" fill-opacity="0.17"/><path d="M1720.2 191.4L1717 194.9L1717.7 195.9L1715.7 196.7L1713.1 202.2L1722.8 214.7L1718.8 214.4L1732 228.5L1738.5 234.4L1736.1 233.8L1746.8 237.9L1736.6 229.1L1740.6 228.6L1727.3 214.4L1731.3 213.2L1724.7 205L1728.7 203.1ZM1728.5 229.1L1725.6 227L1724.3 227L1726.4 228.5Z" fill="#000" fill-opacity="0.21"/><path d="M1719.1 222.4L1720.8 223.6L1716.2 219ZM1717.6 219.2L1728.5 229.8L1733.7 232.7L1739.4 234.9L1732.4 228.6L1719.4 214.6L1723.4 214.9L1713.2 201.9L1712.3 206.2L1712.6 211L1713.3 213.4L1715.4 217.8Z" fill="#000" fill-opacity="0.25"/><path d="M1715.2 217.4L1717.2 220.3L1721.6 224.8L1729.6 230.5L1717.8 219Z" fill="#000" fill-opacity="0.29"/><path d="M1866.1 221L1846.1 234.1L1842.1 234.5L1838.4 234.4L1838.5 234.1L1834.1 237.5L1823.5 238.7L1816.9 241.1L1812.9 239.9L1806.3 242.4L1802.3 241.1L1791.7 242.3L1784.6 240.3L1778.4 241.8L1774.4 241.7L1760.8 237.9L1754.6 237.1L1748 235.6L1734.3 230.4L1728.1 228.7L1718.4 221.7L1724.2 226.9L1730.3 230.8L1737.4 234.4L1745.5 237.4L1759 241.1L1768.8 242.8L1778.9 243.9L1789.3 244.3L1804.9 243.9L1815.1 242.8L1824.8 241.1L1834.1 238.8L1842.5 236L1853.6 230.9L1859.7 226.9Z" fill="#000" fill-opacity="0.33"/><clipPath id="svc"><path d="M1739.4 373.1L1739.2 367.9L1738.7 362.9L1737.8 358.2L1736.6 353.8L1735 349.7L1733.1 345.9L1731 342.6L1728.5 339.6L1725.7 337.1L1722.7 335L1719.5 333.4L1716.1 332.3L1712.4 331.6L1708.7 331.5L1704.8 331.8L1700.8 332.6L1696.8 333.9L1692.7 335.7L1688.7 337.9L1684.6 340.6L1680.6 343.7L1676.8 347.2L1673 351.1L1669.4 355.3L1666 359.8L1662.7 364.6L1659.7 369.7L1657 374.9L1654.5 380.3L1652.3 385.9L1650.4 391.5L1648.9 397.1L1647.6 402.7L1646.8 408.3L1646.2 413.8L1646.1 419.2L1646.2 424.4L1646.8 429.3L1647.6 434L1648.9 438.5L1650.4 442.6L1652.3 446.3L1654.5 449.7L1657 452.6L1659.7 455.2L1662.7 457.2L1666 458.9L1669.4 460L1673 460.6L1676.8 460.8L1680.6 460.5L1684.6 459.6L1688.7 458.3L1692.7 456.6L1696.8 454.3L1700.8 451.6L1704.8 448.5L1708.7 445L1712.4 441.2L1716.1 436.9L1719.5 432.4L1722.7 427.6L1725.7 422.6L1728.5 417.3L1731 411.9L1733.1 406.4L1735 400.8L1736.6 395.1L1737.8 389.5L1738.7 383.9L1739.2 378.4Z"/></clipPath><g clip-path="url(#svc)" stroke="#b9babd" stroke-width="1.15" fill="none"><path d="M1437.4 493.9L1537.4 293.9M1458.8 293.9L1516 493.9M1445.1 493.9L1545.1 293.9M1466.5 293.9L1523.7 493.9M1452.8 493.9L1552.8 293.9M1474.2 293.9L1531.4 493.9M1460.5 493.9L1560.5 293.9M1481.9 293.9L1539.1 493.9M1468.2 493.9L1568.2 293.9M1489.6 293.9L1546.8 493.9M1475.9 493.9L1575.9 293.9M1497.3 293.9L1554.5 493.9M1483.6 493.9L1583.6 293.9M1505 293.9L1562.2 493.9M1491.3 493.9L1591.3 293.9M1512.7 293.9L1569.9 493.9M1499 493.9L1599 293.9M1520.4 293.9L1577.6 493.9M1506.7 493.9L1606.7 293.9M1528.1 293.9L1585.3 493.9M1514.4 493.9L1614.4 293.9M1535.8 293.9L1593 493.9M1522.1 493.9L1622.1 293.9M1543.5 293.9L1600.7 493.9M1529.8 493.9L1629.8 293.9M1551.2 293.9L1608.4 493.9M1537.5 493.9L1637.5 293.9M1558.9 293.9L1616.1 493.9M1545.2 493.9L1645.2 293.9M1566.6 293.9L1623.8 493.9M1552.9 493.9L1652.9 293.9M1574.3 293.9L1631.5 493.9M1560.6 493.9L1660.6 293.9M1582 293.9L1639.2 493.9M1568.3 493.9L1668.3 293.9M1589.7 293.9L1646.9 493.9M1576 493.9L1676 293.9M1597.4 293.9L1654.6 493.9M1583.7 493.9L1683.7 293.9M1605.1 293.9L1662.3 493.9M1591.4 493.9L1691.4 293.9M1612.8 293.9L1670 493.9M1599.1 493.9L1699.1 293.9M1620.5 293.9L1677.7 493.9M1606.8 493.9L1706.8 293.9M1628.2 293.9L1685.4 493.9M1614.5 493.9L1714.5 293.9M1635.9 293.9L1693.1 493.9M1622.2 493.9L1722.2 293.9M1643.6 293.9L1700.8 493.9M1629.9 493.9L1729.9 293.9M1651.3 293.9L1708.5 493.9M1637.6 493.9L1737.6 293.9M1659 293.9L1716.2 493.9M1645.3 493.9L1745.3 293.9M1666.7 293.9L1723.9 493.9M1653 493.9L1753 293.9M1674.4 293.9L1731.6 493.9M1660.7 493.9L1760.7 293.9M1682.1 293.9L1739.3 493.9M1668.4 493.9L1768.4 293.9M1689.8 293.9L1747 493.9M1676.1 493.9L1776.1 293.9M1697.5 293.9L1754.7 493.9M1683.8 493.9L1783.8 293.9M1705.2 293.9L1762.4 493.9M1691.5 493.9L1791.5 293.9M1712.9 293.9L1770.1 493.9M1699.2 493.9L1799.2 293.9M1720.6 293.9L1777.8 493.9M1706.9 493.9L1806.9 293.9M1728.3 293.9L1785.5 493.9M1714.6 493.9L1814.6 293.9M1736 293.9L1793.2 493.9M1722.3 493.9L1822.3 293.9M1743.7 293.9L1800.9 493.9M1730 493.9L1830 293.9M1751.4 293.9L1808.6 493.9M1737.7 493.9L1837.7 293.9M1759.1 293.9L1816.3 493.9M1745.4 493.9L1845.4 293.9M1766.8 293.9L1824 493.9M1753.1 493.9L1853.1 293.9M1774.5 293.9L1831.7 493.9M1760.8 493.9L1860.8 293.9M1782.2 293.9L1839.4 493.9M1768.5 493.9L1868.5 293.9M1789.9 293.9L1847.1 493.9M1776.2 493.9L1876.2 293.9M1797.6 293.9L1854.8 493.9M1783.9 493.9L1883.9 293.9M1805.3 293.9L1862.5 493.9M1791.6 493.9L1891.6 293.9M1813 293.9L1870.2 493.9M1799.3 493.9L1899.3 293.9M1820.7 293.9L1877.9 493.9M1807 493.9L1907 293.9M1828.4 293.9L1885.6 493.9M1814.7 493.9L1914.7 293.9M1836.1 293.9L1893.3 493.9M1822.4 493.9L1922.4 293.9M1843.8 293.9L1901 493.9M1830.1 493.9L1930.1 293.9M1851.5 293.9L1908.7 493.9M1837.8 493.9L1937.8 293.9M1859.2 293.9L1916.4 493.9"/></g><path d="M1720.2 333.6L1709.4 328.9L1709.3 329.1L1712.7 330.9L1715.4 332.7L1717.9 335L1720.1 337.6L1722.2 340.5L1724 343.8L1725.5 347.3L1726.7 351.1L1727.7 355.2L1728.5 359.5L1728.9 364L1728.9 373.4L1728.5 378.3L1726.7 388.4L1725.5 393.5L1722.2 403.6L1720.1 408.5L1715.4 418.1L1709.8 427L1703.6 435L1696.8 441.9L1693.3 445L1689.7 447.7L1686.1 450L1682.4 452L1678.8 453.6L1675.1 454.9L1671.6 455.7L1668 456.2L1664.6 456.2L1661.3 455.9L1658.1 455.1L1654.5 453.8L1654.5 454L1665.2 458.7L1668.9 460L1672.1 460.7L1675.4 461L1678.9 460.8L1682.3 460.3L1685.8 459.5L1689.4 458.2L1693 456.6L1696.4 454.7L1700.3 452.2L1703.9 449.5L1710.6 443.3L1717.3 435.6L1723.1 427.3L1725.9 422.5L1728.4 417.8L1732.6 408.2L1736 397.9L1738.2 388L1738.9 383L1739.4 377.8L1739.4 368.6L1738.9 363.8L1737.3 355.7L1735.9 351.6L1734.6 348.4L1732.9 345.2L1730.9 342.3L1728.7 339.7L1726.3 337.3L1723.6 335.4Z" fill="rgb(177, 179, 184)"/><path d="M1723 335.2L1720.2 333.7L1709.8 329.2L1712.8 330.8L1715.5 332.7L1725.8 337.2ZM1720.2 431.5L1709.9 427L1706.8 431.1L1703.6 435.1L1713.9 439.5L1717.2 435.6ZM1703.6 449.5L1707.2 446.5L1696.9 442L1693.4 445L1689.7 447.8L1700 452.2ZM1675.1 455L1685.4 459.5L1689.1 458.2L1692.8 456.6L1682.5 452.1L1678.8 453.7ZM1675 460.8L1678.4 460.8L1668.1 456.2L1664.6 456.3L1661.1 455.9L1671.5 460.5ZM1730.5 341.9L1720.2 337.4L1722.2 340.5L1724 343.7L1734.4 348.2L1732.6 345ZM1737.1 355.5L1726.8 351L1727.8 355.2L1728.5 359.5L1738.9 364L1738.1 359.7ZM1739.3 377.9L1739.4 373.1L1729.1 368.6L1729 373.4L1728.5 378.4L1738.8 382.9ZM1724 398.6L1734.3 403.1L1735.9 398L1737.1 392.9L1726.8 388.4L1725.6 393.5ZM1720.2 408.5L1717.9 413.4L1715.4 418.1L1725.7 422.6L1728.3 417.8L1730.5 413Z" fill="#000" fill-opacity="0.350"/><path d="M1728.3 418L1734.5 403L1724 398.4L1717.8 413.5ZM1700.3 452.2L1703.9 449.5L1693.4 444.9L1686.1 450L1682.2 452.1L1692.7 456.7Z" fill="#000" fill-opacity="0.04"/><path d="M1734.4 403.2L1738.2 387.7L1727.8 383.2L1723.9 398.6ZM1685.4 459.5L1693 456.6L1682.5 452L1674.8 455Z" fill="#000" fill-opacity="0.07"/><path d="M1738.9 382.7L1728.5 378.2L1727.7 383.4L1738.2 388ZM1678.3 460.8L1685.8 459.5L1675.2 454.8L1667.6 456.2Z" fill="#000" fill-opacity="0.10"/><path d="M1738.9 383L1739.5 373L1729 368.4L1728.4 378.4ZM1668.1 456.2L1664.1 456.2L1674.8 460.9L1678.9 460.8Z" fill="#000" fill-opacity="0.14"/><path d="M1739.5 373.3L1738.9 363.8L1728.4 359.3L1729 368.7ZM1668.3 459.8L1675.4 460.9L1664.6 456.2L1657.5 455Z" fill="#000" fill-opacity="0.17"/><path d="M1738.2 359.5L1727.7 355L1728.5 359.5L1739 364.1ZM1668.9 460L1658.1 455.1L1654.5 453.8L1665.2 458.7Z" fill="#000" fill-opacity="0.21"/><path d="M1738.3 359.8L1735.9 351.6L1725.4 347L1727.8 355.2Z" fill="#000" fill-opacity="0.25"/><path d="M1736.1 351.9L1734.4 348.1L1723.8 343.5L1725.5 347.3Z" fill="#000" fill-opacity="0.29"/><path d="M1723.1 335.1L1709.3 329.1L1712.7 330.9L1717.9 335L1722.2 340.5L1724 343.8L1734.6 348.4L1730.9 342.3L1728.7 339.7Z" fill="#000" fill-opacity="0.33"/><path d="M1642.6 367.4L1637.9 378.2L1635.9 383.8L1634.1 389.7L1631.6 400.8L1630.8 406.6L1630.2 417.3L1630.3 422.7L1630.8 427.5L1631.6 432.3L1632.8 437.1L1634 441.1L1635.7 445.1L1637.7 448.7L1639.8 451.9L1642.3 454.8L1645 457.4L1648 459.6L1651.8 461.6L1662.6 466.3L1662.6 466.1L1658.9 464.1L1655.9 462L1653.1 459.5L1650.6 456.6L1648.3 453.3L1646.3 449.7L1644.6 445.7L1643.2 441.5L1642.1 436.9L1641.3 432.1L1640.8 427.1L1640.7 421.9L1640.8 416.5L1641.3 411L1642.1 405.4L1644.6 394.1L1646.3 388.4L1650.6 377.3L1655.9 366.6L1658.9 361.5L1665.6 352.1L1669.1 347.7L1672.8 343.6L1676.7 339.9L1680.6 336.5L1684.6 333.5L1688.7 330.9L1692.8 328.7L1696.9 326.9L1700.9 325.5L1704.9 324.5L1708.9 324L1712.7 324L1716.4 324.3L1719.9 325.2L1723.9 326.6L1724 326.4L1713.2 321.8L1709.2 320.3L1705.6 319.5L1701.9 319.2L1698 319.3L1694.2 319.9L1690.3 320.9L1686.2 322.3L1682.2 324.1L1678.1 326.4L1674.3 328.8L1670.1 332L1666.1 335.4L1662.3 339.2L1658.8 343L1655 347.6L1651.6 352.2L1645.5 362Z" fill="rgb(177, 179, 184)"/><path d="M1642.8 367.4L1640.2 372.8L1650.5 377.3L1653.1 371.9L1655.9 366.6L1645.6 362.1ZM1634.2 389.6L1632.8 395.3L1643.1 399.8L1644.5 394.1L1646.3 388.4L1636 383.9ZM1630.9 406.5L1630.4 412L1630.3 417.5L1640.6 421.9L1640.7 416.5L1641.2 411ZM1631.7 432.5L1632.8 437.1L1643.1 441.6L1642 436.9L1641.2 432.1L1630.9 427.6ZM1638 449L1640.2 452.3L1650.6 456.8L1648.3 453.4L1646.3 449.7L1635.9 445.2ZM1702.3 319.4L1698.5 319.4L1708.8 323.9L1712.7 323.9L1716.6 324.3L1706.2 319.7ZM1686.6 322.3L1682.4 324.1L1692.7 328.6L1696.8 326.8L1701 325.4L1690.6 320.9ZM1674.3 328.9L1670.2 332L1666.3 335.4L1676.6 339.9L1680.6 336.5L1684.6 333.4ZM1655.2 347.5L1651.8 352.2L1662.1 356.6L1665.5 352L1669.1 347.6L1658.8 343.1ZM1648.6 459.8L1651.8 461.5L1662.2 466L1658.9 464.2L1655.8 462.1L1645.5 457.6Z" fill="#000" fill-opacity="0.350"/><path d="M1690.6 320.8L1682.2 324.1L1674.1 329L1684.6 333.6L1692.8 328.7L1701.2 325.4ZM1640.2 372.7L1634.2 389.5L1632.7 395.4L1643.2 399.9L1646.3 388.4L1650.7 377.2Z" fill="#000" fill-opacity="0.04"/><path d="M1698.6 319.3L1690.3 320.9L1700.9 325.5L1709.3 324ZM1631.7 400.8L1630.3 412.1L1640.8 416.7L1641.3 411L1643.2 399.7L1632.8 395.1Z" fill="#000" fill-opacity="0.07"/><path d="M1702.5 319.3L1698 319.3L1708.8 324L1712.7 324L1720.6 325.2L1709.8 320.5ZM1630.3 411.9L1630.3 422.7L1640.8 427.3L1640.8 416.4Z" fill="#000" fill-opacity="0.10"/><path d="M1709.2 320.3L1719.9 325.2L1723.9 326.6L1713.2 321.8ZM1630.8 427.5L1632.8 437.1L1643.3 441.7L1642.1 436.9L1640.8 427L1630.3 422.5Z" fill="#000" fill-opacity="0.14"/><path d="M1632.7 436.8L1635.9 445.4L1646.5 450L1643.2 441.4Z" fill="#000" fill-opacity="0.17"/><path d="M1637.7 448.7L1642.3 454.8L1648 459.6L1662.6 466.3L1655.9 462L1653.1 459.5L1648.3 453.3L1646.3 449.7L1635.7 445.1Z" fill="#000" fill-opacity="0.21"/><path d="M1661.9 356.6L1655.8 366.4L1650.4 377.1L1648.1 382.9L1644.4 394.2L1641.8 405.6L1640.6 416.4L1640.4 422.1L1640.6 427.3L1641.1 432.4L1641.9 437.2L1643 441.7L1644.5 446L1646.1 449.7L1648.2 453.6L1650.5 456.9L1653.1 459.8L1655.9 462.3L1658.9 464.4L1662.1 466.1L1665.3 467.3L1668.9 468.1L1672.6 468.5L1676.4 468.5L1680.4 468L1684.7 467L1688.5 465.7L1692.6 463.9L1696.7 461.7L1700.8 459L1705 455.9L1708.8 452.6L1712.6 448.9L1716.4 444.8L1720 440.5L1723.5 435.6L1729.7 425.9L1735 415.2L1737.4 409.4L1741 398.3L1742.5 392.4L1744.4 381.3L1744.9 375.6L1745 370.2L1744.9 365.2L1744.4 359.9L1743.5 355.1L1742.5 350.8L1741 346.2L1739.2 342.3L1737.4 338.9L1734.9 335.4L1732.4 332.4L1729.8 330.1L1726.6 327.8L1723.3 326.1L1720.1 325L1716.6 324.1L1712.8 323.7L1709 323.8L1705.1 324.3L1700.8 325.3L1696.9 326.6L1692.8 328.4L1688.7 330.6L1684.7 333.2L1680.4 336.4L1676.7 339.6L1672.8 343.3L1669.1 347.4L1665.5 351.8ZM1668.4 459.6L1665.3 458.5L1662.5 456.9L1659.8 455.1L1657.3 452.8L1655.1 450.2L1653 447.3L1651.2 444L1649.7 440.5L1648.5 436.7L1647.5 432.6L1646.7 428.3L1646.2 419.2L1646.3 414.4L1647.5 404.4L1649.7 394.3L1651.3 389.3L1655.1 379.3L1659.8 369.7L1662.5 365.2L1668.4 356.7L1674.9 349.2L1678.4 345.9L1685.5 340.1L1689.1 337.8L1692.8 335.8L1696.4 334.2L1700.1 332.9L1703.6 332.1L1707.2 331.6L1710.6 331.6L1713.9 331.9L1717.1 332.7L1720.1 333.8L1723 335.3L1725.6 337.2L1728.1 339.4L1730.4 342L1732.4 345L1734.2 348.2L1735.7 351.7L1737 355.6L1738 359.6L1738.7 363.9L1739.3 373.1L1739.1 377.9L1738 387.8L1735.7 397.9L1734.2 403L1730.4 413L1725.6 422.5L1720.1 431.4L1713.8 439.4L1710.5 443.1L1703.5 449.4L1700 452.1L1696.3 454.5L1692.7 456.5L1689 458.1L1685.4 459.3L1681.8 460.2L1678.3 460.6L1674.9 460.7L1671.6 460.3Z" fill="rgb(177, 179, 184)"/><path d="M1688.6 330.8L1684.5 333.4L1685.4 340.1L1689.1 337.7L1692.8 335.7L1692.8 328.5ZM1672.7 343.6L1669 347.6L1671.5 352.8L1674.9 349.1L1678.3 345.8L1676.6 339.8ZM1658.8 361.4L1655.8 366.6L1659.7 369.7L1662.4 365.2L1665.3 360.8L1662.1 356.6ZM1648.2 382.8L1646.2 388.4L1651.2 389.3L1653 384.2L1655 379.2L1650.5 377.2ZM1642 405.4L1641.2 411L1646.7 409.5L1647.4 404.4L1648.4 399.3L1643.1 399.7ZM1640.7 427.2L1641.2 432.2L1646.7 428.4L1646.2 423.8L1646.1 419.1L1640.5 421.9ZM1644.5 445.8L1646.2 449.8L1651.2 444.1L1649.6 440.5L1648.3 436.7L1643.1 441.5ZM1653 459.6L1655.8 462.2L1659.8 455.2L1657.3 452.9L1655 450.2L1650.5 456.7ZM1665.5 467.2L1669.1 468.1L1671.6 460.4L1668.3 459.7L1665.3 458.5L1662 466ZM1684.6 466.9L1685.5 459.4L1681.8 460.2L1678.3 460.7L1676.6 468.4L1680.5 467.9ZM1704.9 324.4L1700.9 325.3L1700 332.9L1703.6 332L1707.2 331.6L1708.9 323.9ZM1716.4 324.2L1713.9 331.8L1717.1 332.6L1720.2 333.7L1723.4 326.3L1720 325ZM1735 335.6L1732.4 332.6L1729.6 330.1L1725.7 337.1L1728.2 339.4L1730.5 342ZM1739.2 342.4L1734.3 348.1L1735.8 351.7L1737.1 355.6L1742.4 350.7L1740.9 346.4ZM1738.8 363.9L1739.2 368.4L1739.4 373.1L1744.9 370.4L1744.8 365.1L1744.3 360ZM1744.3 381.2L1738.8 382.8L1738.1 387.8L1737.1 392.9L1742.4 392.5L1743.5 386.8ZM1739.3 403.8L1734.3 403L1732.5 408L1730.4 413L1734.9 415L1737.2 409.4ZM1723.4 435.7L1726.6 430.8L1729.7 425.7L1725.7 422.5L1723 427.1L1720.1 431.5ZM1716.4 444.6L1713.9 439.5L1710.6 443.1L1707.1 446.5L1708.8 452.5L1712.7 448.7ZM1700 452.2L1696.4 454.5L1692.7 456.5L1692.7 463.7L1696.8 461.5L1700.9 458.8Z" fill="#000" fill-opacity="0.350"/><path d="M1665.5 351.8L1655.8 366.4L1650.4 377.1L1644.4 394.2L1641.8 405.6L1640.6 416.4L1640.4 422.1L1641.1 432.4L1643 441.7L1646.1 449.7L1648.2 453.6L1653.1 459.8L1658.9 464.4L1665.3 467.3L1672.6 468.5L1680.4 468L1684.7 467L1692.6 463.9L1700.8 459L1705 455.9L1712.6 448.9L1720 440.5L1729.7 425.9L1737.4 409.4L1742.5 392.4L1744.4 381.3L1744.9 375.6L1744.9 365.2L1744.4 359.9L1742.5 350.8L1741 346.2L1737.4 338.9L1734.9 335.4L1729.8 330.1L1726.6 327.8L1720.1 325L1712.8 323.7L1705.1 324.3L1700.8 325.3L1692.8 328.4L1684.7 333.2L1680.4 336.4L1672.8 343.3ZM1668.4 459.6L1662.5 456.9L1659.8 455.1L1655.1 450.2L1653 447.3L1649.7 440.5L1648.5 436.7L1646.7 428.3L1646.3 414.4L1647.5 404.4L1651.3 389.3L1655.1 379.3L1659.8 369.7L1668.4 356.7L1674.9 349.2L1685.5 340.1L1692.8 335.8L1696.4 334.2L1703.6 332.1L1710.6 331.6L1713.9 331.9L1720.1 333.8L1725.6 337.2L1728.1 339.4L1732.4 345L1735.7 351.7L1737 355.6L1738.7 363.9L1739.1 377.9L1738 387.8L1734.2 403L1730.4 413L1725.6 422.5L1720.1 431.4L1713.8 439.4L1703.5 449.4L1696.3 454.5L1692.7 456.5L1685.4 459.3L1678.3 460.6L1674.9 460.7Z" fill="#000" fill-opacity="0.10"/><path d="M1503.1 471.5L1504.2 476.1L1506.3 481L1510.8 490L1515.5 496.2L1518.7 499.9L1525.8 506.4L1531.7 510.2L1539.5 514.1L1543 515.4L1549.3 517.2L1552.8 517.9L1560 518.6L1566.6 518.5L1570.4 518.1L1573.9 517.6L1577.9 516.6L1583.7 514.8L1590.5 511.6L1597.5 507.5L1601 504.9L1607 499L1610.8 494.7L1615.4 487.9L1618 482.7L1619.6 478.9L1621 474.9L1622.6 469.1L1623.3 463.8L1623.7 458.4L1622.1 462.6L1619.8 466.1L1616.5 469.5L1612.3 472.7L1607.2 475.5L1601.3 478.1L1594.8 480.2L1587.7 482L1580.2 483.3L1572.4 484.1L1564.4 484.5L1556.4 484.4L1548.5 483.8L1540.8 482.7L1533.5 481.1L1526.7 479.2L1520.5 476.8L1515.1 474.1L1510.4 471.1L1506.7 467.8L1503.9 464.4L1502.1 460.8L1501.2 456.5L1501 456.5L1501.4 461.9Z" fill="rgb(177, 179, 184)"/><path d="M1505 475L1506.2 479.9L1508 484L1506.5 481.4L1510.6 489.6L1508.5 485L1511 488.2L1514.4 491.1L1516.3 495.3L1519 499.2L1522 502.7L1525.4 505.9L1528.9 508.2L1532.6 510L1535.6 512L1539 513.8L1542.3 515.1L1548.9 517L1546.3 516.2L1544.1 514.8L1542 513.1L1547.2 514.2L1552.5 515L1553.5 516.4L1554.5 517.6L1555.8 518.2L1559.6 518.5L1563.4 518.5L1563.6 518L1563.9 515.5L1569.5 515.2L1575 514.6L1573.8 516.1L1572.4 517.4L1570.8 518L1574.4 517.4L1577.9 516.5L1580.7 515.7L1583.2 514.2L1585.5 512.4L1590 511L1594 509.2L1590.9 511.3L1594.2 509.4L1598.1 507L1594.5 508.9L1597.3 506.1L1599.8 502.9L1602.1 499.3L1603.8 495.2L1608.4 492.6L1612.3 489.7L1610.3 494L1607.5 497.9L1604.3 501.6L1607 498.9L1610.4 495L1613.3 490.9L1615.3 487.9L1617.7 483L1615.4 486.4L1612.5 489.4L1614.3 484.9L1615.5 480L1616.2 474.8L1616.6 469.5L1612.3 472.7L1607.2 475.6L1606.9 480.9L1606.3 485.9L1605.3 490.7L1603.8 495.1L1598.4 497.5L1592.4 499.4L1593.5 495.2L1594.2 490.5L1594.9 480.3L1587.8 482.1L1580.2 483.4L1579.8 493.5L1579.4 498.2L1578.8 502.3L1571.7 503.1L1564.3 503.4L1564.5 484.6L1556.4 484.5L1548.5 483.8L1548.8 494L1549.5 502.7L1542.5 501.7L1535.8 500.3L1534.8 496.1L1534.1 491.4L1533.5 481.2L1526.7 479.3L1520.5 476.9L1520.8 482.1L1521.3 487.2L1522.3 491.9L1523.7 496.3L1518.7 493.8L1514.4 491L1512.7 486.5L1511.5 481.6L1510.8 476.5L1510.4 471.2L1506.6 467.9L1503.7 464.3L1504.2 469.6ZM1558.2 515.3L1552.6 514.9L1551.7 512.6L1550.9 509.8L1550.2 506.6L1549.6 502.8L1556.9 503.3L1564.3 503.4L1563.9 515.4ZM1525.4 500.5L1523.8 496.4L1529.5 498.6L1535.7 500.4L1536.8 504.3L1538.3 507.6L1540 510.5L1541.8 513L1537.1 511.7L1532.7 510L1530 507.2L1527.6 504ZM1585.5 512.4L1580.4 513.6L1575.2 514.6L1576.3 512.2L1577.3 509.4L1578.2 506.1L1578.9 502.3L1585.8 501.1L1592.3 499.5L1591 503.5L1589.4 506.8L1587.5 509.8ZM1623.6 458.8L1622.2 462.6L1621.8 468L1621 473.2L1619.6 478.5L1620.9 474.8L1622.4 469.5L1623.2 464.2Z" fill="#000" fill-opacity="0.350"/><path d="M1504.9 475L1507.9 478.8L1511.6 481.9L1516.2 484.8L1527.3 489.6L1534.3 491.6L1548.7 494.1L1556.7 494.7L1556.6 489.8L1564.5 489.9L1564.6 484.5L1556.4 484.4L1540.8 482.7L1533.5 481.1L1520.5 476.8L1515.1 474.1L1510.4 471.1L1506.7 467.8L1503.9 464.4L1501.8 460.2L1502.3 466.2L1504.1 469.8Z" fill="#000" fill-opacity="0.14"/><path d="M1502.9 470.9L1504.5 476.6L1506.5 480.6L1509.3 483.9L1512.5 486.6L1514.3 491.1L1518.9 494.1L1524 496.6L1535.7 500.4L1542.6 501.9L1541.9 497.7L1556.6 499.3L1564.5 499.4L1564.5 494.8L1580 493.6L1580.2 488.7L1587.7 487.4L1587.9 481.9L1580.2 483.3L1564.3 484.5L1564.3 489.6L1556.3 489.5L1556.4 494.5L1541.3 492.8L1527.5 489.4L1516.1 484.4L1511.5 481.5L1507.8 478.3L1505.1 474.9L1504.3 469.7L1502.5 466.1L1501.2 456.5L1501.4 461.9Z" fill="#000" fill-opacity="0.17"/><path d="M1510.5 489.5L1513.4 493L1516.8 495.9L1525.3 500.6L1531.1 502.8L1537.1 504.5L1550 506.7L1564.3 507.4L1564.4 503.5L1571.8 503.2L1572.1 499.1L1586.8 497L1587.4 492.3L1594.3 490.6L1594.7 485.6L1601.2 483.5L1601.5 478L1587.7 482L1587.5 487.2L1580 488.5L1579.8 493.4L1564.3 494.6L1564.2 499.2L1549.1 498.5L1541.6 497.4L1542.4 501.6L1529.5 498.4L1523.8 496.2L1518.8 493.7L1514.5 491L1512.7 486.4L1509.1 483.3L1506.4 480L1504.4 476L1506.3 481Z" fill="#000" fill-opacity="0.21"/><path d="M1518.7 499.9L1525.8 506.4L1531.7 510.2L1539.5 514.1L1549.3 517.2L1556.4 518.4L1566.6 518.5L1573.9 517.6L1583.7 514.8L1590.5 511.6L1598.5 506.8L1604.9 501.2L1610.8 494.7L1615.4 487.9L1620 477.8L1622.6 469.1L1623.7 458.4L1622.1 462.6L1619.8 466.1L1616.5 469.5L1612.3 472.7L1607.2 475.5L1601.3 478.1L1601 483.3L1594.5 485.4L1594.1 490.4L1587.1 492.2L1586.6 496.8L1571.9 498.9L1571.6 503L1564.2 503.3L1564.1 507.1L1550.1 506.5L1543.4 505.5L1530.9 502.4L1520.6 498L1516.5 495.3L1510.2 489Z" fill="#000" fill-opacity="0.25"/><path d="M1503.4 430.2L1499.5 435.5L1499 436.6L1496.4 443.5L1495.6 448.9L1495.3 453.5L1495.4 458.1L1497 466.2L1499 470.4L1501.2 474.8L1503.4 477.5L1510.2 483.7L1515 486.6L1520.6 489.3L1526.8 491.6L1533.5 493.5L1540.9 495L1548.6 496.1L1556.5 496.7L1564.3 496.8L1572.4 496.5L1580.2 495.6L1587.7 494.3L1594.8 492.6L1601.3 490.5L1607.2 488L1612.4 485.2L1617.2 481.6L1622.7 476.1L1625.1 472.4L1627.1 468.2L1628.3 464.8L1629.4 459.5L1629.7 450.3L1628.1 442L1626.4 437.5L1624.6 434.2L1619.9 428.4L1620.1 428.4L1616.3 425L1611.5 421.8L1606 419L1599.6 416.5L1592.1 414.4L1583.7 412.6L1576.4 411.5L1568.4 410.9L1560.5 410.8L1552.6 411.2L1544.9 412L1537.8 413.2L1529.5 415.3L1522.2 417.7L1516.2 420.4L1511.1 423.4L1506.8 426.6ZM1549.4 464.9L1542.2 463.9L1535.4 462.5L1529 460.6L1523.2 458.4L1518.1 455.9L1515.3 454.1L1512.4 451.6L1510.8 449.5L1511 446.8L1512.1 443.7L1514.1 440.7L1516.9 437.9L1520.4 435.2L1524.7 432.8L1529.7 430.6L1535.2 428.8L1541.2 427.3L1547.5 426.2L1554.1 425.5L1560.9 425.2L1567.6 425.3L1574.3 425.8L1580.8 426.7L1587 428L1592.7 429.7L1598 431.7L1602.6 434L1606.5 436.5L1609.7 439.3L1612.1 442.2L1613.6 445.2L1614.2 448.3L1614.1 449.7L1610.9 453.1L1608.6 454.8L1604.3 457.2L1598.9 459.6L1592.8 461.6L1586.1 463.2L1579.1 464.5L1571.8 465.2L1564.3 465.6L1556.8 465.5Z" fill="rgb(184, 185, 188)"/><path d="M1503.8 429.7L1499 436.6L1497.7 440.5L1497.6 443.9L1496.1 448.1L1497 452.5L1499 456.3L1502.1 460L1506 463.3L1505.3 468.4L1510.7 471.9L1516.7 474.8L1523.5 477.4L1530.7 479.5L1538.9 481.2L1539.2 476L1556 477.8L1573.4 477.5L1573.1 472.7L1589.1 470.5L1596.8 468.5L1595.7 464.8L1602.4 462.6L1608.4 460L1613.4 457.1L1617.9 453.8L1621.3 450.3L1618.9 448.5L1621.2 444.9L1622.5 441.3L1619.8 441.6L1620.1 438L1617.6 440L1616.9 436.6L1615.2 433.5L1612.6 430.4L1609.4 427.6L1605.2 424.9L1600.1 422.4L1588.4 418.5L1574.9 416.2L1560.9 415.5L1560.8 412.4L1546 413.5L1545.2 412L1529.5 415.3L1522.2 417.7L1516.2 420.4L1511.1 423.4L1506.8 426.6ZM1548.1 468.2L1547.6 472.1L1539.6 470.9L1524.7 467.2L1518.2 464.8L1512.4 461.9L1507.5 458.7L1503.6 455.3L1505.6 452L1502.6 448.4L1500.8 444.8L1500 441L1500.3 437.3L1502.6 436.2L1502.3 439.5L1503 443.1L1504.7 446.7L1507.7 450.3L1511.1 453.3L1515.6 456.3L1521 459L1527.1 461.4L1541 464.9L1548.8 466L1564.5 466.7L1579.8 465.5L1580.5 467.7L1564.5 469ZM1542.2 463.9L1535.4 462.5L1523.2 458.4L1518.1 455.9L1513.8 453.1L1510.2 450L1507.6 446.8L1505.9 443.4L1505.2 440L1505.5 436.5L1506.7 433.1L1508.8 429.8L1511.9 426.6L1515.9 423.7L1520.6 421.1L1522.3 423.9L1533.5 419.6L1546.5 416.9L1547 421.2L1553.9 420.5L1567.6 420.2L1567.5 425.3L1580.8 426.7L1587 428L1598 431.7L1606.5 436.5L1609.7 439.3L1612.2 442.4L1613.4 437.8L1614.8 440.6L1615.4 443.8L1615.2 447.5L1616.7 444.9L1616 446.9L1613.9 450L1608.6 454.8L1598.9 459.6L1592.8 461.6L1579.1 464.5L1564.3 465.6L1556.8 465.5Z" fill="#000" fill-opacity="0.04"/><path d="M1511.7 426.5L1508.6 429.7L1506.5 432.8L1505.2 436.2L1505 440L1507.6 442.2L1507.9 438.7L1509 435.4L1511.1 432.2L1514.1 429.2L1517.9 426.4L1522.3 423.9L1523.7 427.9L1534.4 423.9L1535.1 428.8L1547.5 426.2L1560.9 425.2L1567.8 425.3L1567.9 420L1560.7 419.9L1547.3 420.9L1546.7 416.6L1533.6 419.3L1522.4 423.6L1520.7 420.7L1515.7 423.6ZM1499.7 435.6L1496.2 444.6L1495.3 453.5L1496.2 457L1496.3 462.1L1498.5 466.6L1501.6 470.2L1505.5 473.5L1510.6 476.8L1511.3 481.2L1517.5 484.3L1524.2 486.8L1531.5 488.9L1531 484.5L1547.3 487.4L1564.7 488.2L1564.7 483.1L1581.8 481.8L1590.3 480.4L1590 475.2L1597.4 473.3L1604.7 470.9L1603.7 466.2L1609.7 463.7L1615.1 460.6L1619.8 457.2L1617.7 453.6L1613.3 456.9L1608.1 459.8L1602.1 462.4L1595.4 464.6L1596.5 468.4L1581.2 471.6L1572.9 472.5L1573.1 477.3L1555.9 477.5L1538.9 475.7L1538.7 480.9L1523.4 477.1L1516.6 474.5L1510.6 471.6L1505.6 468.3L1506.2 463.3L1502.1 459.7L1499.1 455.9L1497.1 452L1496.3 448.1L1497.8 444L1498.1 440ZM1590.3 413.9L1603.6 418.5L1608.9 421.2L1613.5 424.1L1617.2 427.3L1619.9 430.7L1621.7 434.2L1622.4 437.8L1622.2 441.4L1620.9 445L1618.5 448.6L1621.1 450.5L1623.6 446.6L1624.9 443.1L1625.3 439.4L1624.6 435.6L1622.8 431.9L1620.1 428.4L1616.3 425L1611.5 421.8L1606 419L1599.6 416.5ZM1614.2 448.3L1614.1 452.1L1617.6 443.1L1615.5 446.5L1615.7 443.2L1614.9 440.1L1613.3 437.1L1612 442.2L1613.6 445.2Z" fill="#000" fill-opacity="0.07"/><path d="M1513.9 429.1L1511 431.9L1508.8 435.3L1510.8 439.2L1512.9 436L1515.8 433.1L1519.3 430.5L1520.3 435.3L1524.7 432.8L1535.3 428.8L1534.6 423.6L1523.9 427.6L1522.4 423.5L1517.9 426.1ZM1507.2 446.4L1509.6 449.8L1516.2 455L1512.4 451.6L1509.9 448.5L1508.3 445.2L1507.6 441.9L1504.9 439.7L1505.5 443ZM1495.4 458.1L1497.3 466.8L1499.5 471.2L1502.3 474.4L1503.9 477.9L1508.2 481.7L1513.1 484.7L1518.8 487.5L1532.3 492L1548 494.7L1547.6 491.6L1564.5 492.4L1581.7 491.1L1582 486.8L1597.9 483.5L1598 478.4L1604.9 476.2L1611.6 473.3L1611 468.2L1616.3 465.2L1620.9 461.8L1624.7 457.9L1623.3 453.6L1625.7 449.8L1627.1 446.2L1627.5 442.5L1626.6 438L1624.1 434.9L1625 439.1L1624.7 442.9L1623.4 446.6L1621 450.2L1617.6 453.7L1619.5 457.1L1615.1 460.4L1609.7 463.4L1603.4 466.1L1604.4 470.8L1589.7 475L1590 480.2L1573.4 482.5L1564.5 482.9L1564.5 487.9L1547.2 487.1L1530.7 484.2L1531.2 488.5L1524 486.5L1517.4 483.9L1511.6 481.1L1510.8 476.6L1505.7 473.3L1501.5 469.7L1498.5 466L1496.5 462.1L1496.4 457L1495.4 452.4Z" fill="#000" fill-opacity="0.10"/><path d="M1512.9 435.7L1510.8 438.7L1508.9 435L1507.7 438.2L1507.3 441.4L1507.8 444.8L1510.2 449.4L1511.4 453.6L1511 450.7L1512 452.2L1510.8 449.7L1511 446.8L1512.1 443.7L1514.1 440.7L1516.9 437.9L1520.5 435.2L1519.5 430.1L1515.8 432.8ZM1503.5 477.4L1510.2 483.7L1515 486.6L1520.6 489.3L1533.2 493.4L1540.9 495L1556.3 496.7L1564.6 496.8L1580.2 495.6L1594.8 492.6L1607.2 488L1612.4 485.2L1617.2 481.6L1622.7 476.1L1626.7 469.3L1629.2 460.7L1629.7 450.3L1628.1 442L1624.6 434.2L1622.2 431.1L1624.2 435.4L1626.3 438.1L1627.2 442L1626.9 445.9L1625.5 449.7L1623 453.5L1624.4 457.9L1620.9 461.5L1616.3 464.9L1610.8 468L1611.3 473.1L1605 475.9L1597.8 478.3L1597.7 483.3L1581.8 486.6L1581.5 490.9L1564.6 492.2L1547.3 491.4L1547.7 494.4L1532.2 491.7L1525.1 489.6L1518.6 487.2L1512.9 484.3L1508 481.2L1504.1 477.8L1502.5 474.3L1499.4 470.5L1497 466.2L1501.2 474.8Z" fill="#000" fill-opacity="0.14"/><path d="M1520.1 409.4L1515 415L1511.3 420.1L1508.8 425.4L1507 430.7L1506.1 436.7L1505.8 440.7L1505.9 440.7L1506.7 444.1L1506.7 443.9L1508.4 447.3L1511 450.4L1514.3 453.2L1518.8 456.1L1523.9 458.6L1529.6 460.7L1535.9 462.5L1542.6 464L1549.7 464.9L1557 465.5L1564.2 465.6L1571.5 465.3L1578.8 464.5L1585.7 463.3L1592.2 461.7L1598.3 459.7L1603.7 457.4L1608.4 454.8L1612.3 451.9L1615.4 448.8L1617.5 445.6L1617.6 445.7L1618.8 442.3L1618.9 442.4L1619.2 438.4L1617.7 429.6L1616.8 426.5L1613.1 419.1L1606.3 410.7L1602.9 407.8L1594.5 402.2L1590.9 400.4L1586.2 398.6L1578.6 396.4L1574.7 395.5L1566.1 394.5L1556.6 394.7L1548.4 395.9L1541.1 397.9L1536.2 399.5L1532.3 401.3L1523.9 406.6ZM1566.1 409.2L1562.9 409.5L1559.7 409.3L1556.7 408.8L1554.1 407.9L1552.1 406.8L1550.8 405.5L1550.3 404.1L1550.6 402.6L1551.7 401.3L1552.5 400.6L1554.7 399.6L1558.9 398.5L1562.1 398.3L1565.3 398.4L1568.3 399L1570.9 399.8L1573.7 401.6L1574.6 403L1574.7 404.4L1574 405.8L1573.3 406.5L1570.3 408.2Z" fill="rgb(177, 179, 184)"/><path d="M1518.2 411.6L1514.7 415.6L1512.8 418.5L1511.2 420.5L1508.9 425.4L1507.6 428.9L1507.4 432.1L1506.7 434.6L1505.9 440.1L1506.6 443.7L1508.3 447L1509.1 441.4L1509.8 438.7L1512.3 441.8L1515.7 444.7L1515.1 447.5L1514.4 453.1L1518.7 455.9L1523.8 458.4L1524.4 452.7L1524.8 449.9L1530.4 452L1536.5 453.8L1535.7 462.4L1542.5 463.8L1549.6 464.8L1550 456.1L1557.1 456.7L1564.2 456.8L1564.3 465.5L1571.6 465.2L1578.9 464.4L1578.5 455.7L1585.1 454.5L1591.5 452.9L1591.9 455.8L1592.3 461.6L1598.3 459.6L1603.8 457.2L1603.2 451.6L1602.7 448.7L1607.2 446.2L1611 443.3L1611.6 446.1L1612.4 451.7L1615.4 448.6L1617.6 445.2L1616.8 439.7L1616.1 437L1617.3 433.9L1617.5 430.6L1618.3 433.2L1617.6 429.7L1616.8 426.9L1617.4 430.2L1615.2 425.3L1613.6 423.1L1613 420.2L1611.4 417L1607.8 413L1605.8 411.6L1603.8 409.1L1600.9 406.6L1596.9 404L1594.8 403.3L1592 401.5L1588.8 399.9L1590.4 400.3L1586.2 398.7L1584.5 398.3L1587.7 399.5L1584.8 398.6L1583 398.5L1580.1 397.4L1576.8 396.4L1578.1 396.4L1574.2 395.5L1570 394.9L1569.3 395.1L1565.5 394.8L1561.6 394.8L1561.5 394.6L1557.1 394.8L1552.9 395.2L1553.7 395.4L1550 396L1546.7 396.8L1545.4 396.8L1538.3 399L1534.8 400.5L1532.9 401.1L1529.4 403.1L1525.8 405.5L1520.7 409.1ZM1550.9 446.9L1552.2 438.1L1558 438.5L1563.9 438.6L1564.1 447.5L1557.4 447.4ZM1546.5 437.2L1541.2 436.1L1543.3 430.6L1544.6 428.1L1549 429.1L1553.8 429.8L1552.2 438ZM1553.9 429.7L1555.7 422.2L1559.5 422.5L1563.4 422.5L1563.7 430.2L1558.7 430.1ZM1551.9 421.6L1548.4 420.9L1552.4 414.5L1557.6 415.4L1555.6 422.1ZM1557.7 415.4L1559.7 409.4L1556.7 408.9L1552.4 414.4L1548 413L1554.1 408.1L1552 406.9L1544.4 410.9L1543.1 409.8L1542.1 408.6L1550.7 405.6L1550.3 404.8L1550.2 404L1541.2 406L1541.3 404.8L1541.8 403.5L1550.5 402.6L1551.7 401.2L1543.8 401.1L1545.2 400L1547 399L1553.5 400L1556.1 399L1551.4 397.4L1556.3 396.3L1558.9 398.4L1562.1 398.2L1561.9 395.9L1564.6 396L1567.3 396.2L1565.3 398.3L1568.3 398.9L1572.6 397.1L1577 398.5L1570.9 399.7L1573 400.9L1580.6 400.6L1581.9 401.7L1582.8 402.9L1574.3 402.2L1574.7 403L1574.8 403.7L1583.8 405.5L1583.7 406.7L1583.2 408L1574.5 405.1L1573.3 406.6L1581.2 410.4L1579.8 411.5L1578.1 412.5L1571.5 407.8L1569 408.7L1573.7 414.1L1571.3 414.7L1568.7 415.2L1566.1 409.3L1562.9 409.6L1563.1 415.6ZM1572.6 397L1567.4 396.1L1568 395.7L1569.3 395.2L1573.1 395.7L1576.5 396.4L1573.8 396.7ZM1515.8 444.7L1517.7 439.1L1519.1 436.5L1523 439L1527.5 441.2L1526.4 444L1524.8 449.8L1519.9 447.4ZM1530.1 435.6L1531.6 433L1536.1 434.7L1541.1 436.1L1540 438.9L1538.4 444.7L1532.7 443.1L1527.6 441.2ZM1524.2 428.7L1528 424L1530.2 421.9L1533.1 423.8L1536.4 425.4L1534.7 427.8L1531.6 432.9L1527.6 430.9ZM1536.5 425.4L1540.1 420.8L1542 418.8L1545 419.9L1548.3 420.9L1547 423.1L1544.5 428.1L1540.3 426.9ZM1537.1 416L1541.9 412.6L1544.4 411L1545.9 412L1547.9 413L1542 418.7L1539.3 417.4ZM1539.3 409.8L1533.8 412.6L1533 410.9L1532.6 409.1L1538.3 407L1541.2 406.1L1541.4 407.4L1542 408.6ZM1541.7 403.5L1538.9 404L1533.4 405.4L1534.5 403.8L1536.1 402.1L1541.1 401.3L1543.6 401.1L1542.5 402.3ZM1544.8 398.9L1540.8 399.1L1543.5 397.9L1546.7 396.9L1549.7 397.1L1551.1 397.4L1548.9 398.1L1546.9 399ZM1526.2 417.7L1531.2 414.2L1533.8 412.7L1535.2 414.4L1537 416L1534.6 417.8L1530.2 421.8L1527.9 419.8ZM1524.7 410.9L1525.5 408.6L1530.6 406.3L1533.3 405.5L1532.7 407.3L1532.5 409.1L1529.7 410.2L1524.6 413.1ZM1526.8 406.5L1525.5 408.6L1523 409.7L1518.6 412.8L1520.3 410.3L1522.7 407.8L1526.7 405.2L1528.9 404.4ZM1518.5 413L1517.5 415.7L1517.3 418.3L1515.1 420.2L1511.5 424.6L1511.7 421.6L1512.8 418.6L1516.3 414.5ZM1521.3 426.3L1524.1 428.7L1522.1 431.1L1519.1 436.4L1516 433.7L1513.7 430.8L1517.1 425.9L1519.3 423.8ZM1525 415.4L1526.1 417.7L1523.6 419.5L1519.3 423.7L1517.9 421.1L1517.4 418.4L1521.9 414.7L1524.5 413.2ZM1512 433.3L1509.8 438.6L1508.2 435.4L1507.5 432.1L1509.8 427L1511.5 424.8L1512.1 427.8L1513.6 430.8ZM1538.2 400.5L1536.1 402.1L1533.7 402.5L1529.2 404.2L1531.7 402.4L1534.8 400.6L1538.6 399.4L1540.5 399.2ZM1536.5 453.7L1537.6 447.7L1538.4 444.8L1544.4 446.1L1550.8 447L1549.9 456L1543.1 455.1ZM1554 395.4L1557.7 395L1561.5 394.8L1561.8 395.9L1556.3 396.3L1555.6 395.9ZM1577.3 446.5L1575.6 437.7L1581.1 436.8L1586.3 435.5L1587.5 438.2L1589.4 444L1583.5 445.4ZM1584 430L1582.6 427.6L1586.6 426.2L1590.2 424.7L1592.1 426.9L1595.4 432L1591.1 433.8L1586.3 435.4ZM1573.5 429.4L1571.2 421.9L1574.9 421.3L1578.3 420.5L1579.7 422.6L1582.5 427.5L1578.1 428.6ZM1578.3 420.4L1573.8 414.2L1576.1 413.4L1578 412.6L1580.2 414.3L1584.3 418.1L1581.5 419.3ZM1583.9 411.9L1581.3 410.4L1582.5 409.2L1583.3 408L1586.1 409.2L1591.6 411.8L1590.5 413.5L1588.9 415.1ZM1564.3 456.7L1564.1 447.6L1570.8 447.3L1577.2 446.6L1578.4 455.6L1571.4 456.4ZM1564 438.6L1563.7 430.2L1568.7 430L1573.5 429.5L1574.2 432L1575.5 437.7L1569.8 438.3ZM1563.5 422.5L1563.2 415.7L1568.6 415.3L1571.1 421.9L1567.3 422.3ZM1589.8 402.9L1588 401.4L1590.3 401.8L1594.8 403.3L1597.1 405.4L1598.8 407.4L1593.8 405.3L1591.2 404.6ZM1579 399.5L1577.2 398.6L1579.1 398.4L1583 398.6L1585.7 399.9L1587.8 401.3L1583 400.6L1580.6 400.5ZM1583.6 404.1L1583 402.9L1585.7 403.4L1591.1 404.6L1592 406.4L1592.4 408.1L1586.8 406.2L1583.8 405.4ZM1590.3 447L1589.4 444L1594.8 442.3L1599.7 440.1L1600.9 442.9L1602.6 448.7L1597.4 450.9L1591.5 452.9ZM1597.1 434.6L1595.5 432L1599.2 429.9L1602.3 427.6L1604.3 429.9L1607.5 435.1L1603.9 437.7L1599.7 440.1ZM1598.3 422.9L1596 420.9L1598.1 418.8L1599.5 416.6L1602 418.3L1606.4 422.4L1604.7 425L1602.3 427.5ZM1594.4 413.2L1591.7 411.8L1592.3 410.1L1592.5 408.2L1595.2 409.3L1600.4 412L1600.3 414.3L1599.5 416.5ZM1586.9 416.7L1588.9 415.2L1591.3 416.9L1595.9 420.9L1593.3 422.8L1590.2 424.6L1586.4 420.1L1584.4 418.1ZM1608.7 424.5L1606.5 422.4L1607.5 419.8L1607.7 417.1L1609.9 418.8L1613.5 423.2L1613.3 426.2L1612.2 429.2ZM1603.1 413.4L1600.5 412L1600.1 409.8L1598.9 407.5L1601.4 408.6L1605.7 411.6L1607.1 414.3L1607.6 416.9ZM1607.5 435.1L1610.3 432.3L1612.2 429.4L1613.8 431.8L1616.1 437L1614 440.2L1611 443.2L1609 437.7Z" fill="#000" fill-opacity="0.350"/><path d="M1522.9 409.7L1516.2 414.4L1515 417.7L1515 420.2L1511.3 424.7L1512 427.7L1510.3 430.2L1512 433.5L1514.3 436.3L1512.2 441.8L1515.8 444.9L1520 447.6L1530.5 452.1L1542.9 455.2L1550 456.2L1550.6 450.1L1564.3 450.7L1564.2 447.7L1570.9 447.4L1570.3 441.3L1582.2 439.6L1579.4 431.2L1588.4 428.6L1583.4 421.5L1586.6 420.2L1580.4 414.3L1582.4 413.2L1580 411.5L1582.7 409.2L1574 405.8L1572.5 407.1L1569 408.6L1564.5 409.4L1559.6 409.3L1557.5 415.5L1563.1 415.8L1563.7 432.7L1558.4 432.6L1557.7 441.3L1545.8 440L1540 438.8L1538.3 444.6L1532.8 443L1523.2 438.9L1525.9 433.4L1522.3 431L1519.4 428.5L1517.2 425.9L1523.8 419.5L1522.6 417.1L1530.2 412.3L1538.6 408.5L1541.4 407.5L1543 410L1551.4 406.3L1550.3 404.1L1551 401.9L1553.5 400.1L1556.4 399L1551.3 397.2L1546.9 398.9L1544.8 398.8L1542.8 399.9L1535.9 400.8L1533.6 402.5L1526.6 405L1524 407.7Z" fill="#000" fill-opacity="0.04"/><path d="M1532.3 401.3L1520.1 409.4L1514.6 415.5L1511.1 420.6L1509.7 424.3L1509.7 427L1507.4 432.1L1508.1 435.8L1509.7 438.6L1509 441.4L1511.7 444.8L1515.2 447.7L1519.2 450.3L1518.6 456L1523.9 458.6L1535.9 462.5L1536.3 456.8L1549.6 459.1L1557.1 459.7L1557.2 456.7L1571.5 456.5L1571.2 450.4L1584.3 448.5L1583.7 445.6L1589.6 444.1L1587.7 438.3L1597.3 434.6L1592.3 426.9L1598.3 423.1L1600.7 420.6L1593.3 415.1L1595.2 411.2L1592.4 409.9L1592.6 408.1L1586.8 406.1L1586 403.5L1583.1 400.6L1580.7 400.4L1575.4 397.7L1570.4 396.5L1571.5 396L1565.1 395.3L1558.6 395.4L1557.7 394.8L1553 395.1L1545.8 396.6L1536.2 399.5ZM1550.4 449.9L1549.8 455.9L1543.1 455L1530.4 451.9L1524.9 449.7L1515.8 444.6L1512.5 441.7L1514.6 436.3L1512.1 433.2L1510.6 430.2L1512.2 427.8L1511.6 424.7L1515.2 420.3L1515.4 417.4L1516.4 414.6L1523 409.8L1526.8 405.3L1533.7 402.7L1535.9 401L1542.8 400.2L1544.9 399L1547 399.1L1551.3 397.5L1556 399.1L1563.7 398.3L1566.8 398.6L1570.9 399.8L1572.9 401L1574.6 403L1574.7 404.4L1573.9 406L1582.2 409.3L1579.6 411.5L1582 413.1L1580 414.3L1586.2 420.1L1583.1 421.4L1588 428.5L1579.1 431.1L1581.9 439.4L1570 441.1L1570.6 447.1L1564 447.4L1564 450.5Z" fill="#000" fill-opacity="0.07"/><path d="M1552.4 395.2L1553.8 395.5L1557.6 395.1L1558.5 395.6L1564.9 395.5L1570.6 396.2L1569.6 396.6L1574.9 397.9L1580.6 400.7L1583.1 400.8L1585.6 403.4L1586.6 406.3L1592.3 408.3L1592.2 410.1L1594.9 411.3L1593 415.1L1600.3 420.7L1595.4 424.9L1591.9 426.8L1596.9 434.5L1587.4 438.1L1589.3 443.9L1583.4 445.4L1584.1 448.4L1570.9 450.2L1571.3 456.3L1556.9 456.5L1556.9 459.5L1542.8 457.9L1536 456.5L1535.6 462.5L1549.7 464.9L1564.2 465.6L1571.8 465.3L1571.7 459.5L1578.8 458.7L1578.6 455.7L1591.7 453L1590.4 447L1601.1 443L1597.2 434.6L1604.3 430.1L1607.1 427.3L1600.6 420.6L1603 416.1L1603.3 413.6L1602.7 410.9L1594.9 407.2L1592.8 403.7L1590.9 402L1588.4 400.3L1582.2 397.5L1574.7 395.5L1566.1 394.5ZM1508.8 425.4L1506.9 431.3L1505.8 440.1L1506.7 444.1L1508.4 447.3L1511 450.4L1514.5 453.3L1518.8 456.1L1519.5 450.2L1515.2 447.4L1511.8 444.4L1509.2 441.3L1509.9 438.6L1508.3 435.4L1507.6 432.1L1509.9 427L1510.2 423.8L1511.3 420.7L1515 415L1511.3 420.1Z" fill="#000" fill-opacity="0.10"/><path d="M1577.4 396.1L1587.8 400.2L1592.3 403.6L1594.7 407.4L1602.5 411L1603 413.4L1602.8 415.8L1601.9 418.2L1600.3 420.7L1606.7 427.3L1601 432.2L1596.9 434.5L1600.8 442.8L1590.1 446.9L1591.4 452.8L1578.3 455.5L1578.5 458.5L1571.4 459.3L1571.5 465.3L1585.9 463.3L1585.6 457.5L1592 455.9L1591.7 453L1602.8 448.7L1601.1 443L1605.3 440.6L1609.1 437.8L1607.6 435.1L1610.4 432.3L1607 427.3L1608.7 424.7L1609.8 421.9L1610.1 419.1L1609.4 415.9L1602.7 410.9L1600 406.6L1594.5 402.2L1586.2 398.6ZM1506.1 436.7L1506 440.7L1507.2 430.7L1507 430.7Z" fill="#000" fill-opacity="0.14"/><path d="M1596.6 403.7L1601.3 408.6L1602.5 411L1609.7 416.3L1608.4 413.5L1606.3 410.7L1602.9 407.8ZM1602.5 448.6L1591.4 452.8L1591.8 455.7L1585.3 457.3L1585.7 463.3L1598.5 459.6L1598 453.9L1603.3 451.6L1602.8 448.7L1607.2 446.3L1611.2 443.3L1609.1 437.8L1611.8 435L1613.8 432L1615.1 428.6L1613.4 426.2L1613.6 423.1L1609.8 418.5L1609.6 421.6L1608.6 424.5L1606.7 427.3L1610.1 432.2L1607.3 435.1L1608.8 437.7L1600.8 442.8Z" fill="#000" fill-opacity="0.17"/><path d="M1605.4 409.9L1609.2 416L1609.8 418.9L1613.4 423.2L1613.2 426.3L1614.8 428.6L1613.7 431.7L1611.7 434.7L1608.8 437.7L1610.9 443.2L1607.1 446L1602.5 448.6L1603 451.5L1597.7 453.8L1598.3 459.7L1603.7 457.4L1608.6 454.6L1607.9 449L1611.6 446.3L1614.8 443L1614.1 440.2L1616.1 437.4L1617.4 433.7L1615.1 428.6L1615.4 425.9L1614.9 422.7L1613.1 419.1Z" fill="#000" fill-opacity="0.21"/><path d="M1616.8 426.5L1614.3 421.7L1615.1 425.4L1614.8 428.6L1617.2 433.8L1616 437L1613.9 440.2L1614.6 442.9L1611.6 446L1607.7 448.9L1608.4 454.8L1612.3 451.9L1615.4 448.8L1617.6 445.7L1618.9 442.4L1619.2 438.4L1618.5 433.6Z" fill="#000" fill-opacity="0.25"/><path d="M1552.1 371.2L1552 371L1551.4 372L1551.7 371.9L1549.5 378.6L1549.5 378.4L1549 384.5L1550.1 392.1L1552.5 397L1553.5 400.1L1552 406.1L1552.3 406L1552.7 407.2L1552.8 407L1553.9 408.2L1555.4 409L1557.8 409.8L1560 410.2L1562.7 410.3L1565.3 410.1L1567.8 409.6L1569.9 408.9L1571.4 407.9L1572.4 406.8L1572.5 407L1572.8 405.3L1571.5 400.1L1572.6 396.9L1575.2 391.8L1575 391.8L1576 384.1L1575.5 378L1575.4 378.2L1573.2 371.6L1573.4 371.7L1571.8 370L1567.6 367.5L1566.1 366.9L1562.4 366.5L1560.2 366.6L1558 367.2L1552.3 370.6L1552.4 370.8Z" fill="rgb(177, 179, 184)"/><path d="M1549.5 378.9L1549.2 385.1L1549.7 386.7L1550.4 392.6L1551.8 394L1553.7 398.1L1552.6 397L1553.6 400.1L1552.2 405.6L1552.7 406.9L1554 401.2L1554.9 402.2L1553.8 407.9L1555.5 408.9L1556.5 403L1558.3 403.6L1557.6 409.6L1560.2 410.1L1560.5 404L1562.8 404.1L1562.8 410.2L1565.5 410L1565.1 403.9L1567.1 403.5L1567.9 409.5L1570 408.7L1569 402.8L1570.3 402L1571.5 407.7L1572.5 406.5L1571.1 400.9L1570.4 401.8L1571.5 398L1572.5 396.9L1574.9 392.1L1575.8 384.5L1575.5 386.1L1575.1 380.2L1575.5 378.6L1573 371.3L1569 368.8L1568.3 368.1L1562.9 368.5L1567.3 367.5L1565.7 367L1562.6 368.5L1564.1 366.7L1562.3 366.6L1562.5 368.5L1560.5 366.7L1558.8 367.1L1562.2 368.5L1557.5 367.6L1552.9 370.4L1551.8 371.7L1549.9 377.5ZM1558.3 403.6L1557.7 400L1560.1 400.4L1560.4 404ZM1559.7 396.6L1562.9 396.8L1562.8 400.5L1560.2 400.3ZM1556.6 396.1L1556.3 390.3L1559.4 390.9L1559.6 396.6ZM1559.6 384.7L1562.9 384.9L1562.9 391L1559.5 390.8ZM1556.4 384.1L1557.4 377.3L1560 377.7L1559.5 384.6ZM1561 372.9L1562.7 373L1562.8 377.8L1560 377.7ZM1559.3 372.5L1562.4 368.7L1560.9 372.8ZM1557.3 377.2L1555.1 376.5L1557.8 372.1L1559.2 372.6ZM1556.8 371.4L1562.2 368.7L1557.8 372ZM1569.1 370.5L1568.5 371.2L1562.9 368.7ZM1569.3 369.7L1573.4 372.6L1573.1 373.9L1569.2 370.5ZM1563 368.6L1569 368.9L1569.3 369.6ZM1556.4 402.9L1555 402.1L1553.9 398.3L1555.5 399.2ZM1556.5 396.1L1557.6 399.9L1555.5 399.2L1553.9 395.2ZM1552.1 374.3L1556 370.7L1556.7 371.4L1553.2 375.4ZM1562 368.7L1556 370.6L1555.7 369.9ZM1551.9 371.7L1555.8 369.1L1555.7 369.9L1551.6 372.9ZM1562 368.6L1555.9 369L1556.5 368.3ZM1550.1 380.5L1549.6 379L1551.6 373L1552 374.3ZM1549.8 386.7L1550.1 380.6L1551.5 382L1551.2 388.1ZM1553.6 383.2L1551.5 382L1553.2 375.5L1555 376.5ZM1551.2 388.2L1553.4 389.4L1553.8 395.1L1551.8 394ZM1553.4 389.4L1553.7 383.3L1556.3 384.1L1556.2 390.3ZM1562.9 400.5L1565.4 400.3L1565 403.9L1562.8 404.1ZM1569.1 395.9L1567.9 399.8L1565.5 400.3L1566.2 396.5ZM1563 391.1L1566.3 390.8L1566.1 396.5L1562.9 396.7ZM1569.3 384L1569.5 390.1L1566.4 390.7L1566.3 384.6ZM1562.9 377.9L1565.6 377.7L1566.2 384.6L1562.9 384.8ZM1566.1 372.5L1568.2 377.1L1565.7 377.6L1564.5 372.8ZM1571.9 382.9L1569.4 383.9L1568.3 377.1L1570.4 376.3ZM1568.5 371.3L1572.1 375.2L1570.5 376.2L1567.5 371.9ZM1575.1 380.2L1573.9 381.6L1572.1 375.2L1573.1 374ZM1566.1 372.4L1562.7 368.7L1567.4 371.9ZM1564.4 372.8L1562.7 372.9L1562.5 368.7ZM1569.2 395.8L1569.5 390.1L1572.2 389.1L1571.7 394.9ZM1570 398.9L1571.7 394.9L1573.5 393.8L1571.5 398ZM1574.8 392.2L1573.7 393.6L1574.2 387.8L1575.4 386.4ZM1572 383L1573.9 381.7L1574.2 387.8L1572.2 389ZM1567.9 399.8L1569.9 399L1568.9 402.8L1567.2 403.4Z" fill="#000" fill-opacity="0.350"/><path d="M1557.1 367.6L1551.8 371.6L1551.4 373.2L1552 374.5L1556 370.9L1556.7 371.6L1562.1 368.9L1559.1 372.6L1562.6 373L1562.7 378L1568.4 377.2L1566.3 372.5L1568.5 371.4L1569.3 370.4L1558.9 367Z" fill="#000" fill-opacity="0.04"/><path d="M1563 368.8L1569.2 370.6L1569.5 369.8L1568.7 368.2L1566.1 366.9L1562.1 366.5L1558.5 367.1L1561.9 368.4L1562 368.9ZM1551.4 372.1L1555.9 369.1L1558 367.2L1552.3 370.6ZM1551.6 382.2L1556.5 384.3L1563 385L1563 377.7L1560 377.6L1555.1 376.4L1552 374L1550 380.6ZM1553.9 408.2L1557.5 409.7L1560.3 410.2L1560.6 403.9L1556.5 402.9L1553.9 400.9L1552.6 406.8ZM1570.6 376.3L1567.5 371.8L1565.9 372.4L1568.2 377.2Z" fill="#000" fill-opacity="0.07"/><path d="M1549.4 379L1550 380.6L1549.6 386.7L1551.3 388.4L1556.3 390.5L1563 391.2L1563 384.9L1566.4 384.7L1565.8 377.5L1562.7 377.7L1562.8 384.7L1556.4 384L1553.7 383.1L1551.6 381.9L1550.2 380.5L1552.2 374.3L1551.7 372.9L1552 371ZM1553.6 399.7L1552.2 405.6L1552.7 407.2L1554.1 401.2ZM1573.3 373.9L1569.1 370.3L1567.3 371.9L1570.4 376.4L1572.1 375.4ZM1565.6 410.1L1565.2 403.8L1560.4 403.9L1560 410.2Z" fill="#000" fill-opacity="0.10"/><path d="M1551.7 394.1L1556.7 396.2L1563 396.9L1563 391.1L1566.5 390.9L1566.4 384.7L1569.5 384L1568.4 376.9L1565.5 377.5L1566.1 384.5L1562.8 384.7L1562.8 390.9L1556.2 390.2L1551.3 388L1549.9 386.6L1550.2 380.6L1549.5 378.4L1549.1 385.1L1549.7 386.7L1550.3 392.7ZM1552.2 406.2L1553.9 398.4L1552 406.1ZM1573.5 372.6L1573 371.2L1568.8 368.6L1569 370.5L1573.2 374.2ZM1565.3 410.1L1568 409.5L1567.3 403.3L1564.9 403.8Z" fill="#000" fill-opacity="0.14"/><path d="M1549.9 386.6L1549 384.5L1549.8 391.1L1550.5 393.2ZM1555.2 402.6L1558.5 403.8L1562.9 404.2L1562.9 400.4L1560.2 400.3L1555.5 399.1L1552.4 396.7L1553.9 401.2ZM1567.8 367.7L1569 368.9L1573.4 371.7L1571.8 370ZM1574.1 381.7L1572.2 375L1568.1 377L1569.2 383.8L1566.1 384.5L1566.2 390.7L1562.8 390.9L1562.8 396.9L1566.3 396.6L1566.5 390.9L1569.6 390.2L1569.5 384ZM1567.8 409.6L1570.1 408.7L1569.1 402.6L1567 403.4Z" fill="#000" fill-opacity="0.17"/><path d="M1553.7 398.4L1557.8 400.1L1562.7 400.6L1562.7 404.2L1565.2 404L1565.6 400.2L1562.9 400.4L1563 396.6L1559.6 396.5L1553.9 395.1L1551.9 393.9L1550.1 392.1L1552.5 397L1554.1 401.8L1553 397.6ZM1573.9 381.9L1575.2 380.2L1573.2 373.7L1572 375.1ZM1569.4 390L1566.2 390.7L1566 396.7L1569.3 396L1569.6 390.2L1572.3 389.2L1572.1 382.8L1569.2 383.9ZM1569.9 408.9L1571.7 407.7L1570.4 401.7L1568.8 402.7Z" fill="#000" fill-opacity="0.21"/><path d="M1569.4 390L1569 395.8L1562.8 396.7L1562.7 400.6L1565.3 400.4L1564.9 404.1L1568.8 403.1L1570.2 402.2L1571.4 407.9L1572.5 407L1572.8 405.3L1571.5 400.1L1572.6 396.9L1575.2 391.8L1576 384.1L1575.5 378L1573.4 372.2L1573 373.9L1575 380.2L1573.8 381.6L1571.8 382.9L1572.1 389Z" fill="#000" fill-opacity="0.25"/><path d="M1404.6 418.4L1412.9 418.6L1420.4 418L1427.3 417L1442.6 416.2L1454.1 413L1469.1 407.4L1486.5 400.2L1492.9 397L1495.8 394.8L1496.8 393.5L1497.4 392.2L1497.7 390.8L1497.3 388L1495 383.6L1490.3 377.3L1487 374L1482.7 371L1477.1 368.4L1473.8 367.5L1470.3 366.8L1466.4 366.3L1458.2 366.3L1449.6 367.4L1441.1 369.2L1391.6 384L1385.7 386.1L1378.8 389.3L1373.9 392.6L1371.6 395.1L1370.1 397.7L1369.7 399.2L1369.7 400.9L1370 402.5L1370.8 404.2L1372 405.9L1373.6 407.6L1375.5 409.2L1380.5 412.1L1386.5 414.5L1396.3 417.1Z" fill="rgb(177, 179, 184)"/><path d="M1386.6 385.9L1383.9 388.1L1381.3 389.9L1379.3 389.1L1375.4 391.5L1374 392.5L1375.8 393.3L1370.4 397L1370.3 397.2L1370.5 397.1L1383 402.6L1377.7 406.5L1370.4 403.3L1370.8 404.3L1372 405.9L1374.4 408.3L1377.7 406.5L1383.9 409L1390.2 411.2L1387.5 412.6L1384.9 413.4L1379.7 411.7L1383.4 413.4L1383.9 413.5L1384.9 413.5L1391 415.2L1397.2 416.6L1395 416.8L1396.3 417.1L1401.2 417.9L1407.4 418.4L1411 418.5L1419.6 418L1427.3 416.9L1436.8 416.4L1438.8 414.6L1453.6 411.5L1451.1 414L1454.1 413L1460.8 410.7L1459.1 410.6L1462.2 410.1L1468 407.8L1458.4 408.6L1461.1 406.5L1463.7 404L1469.8 403.9L1476.1 403.5L1473.9 405.4L1479.8 402.9L1476.3 403.4L1479 400.6L1481.6 397.6L1487.8 396.5L1494 395L1492.1 397.4L1494.5 395.9L1496.1 394.3L1494.2 394.9L1497.6 390.1L1497.3 388.1L1493.2 389.4L1487 390.9L1492.3 384.3L1494.9 383.5L1494 382.1L1492.3 384.2L1486 385.9L1479.8 387L1482.5 384L1485.2 380.7L1491.8 379.1L1488.6 375.5L1485.1 380.6L1478.9 381.6L1472.7 382.2L1475.3 378.5L1478 374.2L1484.2 373.6L1486 373.2L1482.7 371L1480.3 369.7L1478 374.2L1471.7 374.3L1465.5 374L1469.4 366.7L1466.4 366.3L1462.4 366.2L1455.9 366.5L1452.9 372.1L1440.6 369.4L1440.2 369.5L1437.6 374.1L1435 378.4L1422.5 376.5L1423.6 374.5L1418.8 375.9L1422.4 376.5L1419.7 380.9L1417.1 384.8L1410.8 384L1404.6 383L1407 379.4L1398.7 381.8L1404.5 383.1L1401.8 386.5L1399.2 389.4L1392.9 387.9L1386.7 385.9L1386.8 385.7L1386.5 385.8ZM1413.2 418L1416.1 418L1422 417.5L1417.1 418.1ZM1425.2 416.4L1427.9 414.9L1440.2 413.3L1438.4 414.2L1433.2 415.4L1426.9 416.6L1424.1 417L1425.2 417L1422.7 417.4ZM1418 413.2L1420.7 410.5L1433.1 410.1L1430.5 412.7L1427.8 414.8L1421.6 415.3L1415.4 415.4ZM1408.2 409.6L1413.5 403.7L1419.7 404L1426 404.1L1420.7 410.4L1414.4 410.2ZM1431.4 397.8L1443.9 397.9L1438.6 404L1426.1 404ZM1456.5 398.2L1444 397.9L1449.3 392.6L1461.8 393ZM1449.3 392.5L1436.9 392.1L1442.2 386.8L1454.6 387.7ZM1442.1 386.7L1429.7 385.8L1432.4 382.3L1435 378.5L1447.5 380.4L1444.8 383.7ZM1450.2 376.5L1452.9 372.1L1459.1 373.2L1465.4 374L1462.7 378.2L1460 381.8L1447.6 380.3ZM1392.9 409.3L1395.6 407.1L1401.8 408.6L1408.1 409.6L1405.4 412.2L1402.8 414.3L1396.5 413L1390.3 411.2ZM1383.1 402.6L1388.4 398.4L1394.6 400.4L1400.9 401.9L1395.6 407L1389.3 405ZM1376 393.3L1381.3 390L1387.5 392.3L1393.7 394.2L1388.4 398.4L1382.2 396ZM1396.5 392L1399.2 389.5L1405.4 390.6L1411.6 391.3L1406.3 396.6L1400.1 395.6L1393.9 394.2ZM1400.1 415.8L1402.8 414.4L1409 415.2L1415.2 415.5L1412.6 417L1410.2 417.9L1403.7 417.6L1397.5 416.6ZM1424.3 391.9L1436.7 392.2L1431.4 397.7L1418.9 397.6ZM1414.4 388.2L1417.1 384.8L1429.6 385.8L1424.2 391.8L1411.8 391.2ZM1412.6 397.3L1418.8 397.6L1413.5 403.6L1407.2 402.9L1401 401.9L1406.4 396.7ZM1455.2 410.4L1446.8 412.3L1440.5 413.2L1443.2 411.5L1445.8 409.4L1458.2 408.6ZM1474.4 392.7L1480.6 392.1L1486.9 391L1481.5 397.5L1475.3 398.1L1469.1 398.4ZM1461.9 393L1467.2 388.1L1473.4 387.8L1479.7 387.1L1474.4 392.7L1468.1 393ZM1433.3 410.1L1438.6 404L1451 404L1445.7 409.3ZM1456.5 398.3L1469 398.4L1463.6 404L1451.2 404ZM1457.4 385L1460.1 381.9L1466.3 382.3L1472.5 382.2L1469.9 385.3L1467.2 388L1461 387.9L1454.8 387.6Z" fill="#000" fill-opacity="0.350"/><path d="M1386.4 385.9L1392.7 388L1390 390.3L1396.2 392L1390.9 396.4L1397.1 398.1L1389.1 405.1L1395.4 407.1L1392.7 409.4L1405.2 412.3L1402.5 414.4L1415 415.6L1421.2 415.5L1434.2 414.2L1436.8 412.3L1449.4 411L1452.1 409.1L1464.6 408.3L1467.3 406.4L1472.5 406L1486.5 400.2L1492.9 397L1496.7 393.5L1497.7 390.8L1497.3 388.1L1495.9 385.1L1492.9 380.5L1489.3 376.3L1481.5 377.8L1469 378.5L1462.8 378.1L1450.2 376.4L1447.5 380.2L1434.9 378.3L1432.2 382.2L1419.7 380.8L1417 384.7L1404.7 382.9L1407.1 379.3ZM1442.6 416.2L1450 414.3L1461 410.6L1454.7 410.3L1452 412.9L1446.1 412.9L1439.4 413.8L1436.5 416.5Z" fill="#000" fill-opacity="0.04"/><path d="M1381.3 410.5L1387.2 412.6L1384.4 413.4L1390.7 415.2L1403.1 417.7L1414.7 418.1L1412.9 418.6L1427.3 417L1436.9 416.5L1438.8 414.7L1446 413.2L1452.1 413.1L1453.5 411.8L1460.4 410.8L1473.2 405.7L1467.2 406.1L1464.5 408.1L1452 408.9L1449.3 410.8L1436.8 412L1434.1 414L1421.6 415.2L1415.3 415.3L1403.1 414.2L1405.7 412.1L1393.2 409.2L1395.8 407L1389.6 405L1397.6 398L1391.4 396.3L1396.7 391.9L1390.5 390.2L1393.1 387.9L1386.7 385.8L1378.8 389.3L1373.9 392.6L1370.7 396.3L1369.7 399.2L1370 402.5L1370.8 404.2L1373.5 407.6L1379 411.3Z" fill="#000" fill-opacity="0.07"/><path d="M1381.3 410.3L1378.7 411.2L1386.5 414.5L1396.3 417.1L1406.7 418.5L1413.5 418.5L1416.8 418L1403.7 417.5L1397.4 416.5L1385.3 413.4L1387.9 412.6ZM1455.9 411.3L1462.3 410L1455.9 411.1Z" fill="#000" fill-opacity="0.10"/><path d="M1404.6 418.4L1413.5 418.5L1426.7 417.1L1461.8 410.3L1465.7 408.7L1454.7 410.3L1426.9 416.5L1418 417.6L1405.5 417.7L1389.2 415.3L1396.4 417.1Z" fill="#000" fill-opacity="0.21"/><path d="M1362.4 602.3L1355.7 618.7L1352.9 628.6L1352.1 632.9L1351.8 637.3L1351.9 641.5L1352.9 646.5L1355.8 653.2L1358.1 656.6L1361.1 659.9L1364.7 662.9L1368.9 665.9L1373.8 668.6L1379.2 671.2L1385.1 673.5L1391.5 675.6L1398.2 677.3L1405.1 678.7L1412.7 679.9L1420.3 680.7L1428 681.2L1435.5 681.3L1443.3 681.1L1451 680.6L1458.8 679.7L1465.9 678.5L1472.9 677L1479.6 675.2L1485.9 673.1L1492 670.6L1497 668.2L1501.8 665.4L1505.9 662.4L1509.4 659.3L1512.3 656L1514.6 652.5L1517.3 645.9L1518.2 640.9L1518.1 636.6L1517.6 631L1514.1 618.1L1507.5 601.8L1502.8 589L1500.3 578.6L1499.5 573.7L1497.6 555.5L1496.8 529.8L1496.4 457.8L1496.7 413L1497.3 390.9L1496.3 393.2L1494.9 394.9L1492.8 396.5L1490 398L1483.1 401L1459.7 410.5L1447.9 414.4L1441.7 415.9L1435.5 417.1L1429.4 418L1423.6 418.5L1412.8 418.5L1402.8 417.6L1393.1 415.8L1388.4 414.6L1383.9 413L1379.7 411.1L1376.2 409L1373.4 406.8L1371.5 404.4L1370.5 402.1L1370.1 399.3L1369.9 399.3L1370.8 420.9L1371.8 461.1L1372.5 530.3L1372 555.8L1370.4 574.2L1369.8 577.9L1367.1 589.5Z" fill="rgb(177, 179, 184)"/><path d="M1371 417.3L1372.1 419.7L1372.7 439.1L1371.6 436.8L1371.3 434.2L1371.7 454.4L1372.1 457.1L1373.2 459.6L1373.4 466.3L1373.6 479.7L1372.5 477.2L1372.1 474.4L1372.2 495.1L1372.7 498L1373.8 500.6L1374 521.5L1373 519L1372.4 516.1L1372.5 537.4L1373.1 540.3L1374.2 542.8L1373.8 563.9L1372.7 561.3L1372.2 558.5L1372.1 555.6L1370.5 574.2L1370.5 577.2L1371.1 580.1L1372.3 582.7L1371.6 587.9L1369.7 596.9L1368.5 594.1L1367.8 591.1L1367.7 588.2L1369.7 579.4L1370.2 576.4L1366.6 592.5L1363.6 600.9L1364.1 598L1362.5 602.4L1358.9 611.2L1358.3 614.4L1355 622.7L1354.3 625.3L1354.8 622.3L1353 628.7L1352.3 632.4L1354.1 626.2L1354.2 629.7L1355 633.2L1356.5 636.6L1354.7 643.1L1354.5 644.9L1353 641.4L1352.2 637.8L1352.2 634L1351.9 637.3L1352 641.1L1352.1 642.3L1352.9 646.1L1355.6 652.6L1357.9 656.2L1360.9 659.5L1364.5 662.6L1363.5 659.7L1367.8 662.8L1372.7 665.6L1378.2 668.2L1379 671L1385 673.4L1391.3 675.4L1398.1 677.2L1397.6 674.5L1404.8 676L1412.3 677.2L1419.9 678L1420.1 680.6L1427.9 681.1L1435.7 681.2L1443.4 681L1443.6 678.4L1451.3 677.9L1459 677L1466.4 675.8L1466 678.4L1473 676.9L1479.7 675.1L1486.1 672.9L1486.9 670.2L1492.7 667.8L1498.1 665.1L1502.9 662.2L1502 665.1L1506.1 662.1L1509.6 658.9L1512.6 655.4L1513.7 652.4L1515.8 649L1517.3 645.4L1518 641.6L1518.1 640.1L1517.7 631.8L1516.8 628L1515 621.6L1515.8 625.3L1515.8 628.7L1515 625.6L1511.7 617.2L1511.7 614L1510.9 610.4L1507.4 601.9L1505.8 597.4L1506.5 600.7L1506.5 603.7L1503.4 595L1502.3 590.6L1502.3 587.8L1500.2 578.6L1499.4 573.6L1499.4 575.8L1497.6 557.9L1497 560.8L1496 563.5L1494.5 566.1L1493.9 544.9L1495.4 542.4L1496.4 539.7L1496.8 536.9L1496.6 515.6L1496.2 518.4L1495.3 521.1L1493.8 523.6L1493.8 502.6L1495.2 500.1L1496.2 497.4L1496.5 494.5L1496.4 472.5L1496.1 475.3L1495.2 477.8L1493.8 480.3L1493.9 457.3L1495.3 455.2L1496.2 452.9L1496.4 450.3L1496.5 427.8L1496.3 430.1L1495.5 432.3L1494.1 434.2L1494.3 419L1494.4 412.2L1495.8 410.5L1496.6 408.5L1497.2 391.4L1496.4 393.3L1494.9 395L1494.4 412.1L1492.3 413.9L1489.5 415.6L1486.4 417.2L1486.8 399.6L1474.8 404.6L1474.4 422.3L1464.8 426.2L1459.5 428.1L1459.8 410.6L1454 412.6L1447.9 414.4L1441.7 416L1441.6 432.9L1435.5 433.9L1429.5 434.5L1423.7 434.8L1423.6 418.6L1418 418.7L1412.8 418.6L1407.7 418.3L1407.9 434L1403 433.4L1398.2 432.5L1393.5 431.4L1393.1 415.9L1388.4 414.7L1383.8 413.1L1379.7 411.2L1380.2 426.5L1376.8 424.4L1374.1 422.1L1372.1 419.7L1371.4 404.5L1370.4 402.1L1370.1 399.7L1370.7 414.9ZM1420 677.9L1420 673.4L1427.8 673.9L1435.7 674.1L1443.5 673.9L1443.5 678.4L1435.7 678.6L1427.8 678.4ZM1420.3 664.4L1419.9 673.4L1412.3 672.5L1404.8 671.4L1397.6 669.9L1398.5 661L1405.5 662.4L1412.8 663.5ZM1420.3 664.3L1421.1 650.8L1428.3 651.3L1435.6 651.4L1442.9 651.2L1443.3 664.7L1435.6 664.9L1427.9 664.8ZM1414 650L1407.1 648.9L1400.4 647.5L1402.7 632.2L1408.9 633.5L1415.4 634.5L1422 635.2L1421 650.7ZM1422 635.2L1422.8 620.1L1429.2 620.5L1435.6 620.6L1441.9 620.4L1442.3 635.6L1435.6 635.7L1428.8 635.6ZM1416.5 619.4L1410.5 618.4L1404.6 617.2L1406 602.1L1411.5 603.2L1417.3 604.2L1423.3 604.8L1422.7 620ZM1423.3 604.8L1423.7 585.5L1429.5 585.9L1435.5 586.1L1441.5 586L1441.6 605.1L1435.5 605.3L1429.4 605.2ZM1417.9 584.7L1412.3 583.8L1406.9 582.6L1407.3 561.2L1412.6 562.3L1418 563.3L1423.7 564L1423.6 585.4ZM1429.6 564.4L1423.8 564L1423.8 542.8L1429.6 543.3L1435.5 543.6L1441.4 543.5L1441.4 564.6L1435.5 564.7ZM1447.3 564.2L1453.1 563.6L1458.7 562.6L1458.8 583.9L1453.2 584.8L1447.4 585.5L1441.5 585.9L1441.5 564.6ZM1441.5 543.5L1441.5 522.5L1447.5 522.1L1453.2 521.5L1458.8 520.5L1458.7 541.5L1453.2 542.4L1447.4 543.1ZM1441.5 500.4L1441.6 477.6L1447.6 476.8L1453.4 475.7L1459 474.3L1458.9 497.9L1453.3 499L1447.5 499.8ZM1441.6 454.8L1441.7 433L1447.8 431.6L1453.8 430L1459.5 428.2L1459.2 450.8L1453.6 452.4L1447.7 453.7ZM1378.2 668.2L1378.3 663.7L1384.3 666.1L1390.7 668.1L1397.5 669.9L1397.5 674.4L1390.7 672.6L1384.2 670.5ZM1380.3 651.3L1382.5 641.8L1388.1 644L1394.1 645.9L1400.3 647.6L1398.5 660.9L1391.8 659.1L1385.5 657.1L1379.6 654.8ZM1372.9 636.7L1368.9 633.8L1373.3 619.5L1377 622.1L1381.3 624.6L1386 626.8L1382.5 641.7L1377.4 639.3ZM1377 605.2L1378.7 596L1379.4 590.6L1382.8 593L1386.6 595.2L1390.9 597.2L1390.2 602.6L1388.9 612.1L1384.5 610L1380.5 607.7ZM1380.9 571.6L1381.3 550.4L1384.7 552.7L1388.6 554.7L1392.8 556.6L1392.2 578L1388 576L1384.2 573.9ZM1376 545.4L1374.2 542.8L1374.1 521.8L1375.9 524.4L1378.3 526.9L1381.2 529.3L1381.2 550.3L1378.4 548ZM1381.3 529.2L1381.2 508.2L1384.9 510.3L1388.9 512.3L1393.2 514.1L1393 535.3L1388.8 533.4L1384.8 531.4ZM1375.7 503.2L1373.9 500.6L1373.6 480L1375.4 482.6L1378 485.1L1381.1 487.3L1381.2 508L1378.1 505.7ZM1381.2 487.3L1381 466.8L1384.8 468.9L1389 470.7L1393.5 472.2L1393.4 493L1389 491.3L1384.9 489.4ZM1393.5 472.2L1393.5 451.5L1398.2 452.7L1407.9 454.6L1407.9 475.8L1398.2 473.5ZM1374.5 441.7L1377.3 444.1L1380.6 446.3L1380.9 466.7L1377.7 464.5L1375.1 462.1L1373.3 459.5L1372.7 439.3ZM1380.6 446.3L1380.3 426.6L1384.3 428.5L1388.8 430.1L1393.4 431.4L1393.4 451.4L1388.9 449.9L1384.6 448.2ZM1373.9 564.1L1375.7 566.8L1378 569.3L1380.8 571.7L1379.3 590.5L1376.5 588L1374.2 585.4L1372.4 582.7ZM1363.7 653.2L1365.2 646.5L1369.5 649.5L1374.3 652.3L1379.6 654.8L1378.4 661.7L1378.2 663.6L1372.8 661L1367.8 658.1L1363.5 655.1ZM1365.6 610.7L1368.6 601.6L1369.7 597.1L1371.6 599.9L1374 602.6L1376.9 605.2L1376 609.9L1373.3 619.4L1370.1 616.6L1367.5 613.7ZM1362.7 627.7L1365.5 630.9L1368.8 633.9L1366 643L1365.2 646.4L1361.7 643.3L1358.7 640L1356.5 636.6L1357.4 633.3L1360.6 624.6ZM1365.5 610.7L1364 615.3L1360.6 624.4L1359.2 621.2L1358.4 617.8L1358.4 614.4L1361.8 605.8L1363.4 601.5L1363.5 604.6L1364.2 607.7ZM1354.6 645.1L1356.9 648.6L1359.9 651.9L1363.5 655.1L1363.3 658.3L1363.4 659.6L1359.8 656.4L1356.8 653L1354.5 649.5L1354.4 648.2ZM1386 626.8L1388.2 617L1388.9 612.2L1393.8 614.1L1399.1 615.8L1404.6 617.2L1404.1 622.1L1402.7 632.2L1396.8 630.6L1391.2 628.8ZM1390.9 597.2L1392.3 578L1396.9 579.8L1401.7 581.4L1406.8 582.7L1405.9 602L1400.6 600.6L1395.6 599ZM1392.9 556.5L1393.1 535.3L1397.7 537L1402.5 538.5L1407.5 539.8L1407.3 561.1L1402.2 559.8L1397.4 558.2ZM1393.3 514L1393.4 493.1L1398.1 494.6L1407.8 497.2L1407.6 518.5L1397.9 515.7ZM1423.8 521.6L1423.8 499.9L1429.6 500.4L1435.5 500.6L1441.5 500.4L1441.5 522.4L1435.5 522.5L1429.6 522.2ZM1407.8 497.1L1407.9 475.9L1413 476.8L1418.2 477.5L1423.7 477.9L1423.8 499.9L1418.2 499.2ZM1423.8 456L1429.5 456L1435.5 455.6L1441.6 454.9L1441.5 477.5L1435.5 478L1429.5 478.1L1423.8 477.9ZM1408 454.5L1408 434.1L1413 434.6L1418.1 434.9L1423.7 434.9L1423.7 456L1418.2 455.7L1413 455.2ZM1418.2 520.8L1423.7 521.6L1423.7 542.7L1418.1 542L1412.7 541L1407.5 539.8L1407.7 518.5L1412.8 519.8ZM1466.5 675.7L1466.5 671.2L1473.6 669.6L1480.4 667.8L1486.7 665.6L1486.8 670.1L1480.4 672.3L1473.6 674.1ZM1465.7 662.1L1464.1 648.7L1470.7 647.3L1477 645.6L1482.9 643.6L1484.9 653.2L1485.5 656.7L1479.3 658.8L1472.6 660.6ZM1462.2 633.2L1460.5 618.3L1466.3 617L1471.8 615.5L1477 613.8L1477.7 618.6L1479.7 628.5L1474.2 630.3L1468.3 631.9ZM1479.9 596.9L1484.1 594.8L1487.8 592.6L1488.5 598L1490.1 607.2L1486.2 609.6L1481.8 611.7L1477.1 613.7L1475.8 604.2L1475.3 598.8ZM1487.9 592.5L1486.4 573.6L1489.5 571.3L1492.2 568.8L1494.4 566.2L1496.1 584.9L1493.9 587.6L1491.1 590.1ZM1478.6 577.7L1474.2 579.6L1473.9 558.3L1478.2 556.5L1482.2 554.4L1485.8 552.3L1486.3 573.5L1482.7 575.7ZM1485.9 552.2L1485.8 531.1L1488.9 528.8L1491.6 526.4L1493.7 523.8L1493.8 544.9L1491.7 547.4L1489 549.9ZM1485.8 509.8L1485.8 487.3L1488.9 485.1L1491.6 482.9L1493.7 480.4L1493.7 502.6L1491.6 505.1L1488.9 507.6ZM1485.8 463.7L1485.7 487.3L1482.1 489.3L1478.2 491.3L1473.9 493.1L1474 469.3L1482.2 465.6ZM1485.9 463.6L1486.1 440L1489.2 438.2L1491.9 436.4L1494.1 434.4L1493.8 457.3L1491.7 459.5L1489 461.6ZM1478.5 443.5L1474.2 445.3L1474.5 422.4L1486.3 417.3L1486 440ZM1443.6 673.8L1443.4 664.8L1450.9 664.2L1458.4 663.4L1465.6 662.2L1466.4 671.1L1459 672.3L1451.3 673.2ZM1442.9 651.1L1442.4 635.6L1449.1 635.1L1455.7 634.4L1462.1 633.3L1464 648.7L1457.2 649.8L1450.1 650.6ZM1442 620.4L1441.7 605.2L1447.8 604.8L1453.7 604.1L1459.4 603.1L1460.5 618.2L1454.5 619.2L1448.3 619.9ZM1459.5 603L1458.9 583.9L1464.3 582.7L1469.4 581.3L1474.2 579.6L1475.3 598.7L1470.3 600.4L1465 601.8ZM1458.8 562.5L1458.8 541.5L1464.1 540.3L1469.1 538.8L1473.8 537.1L1473.8 558.2L1469.1 559.9L1464.1 561.3ZM1473.9 516L1478.1 514.1L1482.1 512.1L1485.7 509.9L1485.7 531L1482.2 533.2L1478.2 535.2L1473.9 537ZM1458.9 520.4L1459 497.9L1464.3 496.5L1469.2 495L1473.8 493.2L1473.8 515.9L1469.2 517.6L1464.2 519.1ZM1459.1 474.3L1459.3 450.8L1464.6 449L1474.2 445.4L1473.9 469.2L1464.4 472.7ZM1482.9 643.5L1479.7 628.5L1484.8 626.4L1489.5 624.1L1493.6 621.6L1497.8 636.2L1493.4 638.8L1488.4 641.3ZM1486.7 663.7L1485.6 656.7L1491.3 654.4L1496.6 651.8L1501.3 649L1502.7 655.8L1502.9 657.6L1498.1 660.5L1492.7 663.2L1486.8 665.6ZM1498.8 599.2L1497 590.2L1496.2 584.9L1497.8 582.3L1498.9 579.5L1499.4 576.7L1500.3 581.9L1502.3 590.6L1501.7 593.5L1500.5 596.5ZM1504.7 610.1L1506 607.1L1506.6 604L1508.2 608.5L1511.6 617.2L1511 620.6L1509.7 623.9L1507.7 627.1L1502.9 613.2ZM1491.1 611.9L1490.2 607.3L1493.6 604.8L1496.5 602.2L1498.8 599.4L1499.8 604L1502.8 613.2L1500.3 616.1L1497.3 618.9L1493.7 621.6ZM1500.6 645.5L1497.9 636.2L1501.7 633.4L1505 630.4L1507.7 627.2L1510.8 636.1L1511.7 639.4L1508.9 642.7L1505.4 645.9L1501.3 648.9ZM1513.8 636L1515.2 632.6L1515.9 629L1517.6 635.3L1517.8 637.1L1517.2 640.7L1515.7 644.3L1513.6 647.8L1513.4 645.9L1511.7 639.4ZM1510.7 651.3L1513.6 647.9L1513.7 651.1L1513.6 652.4L1510.8 655.8L1507.2 659.1L1503 662.1L1503.1 660.8L1503 657.6L1507.1 654.6Z" fill="#000" fill-opacity="0.350"/><path d="M1378.7 634.2L1374.2 631.6L1371.3 641.6L1381.1 646.8L1380.1 651.4L1392.3 655.8L1393.2 651.1L1399.7 652.8L1402.1 637.2L1390.2 633.7L1380 629.3Z" fill="#000" fill-opacity="0.04"/><path d="M1362.7 611.7L1362 608.5L1355 626.4L1355.8 630.3L1357.2 633.3L1354.6 643.2L1357.1 646.9L1360.1 650.3L1368.1 656.5L1378.5 661.9L1390.9 666.4L1405 669.6L1420.1 671.6L1427.9 672.1L1428.1 661.3L1443.4 661.3L1442.6 640.6L1435.7 640.8L1435.7 625.4L1422.7 624.8L1423.3 610.2L1411.3 608.7L1411.6 603.1L1395.6 598.9L1386.7 595.1L1382.6 592.8L1382 598.1L1375.9 593.3L1373.3 590.5L1370.5 604.1L1367.3 598.2ZM1381.4 646.7L1371.6 641.5L1374.4 632L1378.8 634.5L1380.1 629.6L1390.3 634L1401.8 637.4L1399.5 652.5L1393 650.8L1392.2 655.5L1380.4 651.3Z" fill="#000" fill-opacity="0.07"/><path d="M1370.5 576.5L1369.8 580.8L1369.7 578.8L1367.4 589L1355.7 618.7L1352.1 632.9L1352.3 636.5L1353.1 639.6L1352.9 641.4L1354.4 645L1354.2 648.2L1356.7 652.1L1359.8 655.4L1363.4 658.6L1372.5 664.3L1384 669.3L1397.6 673.3L1412.1 675.9L1427.9 677.3L1427.9 674L1435.8 674.1L1435.8 672.2L1451.2 671.5L1459.1 670.6L1458.3 659.9L1465.5 658.7L1464.9 654L1471.7 652.5L1469.1 636.9L1462.8 638.2L1461 623L1454.9 624L1454.6 619.1L1448.4 619.8L1448 610.1L1441.8 610.5L1441.8 605L1435.6 605.2L1435.6 585.9L1429.6 585.8L1429.7 564.4L1423.9 563.9L1423.9 500L1429.7 500.5L1429.7 492.8L1423.9 492.4L1423.8 448.8L1429.6 448.7L1429.6 441L1423.8 441.2L1423.7 418.5L1412.8 418.5L1398 416.9L1388.4 414.6L1383.9 413L1376 408.9L1377.7 471.3L1378.2 547.7L1375.9 545.2L1375.5 566.3L1373.8 563.7L1372.3 582.2ZM1384.4 664L1378.4 661.6L1368.1 656.2L1360.1 649.9L1357.1 646.6L1354.9 643.1L1357.5 633.3L1356 629.8L1355.2 626.4L1361.9 609.3L1362.6 612.6L1367.4 598.9L1368.7 601.9L1370.6 604.7L1373.5 591L1375.8 593.7L1382.2 598.5L1382.8 593.1L1386.7 595.4L1395.7 599.2L1411.4 603.3L1411.1 608.9L1423 610.4L1422.5 625.1L1435.4 625.6L1435.5 641L1442.4 640.8L1443.1 661L1427.9 661.1L1427.7 671.8L1412.3 670.5L1404.9 669.4L1397.7 667.9Z" fill="#000" fill-opacity="0.10"/><path d="M1370.2 401.5L1371.9 467.8L1372.5 530.3L1372 555.8L1370.4 574.2L1366.6 593.2L1369.6 580.4L1369.8 582.9L1370.5 577.7L1371.2 580.5L1372.4 583.2L1374 564.4L1375.7 567.1L1376.1 545.8L1378.5 548.3L1377.9 471.6L1376.3 409.1L1373.4 406.8L1371.5 404.4ZM1352.4 631.7L1351.9 641.5L1352.8 646L1354.4 649.6L1356.9 653.5L1363.6 659.9L1372.8 665.8L1384.3 670.8L1397.7 674.6L1412.4 677.3L1427.6 678.6L1435.8 678.7L1435.8 677.4L1451.3 676.7L1459.2 675.7L1459.1 672.5L1466.6 671.3L1466.5 669.3L1480.4 665.9L1478.9 655.4L1490.8 651L1486 631.2L1480.8 633.3L1477.8 618.4L1472.5 620.1L1471.4 610.5L1466 612L1465.5 607.2L1459.9 608.4L1459.6 602.9L1453.8 603.9L1453.3 584.7L1447.5 585.4L1447.9 431.4L1441.8 432.8L1441.8 421.8L1448 420.3L1448.1 414.3L1435.5 417.1L1423.5 418.5L1423.6 441.5L1429.4 441.3L1429.4 448.4L1423.6 448.6L1423.7 492.7L1429.4 493.1L1429.4 500.3L1423.7 499.8L1423.6 564.1L1429.4 564.6L1429.4 586L1435.4 586.2L1435.4 605.4L1441.5 605.3L1441.6 610.8L1447.8 610.4L1448.1 620.1L1454.4 619.4L1454.7 624.3L1460.8 623.2L1462.6 638.5L1468.9 637.1L1471.4 652.3L1464.6 653.8L1465.2 658.5L1458 659.7L1458.8 670.4L1443.5 671.8L1435.5 672L1435.5 673.9L1427.6 673.8L1427.6 677L1412.2 675.7L1404.7 674.5L1397.5 673L1384.2 669.1L1372.7 664.1L1363.4 658.2L1359.7 655L1356.7 651.6L1354.5 648.2L1354.7 645L1353.1 641.4L1353.3 639.6L1352.5 635.9Z" fill="#000" fill-opacity="0.14"/><path d="M1370.6 415L1371.2 417.9L1370.1 399.3L1369.9 399.3ZM1447.7 431.8L1447.3 585.7L1453.1 585L1453.6 604.2L1459.4 603.2L1459.7 608.7L1465.3 607.5L1465.8 612.3L1471.2 610.8L1472.3 620.5L1477.6 618.7L1480.6 633.6L1485.8 631.5L1490.5 650.8L1478.7 655.2L1480.1 665.8L1466.2 669.2L1466.3 671L1458.9 672.3L1458.9 675.5L1443.5 677L1435.5 677.2L1435.5 678.7L1451.2 678L1466.6 675.8L1466.6 674.5L1480.6 671.1L1480.5 667.8L1486.9 665.7L1486.8 663.8L1498.1 658.7L1496 648.4L1500.7 645.6L1499.4 641.1L1503.4 638.2L1498.7 623.5L1495 626.2L1491.1 611.8L1487.1 614.1L1486.3 609.4L1481.9 611.6L1480 596.7L1475.4 598.6L1474.7 585.8L1469.8 587.5L1469.5 581.1L1464.4 582.5L1464.4 488.4L1459.1 489.8L1459.9 410.5L1447.8 414.4L1447.8 420.1L1441.6 421.6L1441.5 433.1ZM1352.9 646.5L1352.9 644.6L1351.8 640.4L1352 642.3ZM1359.5 656L1360.7 659.4L1364.7 662.9L1373.5 668.5L1379.2 671.2L1385.1 673.5L1398 677.3L1412.7 679.9L1412.3 677L1397.6 674.4L1384.2 670.5L1378.2 668.1L1367.8 662.6Z" fill="#000" fill-opacity="0.17"/><path d="M1459.6 410.5L1458.8 490.2L1464.2 488.7L1464.2 582.8L1469.3 581.4L1469.6 587.8L1474.5 586.1L1475.2 598.9L1479.8 597L1481.8 611.9L1486.1 609.8L1487 614.5L1491 612.1L1494.9 626.6L1498.6 623.9L1503.2 638.1L1499.2 641L1500.4 645.5L1495.8 648.3L1497.8 658.6L1486.5 663.6L1486.7 665.5L1480.3 667.7L1480.4 670.9L1466.4 674.3L1466.3 675.9L1480.3 672.5L1486.9 670.3L1487 668.9L1498.4 663.8L1498.2 660.6L1503.1 657.7L1502.9 655.8L1510.7 649.5L1508.2 639.4L1510.8 636.4L1513.1 632.7L1501.6 600.7L1497.5 606.4L1494.7 592.7L1491.9 595.2L1491.2 589.9L1488 592.3L1486.5 573.3L1482.8 575.5L1482.4 554.2L1478.4 556.2L1478.7 427.5L1474.5 429.3L1474.9 404.4ZM1352.8 645.3L1355.8 653.2L1358.1 656.6L1361.1 659.9L1359.9 656.4L1356.9 653L1354.6 649.5ZM1412.1 677L1412.5 679.9L1420.3 680.7L1428 681.2L1443.3 681.1L1451.2 680.6L1451.5 677.7L1443.5 678.3L1427.8 678.3Z" fill="#000" fill-opacity="0.21"/><path d="M1474.7 404.5L1474.2 429.6L1478.5 427.8L1478.1 556.6L1482.1 554.6L1482.6 575.9L1486.3 573.8L1487.7 592.7L1491 590.3L1491.8 595.7L1494.6 593.2L1497.4 607L1501.6 601.3L1512.8 632.7L1510.7 636L1507.9 639.4L1510.4 649.4L1502.6 655.7L1502.8 657.6L1498 660.4L1498.1 663.7L1486.8 668.8L1486.7 670.1L1480.4 672.2L1466.4 675.6L1451.2 677.7L1451 680.6L1465.9 678.5L1479.6 675.2L1491.7 670.7L1501.8 665.4L1509.4 659.3L1512.3 656L1514.6 652.5L1517.3 645.9L1518.2 640.9L1517.6 631L1514.1 618.1L1507.5 601.8L1502.8 589L1501.7 584.6L1499.5 573.7L1497.6 555.5L1496.8 529.8L1496.4 457.8L1497.3 390.9L1496.3 393.2L1492.8 396.5L1486.8 399.5Z" fill="#000" fill-opacity="0.25"/><pattern id="ck" width="11" height="11" patternUnits="userSpaceOnUse" patternTransform="rotate(24)"><rect width="11" height="11" fill="#a2a3a7"/><path d="M0 0h5.5v5.5H0zM5.5 5.5h5.5v5.5h-5.5z" fill="#66676b"/></pattern><path d="M1296 528C1292 548 1284 556 1284 562C1286 568 1292 569 1297 566C1310 556 1318 548 1322 534Z" fill="url(#ck)"/><path d="M1326 530C1330 548 1338 570 1350 590C1354 596 1362 598 1366 595C1366 590 1358 584 1352 570C1346 556 1344 540 1344 528Z" fill="url(#ck)"/><path d="M1352 524L1372 520L1376 512L1350 516Z" fill="#8a8b8f"/><path d="M1275.8 522.8L1275.9 522.7L1275.3 526.9L1275.4 526.8L1276.6 530.9L1279.4 534.7L1284.4 540.3L1288.9 543.9L1294.2 546.6L1300.4 548.8L1307.6 550.4L1315.2 551.3L1323 551.5L1331.1 551L1338.7 549.8L1345.3 548.1L1351.2 545.8L1356.2 543L1360.2 539.2L1365.2 533.6L1367.6 529.6L1368.2 525.4L1368.4 525.6L1367.2 521.4L1367.4 521.3L1364.2 516.9L1359 510.8L1358.8 510.9L1361.8 514.9L1362.8 518.5L1362.3 522.2L1360.2 525.8L1356.6 529.1L1351.7 532.1L1345.7 534.5L1338.7 536.4L1331.1 537.6L1323.1 538.1L1315.1 537.8L1307.3 536.9L1300.1 535.2L1293.7 532.9L1288.4 530.1L1284.4 526.9L1281.8 523.4L1280.8 519.8L1281.3 516.1L1283.6 511.9L1278.3 518.2Z" fill="rgb(177, 179, 184)"/><path d="M1283.4 512.3L1278.4 518.2L1276 522.4L1281.2 516.1ZM1275.4 526.5L1276.6 530.7L1281.8 523.5L1280.7 519.7ZM1279.5 534.7L1284.1 538.3L1288.5 543.5L1293.9 546.4L1290.2 541.5L1297.3 544.1L1300.1 548.6L1307.4 550.2L1305.5 545.9L1314.2 547L1315.1 551.2L1323.1 551.4L1323.3 547.3L1332.2 546.7L1331 550.9L1338.7 549.7L1340.9 545.4L1348.7 543.3L1345.5 547.9L1351.7 545.4L1355.6 540.5L1361 537.3L1356.4 542.5L1360.1 539.1L1365.3 533.3L1367.6 529.3L1362.4 522.2L1360.3 525.9L1365.1 533.4L1361.2 537.1L1356.7 529.2L1351.8 532.2L1355.6 540.5L1348.8 543.2L1345.7 534.6L1338.7 536.5L1340.9 545.3L1332.3 546.7L1331.1 537.7L1323.1 538.2L1323.2 547.2L1314.2 547L1315.1 537.9L1307.2 536.9L1305.4 545.9L1297.3 544L1300.1 535.3L1293.6 533L1290.1 541.4L1284.1 538.3L1288.4 530.2L1284.3 527ZM1362.9 518.5L1368.2 525.2L1368.2 525.2L1367 520.9L1361.8 514.7Z" fill="#000" fill-opacity="0.350"/><path d="M1283.9 538.4L1290.1 541.6L1297.3 544.2L1305.5 546L1314.3 547.1L1315.2 537.8L1307.3 536.9L1300.1 535.2L1293.7 532.9L1288.4 530.1L1284.3 526.8L1279.4 534.7Z" fill="#000" fill-opacity="0.04"/><path d="M1276.5 530.7L1279.6 534.9L1284.5 527L1281.8 523.4L1280.7 519.5L1275.3 526.5ZM1323.4 547.4L1332.4 546.8L1331.2 537.6L1323.1 538.1L1314.9 537.8L1314.1 547.1Z" fill="#000" fill-opacity="0.07"/><path d="M1275.3 526.9L1280.8 519.8L1281.4 515.6L1275.9 522.2ZM1341 545.5L1338.8 536.4L1331 537.6L1332.2 546.9Z" fill="#000" fill-opacity="0.10"/><path d="M1275.7 522.7L1281.3 516.1L1283.7 512L1278.3 518.2ZM1348.9 543.3L1345.8 534.5L1338.6 536.4L1340.8 545.5Z" fill="#000" fill-opacity="0.14"/><path d="M1348.7 543.4L1355.8 540.5L1351.9 532L1345.6 534.6Z" fill="#000" fill-opacity="0.17"/><path d="M1355.6 540.7L1361.3 537.2L1356.8 529L1351.6 532.1Z" fill="#000" fill-opacity="0.21"/><path d="M1361.1 537.3L1365.3 533.4L1360.3 525.7L1356.6 529.2Z" fill="#000" fill-opacity="0.25"/><path d="M1365.2 533.6L1367.7 529.3L1362.4 522L1360.1 525.9Z" fill="#000" fill-opacity="0.29"/><path d="M1288.4 543.6L1294.2 546.6L1300.4 548.8L1307.6 550.4L1315.2 551.3L1323 551.5L1331.1 551L1338.7 549.8L1345.3 548.1L1351.2 545.8L1356.2 543L1360.2 539.2L1365.7 533L1361.1 537L1355.6 540.4L1348.7 543.1L1340.9 545.2L1332.3 546.6L1323.3 547.1L1314.2 546.9L1305.4 545.8L1297.3 543.9L1290.1 541.4L1284.1 538.2L1279.2 534.2L1284.4 540.3ZM1367.1 520.8L1364.2 516.9L1358.8 510.9L1361.8 514.9L1362.8 518.5L1362.3 522.3L1367.6 529.6L1368.2 525.4L1368.4 525.6Z" fill="#000" fill-opacity="0.33"/><path d="M1270 425.9L1266.7 429.3L1261.1 437.3L1258.8 441.6L1255.6 449L1253.2 457.4L1252.3 462.9L1251.8 471.5L1252.2 477.6L1253.5 485.5L1256.4 494.7L1259.4 501.3L1262.3 506.1L1264.4 509.2L1269.4 515.2L1274.3 520L1277.3 522.4L1285.4 527.7L1291.3 530.6L1298.7 533.2L1303.4 534.4L1309.8 535.3L1317.3 535.8L1323.6 535.4L1330.2 534.4L1333.3 533.7L1341.5 530.9L1347.5 528L1350.8 526.1L1355.4 523L1361.8 517.6L1367.6 511.3L1372.2 504.8L1374.5 500.5L1376.1 497.1L1378.4 491.4L1380.5 483.6L1381.4 477.6L1381.7 469.5L1381.3 463.4L1379.9 455L1377.4 447.4L1375.1 442.1L1371.7 436L1369.6 432.9L1365 427.2L1359.7 422L1357.3 419.9L1349.2 414.4L1343.3 411.5L1335.9 408.7L1329.8 407.2L1324.4 406.3L1318.5 405.9L1311.9 406L1302.8 407.4L1299.1 408.3L1292.7 410.5L1289.2 412L1282.3 415.8L1275.6 420.6Z" fill="rgb(177, 179, 184)"/><path d="M1268.3 428.4L1265 432.1L1266.6 429.8L1261.4 437L1264.5 432.7L1263.4 435.3L1262.7 438L1259.6 442.5L1256.9 447.4L1257.6 444.4L1255.5 449.5L1253.3 457.9L1252.4 463.3L1251.9 472.3L1252.4 475.4L1252.7 480.6L1253.7 486L1254.8 489.3L1256.3 492.3L1257.7 497L1259.8 501.7L1261.7 504.7L1264 507.3L1266.2 511.1L1269 514.7L1271.5 517.2L1274.2 519.3L1276.9 521.9L1282.3 525.7L1285.1 527.4L1282.6 525.6L1280.7 523.6L1284.3 525.5L1288.1 527.2L1289.2 528.9L1290.8 530.2L1298.1 532.9L1303.9 534.4L1311.1 535.3L1312.6 534.8L1313.9 533.7L1318.1 534L1322.3 534.1L1320.2 535.1L1317.7 535.7L1321 535.5L1324.2 535.2L1327.6 534.7L1330.5 533.5L1334.1 532.9L1337.1 532.2L1333.7 533.4L1341.1 531L1338.1 531.9L1341.5 530.1L1344.8 527.7L1348.4 526.5L1351.6 525.1L1347.9 527.7L1350.8 526L1355 523.2L1352.1 524.8L1355.6 521.7L1358.7 518.1L1361.9 516.3L1364.6 514.3L1361.2 518L1367.2 511.6L1365 513.8L1367.9 509.7L1370.3 505.1L1372.7 502.8L1374.7 499.9L1376.8 494.7L1378.3 489.6L1379.6 486.8L1380.4 483.6L1381.3 478L1381.7 469.5L1381.3 464.2L1379.8 455.4L1380.3 458.6L1380.2 461.4L1378.6 456.1L1376.4 450.9L1376.6 448.4L1376.2 445.7L1378.4 450.6L1377.3 447.5L1375.2 442.6L1376 445.3L1373.3 440.7L1370.1 436.4L1369.4 434.2L1368.3 431.9L1371.3 435.7L1369.5 433L1366.5 429.1L1367.9 431.4L1364.5 427.9L1360.5 424.9L1359.4 423.1L1357.9 421.3L1361.3 423.8L1364.6 427L1359.1 421.6L1356.7 419.7L1351.4 415.9L1348.6 414.3L1345.8 413.1L1343 412.6L1339.1 410.7L1341 410.8L1342.9 411.4L1338.1 409.6L1335.5 408.7L1334.5 409L1329.8 407.8L1329.7 407.2L1326.6 406.7L1323.6 406.3L1324.9 407.1L1320.4 406.9L1318.2 406.1L1315.7 405.9L1312.3 406.1L1309.2 406.4L1312.7 406.5L1315.8 407.2L1312.1 407.9L1308 407.4L1304 407.5L1306.6 406.8L1302.8 407.5L1299.6 408.3L1303.3 407.6L1301.1 408.4L1299 409.3L1294.4 410.3L1289.8 411.8L1287.1 413.4L1285.1 414.9L1280.6 417.3L1276.2 420.3L1274 422.5L1272.5 424.7ZM1322.6 534L1324.8 532.3L1326.8 530.1L1331.6 529.9L1336.2 529.4L1333.5 531.7L1330.5 533.5L1326.6 533.9ZM1321.8 529.9L1316.8 529.5L1318.2 526.6L1319.6 523.2L1325.2 523.7L1330.8 523.8L1328.8 527.1L1326.8 530ZM1319.5 523.2L1313.8 522.5L1308.1 521.5L1310.1 513.1L1316.2 514.1L1322.3 514.9ZM1322.3 514.8L1324.9 504.8L1331 505.3L1337 505.4L1335.7 510.6L1334.2 515.4L1328.3 515.3ZM1318.6 504L1312.4 502.9L1314.9 491.6L1320.9 492.7L1327 493.5L1324.8 504.8ZM1317.4 479.5L1319.9 467.1L1325.1 468L1330.2 468.6L1328.9 481.2L1323.2 480.5ZM1322.3 454.7L1324.5 443.1L1331.4 444.1L1331.1 456L1326.7 455.5ZM1324.5 443L1317.7 441.3L1321.7 431.3L1326.4 432.4ZM1325.5 422.7L1321.7 431.2L1317.3 429.6L1320.3 425.5L1323.2 421.9ZM1323.2 421.8L1321.2 420.8L1325.1 418.2L1328.8 416.1L1326.1 418.6ZM1324.2 417.5L1319.4 419.6L1318 418.4L1323.5 416.9L1328.6 416ZM1323 416.2L1317 417.1L1316.5 415.8L1322.8 415.6L1328.5 415.9ZM1328.4 415.8L1322.7 414.9L1316.4 414.5L1316.8 413.4L1322.9 414.4ZM1328.5 415.7L1323.4 413.8L1317.7 412.3L1319 411.5L1324 413.4ZM1328.7 415.7L1324.9 413.1L1320.7 410.8L1322.6 410.4L1325.8 412.9ZM1324.8 410.2L1322.6 410.4L1319.4 408.5L1316.1 407.2L1320.3 406.9L1322.6 408.3ZM1324.9 410.3L1327.2 410.4L1328.1 412.9L1328.9 415.8L1327 412.8ZM1326.2 408.5L1325.1 407.1L1329.7 407.8L1329.6 410.7L1327.2 410.3ZM1300.6 531.3L1305 532.3L1304.2 534.2L1297.4 532.5L1296.8 531.6L1296.4 530.2ZM1288.1 527.1L1287.1 524.8L1286.4 522L1291.2 523.8L1296.1 525.4L1296.1 528L1296.3 530.1L1292.1 528.7ZM1296.7 518.7L1302.3 520.2L1308 521.5L1306.3 528L1301.2 526.8L1296.1 525.4ZM1285.9 514.7L1286.1 510.5L1286.6 505.9L1292.2 508.1L1298 510L1296.6 518.6L1291.2 516.8ZM1289.8 490.1L1291.3 484.5L1297 486.7L1302.7 488.6L1300 499.8L1294.1 497.8L1288.4 495.6ZM1295.2 472.7L1291.3 484.4L1286 482L1281 479.3L1283.1 473.7L1285.5 468L1290.2 470.5ZM1300 461L1304.7 462.8L1309.6 464.5L1306 476.6L1300.5 474.8L1295.3 472.7ZM1294.4 451.2L1297.9 445.9L1301.4 447.8L1305.3 449.6L1299.9 460.9L1295.4 458.9L1291.2 456.6ZM1291.5 441.7L1295.8 437.1L1300.3 432.8L1302.6 434.5L1305.2 436.1L1301.5 440.9L1297.9 445.8L1294.5 443.8ZM1301.5 425.9L1306.9 422.9L1309.6 425.4L1304.9 428.9L1300.3 432.8L1298.1 431L1296.3 429.2ZM1291.2 432.9L1286.3 437.1L1284.4 434.7L1282.8 432.4L1287.9 428.7L1293.4 425.5L1294.6 427.3L1296.2 429.2ZM1291.9 421.7L1297.8 419.5L1303.9 417.8L1304.3 419L1304.9 420.3L1299.1 422.6L1293.4 425.4L1292.5 423.6ZM1297.6 416.4L1291.7 418L1292.1 416.4L1292.8 414.8L1298.6 413.6L1304.5 413L1304 414.1L1303.7 415.2ZM1287.3 416.4L1282.1 418.7L1283.4 416.8L1285.1 415L1290.1 413.1L1295.2 411.9L1293.8 413.3L1292.8 414.7ZM1299 409.4L1303.8 409L1308.7 409.2L1306.3 410.9L1300.8 411L1295.4 411.8L1297 410.5ZM1273.6 515.2L1277.6 517.6L1278.8 520.7L1280.5 523.4L1277.3 521.4L1274.2 519.3L1271.9 516.2L1270.1 512.8ZM1280.8 512.4L1285.8 514.7L1286 518.5L1286.4 521.9L1281.9 519.8L1277.6 517.6L1276.7 514L1276.1 510ZM1267.3 499.8L1267.3 495L1271.5 498L1276.1 500.8L1275.9 505.5L1276.1 509.9L1271.7 507.2L1267.8 504.4ZM1282.9 493.1L1288.4 495.6L1287.3 500.8L1286.5 505.8L1281.2 503.4L1276.2 500.7L1276.8 495.7L1277.8 490.5ZM1270.2 479.1L1272.1 473.6L1276.3 476.6L1280.9 479.4L1279.2 484.9L1277.8 490.4L1273.1 487.5L1268.8 484.5ZM1274.3 468L1272 473.5L1268.3 470.4L1265 467.2L1267.5 461.8L1270.4 456.5L1273.5 459.6L1277 462.5ZM1273.8 451.3L1270.4 456.4L1267.8 453.4L1265.7 450.3L1269.3 445.4L1273.4 440.8L1275.3 443.6L1277.6 446.3ZM1275.7 431.2L1280.7 427.6L1281.5 430L1282.7 432.4L1277.9 436.3L1273.4 440.7L1272 437.9L1271.1 435.1ZM1275.4 426.1L1270.8 429.6L1271.4 427.1L1272.5 424.7L1277.1 421.5L1281.9 418.8L1281 420.9L1280.5 423ZM1254.7 467.9L1256.4 471.3L1255.5 476.6L1255.2 481.9L1253.6 478.7L1252.5 475.4L1252.8 470L1253.6 464.7ZM1262.1 463.9L1264.9 467.2L1263 472.6L1261.5 478L1258.7 474.7L1256.4 471.3L1257.9 465.9L1260 460.7ZM1256.7 450.8L1257.2 454L1255.1 459.1L1253.6 464.4L1253.2 461.2L1253.3 458L1254.8 452.7L1256.8 447.7ZM1264.1 447.2L1265.6 450.3L1262.5 455.3L1259.9 460.5L1258.3 457.3L1257.2 454L1259.9 448.9L1263.1 444.1ZM1270.6 432.4L1271 435.1L1266.8 439.4L1263.1 444L1262.7 441L1262.8 438L1266.5 433.7L1270.7 429.8ZM1257.4 485.3L1260.2 488.6L1260.3 493.6L1261 498.4L1258.5 495.4L1256.4 492.3L1255.5 487.2L1255.2 482.1ZM1264.8 481.3L1268.7 484.5L1267.7 489.8L1267.3 494.9L1263.5 491.8L1260.2 488.6L1260.6 483.4L1261.5 478.1ZM1264.2 501.6L1267.7 504.5L1268.6 508.7L1270 512.6L1266.9 510L1264.1 507.3L1262.3 503L1261.1 498.6ZM1287.2 454.3L1291.1 456.7L1288.2 462.2L1285.4 467.9L1281.1 465.2L1277.1 462.5L1280.2 457L1283.6 451.8ZM1291.6 419.9L1291.8 421.7L1286.2 424.4L1280.8 427.5L1280.4 425.3L1280.5 423L1285.9 420.3L1291.6 418.1ZM1288.7 439.5L1291.4 441.7L1287.4 446.6L1283.6 451.7L1280.4 449L1277.7 446.3L1281.8 441.6L1286.3 437.2ZM1312.4 420.4L1306.9 422.8L1305 420.3L1311 418.5L1317 417.1L1317.9 418.4ZM1310.1 416.5L1303.9 417.7L1303.7 416.5L1303.8 415.3L1310 414.6L1316.4 414.5L1316.4 415.7ZM1310.6 412.8L1304.6 412.9L1305.3 411.9L1306.3 410.9L1311.9 411.3L1317.6 412.3L1316.8 413.3ZM1313.9 410L1308.9 409.2L1312.1 408L1316.3 409.1L1320.5 410.8L1318.9 411.4ZM1305.1 532.3L1306.3 528L1311.5 528.9L1316.7 529.6L1315.2 531.9L1313.8 533.6L1309.5 533.1ZM1298 510L1300.1 499.9L1306.2 501.6L1312.3 503L1310 513L1304 511.6ZM1302.8 488.5L1306 476.7L1311.7 478.2L1317.3 479.5L1314.8 491.6L1308.8 490.2ZM1313.6 452.6L1317.9 453.8L1322.3 454.8L1319.9 467L1314.7 465.8L1309.7 464.4ZM1305.4 449.5L1311.2 439L1317.6 441.3L1313.6 452.5L1309.4 451.1ZM1309.2 431.7L1313.2 427.7L1317.2 429.6L1314.1 434.1L1311.2 438.9L1305.3 436.1ZM1314.5 422.3L1319.4 419.7L1321.1 420.8L1317.1 424L1313.2 427.6L1309.7 425.4ZM1336.4 529.3L1339 526.4L1341.3 523.1L1346.1 522.3L1350.7 521.2L1347.9 524.6L1344.7 527.7L1340.7 528.6ZM1330.9 523.7L1332.6 519.8L1334.3 515.4L1339.9 515.2L1345.4 514.7L1343.5 519.1L1341.3 523L1336.2 523.5ZM1347.1 509.9L1348.4 504.6L1353.6 503.8L1358.5 502.6L1357.2 507.8L1355.4 512.6L1350.6 513.8L1345.5 514.6ZM1338.1 499.9L1339 494L1344.7 493.8L1350.2 493.3L1349.4 499.1L1348.4 504.6L1342.8 505.1L1337.1 505.3ZM1340.4 475.5L1340.4 469.1L1345.3 468.9L1349.8 468.5L1350.4 474.8L1350.6 481L1345.5 481.5L1340.2 481.7ZM1339.1 450.4L1338.2 444.4L1344.5 444L1346.3 449.8L1347.8 455.9L1343.8 456.3L1339.8 456.4ZM1342.5 438.4L1340.2 433.1L1344.1 432.3L1347.2 437.4L1350.1 442.8L1347.4 443.5L1344.5 443.9ZM1340.7 427.5L1337 423.2L1338.6 422.6L1343.1 426.6L1347.3 431L1344.1 432.2ZM1345.1 425.3L1339.9 421.7L1340.8 420.7L1346.3 423.8L1351.6 427.3L1350.8 428.3L1349.9 429.3ZM1335 418L1329.6 416.1L1335.2 417.5L1341.1 419.5L1341 420.1L1340.8 420.6ZM1341.2 419.5L1341.1 418.3L1346.8 420.1L1352.2 422.5L1352.4 423.8L1352.4 424.9L1346.9 422ZM1335.2 416.8L1329.6 416L1334.9 416.2L1340.5 416.9L1341.1 418.2ZM1346 418.1L1340.6 416.9L1339.6 415.6L1344.5 416.2L1349.2 417.4L1351.1 419.9ZM1342.4 414.3L1338.2 414.3L1336.5 413.2L1339.8 412.6L1343 412.6L1346.4 414.8ZM1331.5 444L1331.2 433.2L1335.8 433.4L1337.1 438.7L1338.1 444.4ZM1326.4 432.4L1327.9 423.3L1330.3 423.7L1331.1 433.1ZM1329.8 419.6L1329.1 416.1L1330.9 419.6L1332.7 423.7L1330.4 423.6ZM1332.1 419.5L1329.3 416.2L1333 419.3L1336.9 423.2L1335 423.6ZM1333.9 419L1329.5 416.2L1334.5 418.6L1339.8 421.7L1338.6 422.5ZM1334.3 415.5L1329.4 415.9L1333.7 414.9L1338.1 414.3L1339.5 415.5ZM1336.3 413.2L1332.7 414.3L1329.2 415.8L1331.8 413.8L1334.3 412.2ZM1334.3 412.1L1332.1 411.3L1333.4 409.9L1334.5 409L1338.9 410.6L1336.6 411.1ZM1332 411.3L1330.5 413.4L1329.1 415.8L1329.7 410.8ZM1327.9 423.2L1325.6 422.6L1329 416.1L1328.5 419.3ZM1330.3 468.6L1331.2 456.1L1335.5 456.4L1339.7 456.5L1340.1 462.7L1340.4 469L1335.4 468.9ZM1327.1 493.4L1328.9 481.3L1334.6 481.7L1340.1 481.8L1339.7 488L1339 494L1333.1 493.9ZM1332.8 423.8L1334.9 423.6L1337.6 428.1L1340.1 433L1335.8 433.3L1334.4 428.4ZM1353.3 517.1L1355.4 512.7L1359.8 511.2L1363.7 509.5L1361.4 514L1358.6 518.1L1354.9 519.7L1350.8 521.1ZM1359.6 497L1360.2 491.3L1364.6 489.8L1368.5 488.1L1368.1 493.7L1367.1 499.2L1363.1 501L1358.6 502.5ZM1350.6 487.3L1350.7 481.1L1355.5 480.3L1360.1 479.2L1360.3 485.3L1360.1 491.2L1355.3 492.4L1350.2 493.2ZM1359.4 472.9L1358.4 466.7L1362.1 465.5L1365.4 464L1366.9 470L1368 476.1L1364.2 477.7L1360.1 479.1ZM1352.8 448.6L1350.2 442.8L1352.7 442L1354.9 441L1358.2 446.5L1361 452.1L1358.2 453.4L1355 454.4ZM1362.4 443.6L1358.7 438.6L1360 437.2L1361.1 435.7L1365.2 440.3L1368.8 445.3L1367.5 447.2L1365.7 449ZM1356.6 431.2L1351.6 427.3L1352.1 426.2L1352.4 425L1357.5 428.5L1362.2 432.3L1361.8 434L1361.1 435.6ZM1362.4 430.5L1362.1 428.7L1366.3 432.4L1370.1 436.4L1370.4 438.8L1370.3 441L1366.5 436.4L1362.3 432.3ZM1357.4 425.3L1352.3 422.5L1351.9 421.3L1351.3 420L1356 422.2L1360.5 424.9L1361.4 426.8L1362 428.6ZM1351.3 435.8L1347.4 431L1349.9 429.4L1354.4 433.8L1358.6 438.6L1356.9 439.8L1354.9 441ZM1353.5 418.9L1349.3 417.3L1346.6 414.9L1350.2 416L1353.6 417.6L1355.8 419.4L1357.5 421ZM1356.8 460.5L1358.3 466.7L1354.2 467.7L1349.9 468.4L1349 462.2L1347.8 455.9L1351.6 455.3L1355 454.5ZM1363.5 458L1361.1 452.1L1363.6 450.7L1365.7 449.1L1368.6 454.6L1370.9 460.3L1368.4 462.2L1365.5 463.9ZM1373.1 458.2L1374.7 456L1376.7 461.5L1378.2 467.2L1376.4 469.7L1374.2 472L1372.8 466.1L1371 460.4ZM1379.5 464.5L1380.2 461.7L1381.1 467.1L1381.5 472.6L1380.7 475.6L1379.5 478.4L1379.2 472.8L1378.3 467.2ZM1369.9 443.2L1370.4 441.1L1373.6 445.9L1376.4 450.9L1375.8 453.5L1374.7 455.9L1372.1 450.5L1368.9 445.3ZM1368.6 482.1L1368 476.1L1371.3 474.3L1374.1 472.1L1374.9 477.9L1375.1 483.7L1372.1 486L1368.6 488ZM1377.6 481.2L1379.4 478.6L1379.1 484.1L1378.2 489.6L1376.3 492.3L1373.8 494.8L1374.8 489.3L1375.1 483.7ZM1373.7 495L1372.3 500.1L1370.3 505.1L1367.3 507.4L1363.9 509.4L1365.8 504.4L1367.2 499.3L1370.7 497.3Z" fill="#000" fill-opacity="0.350"/><path d="M1277 421.4L1272.4 424.6L1271.3 427.1L1267.1 430.9L1266.4 433.6L1262.7 438L1262.5 441.3L1263 444L1259.8 448.9L1260.9 452.4L1264.6 458.6L1262 463.9L1268.3 470.6L1276.1 476.6L1281 479.5L1283.1 473.8L1293.2 478.8L1295.3 472.9L1306.1 476.8L1307.9 470.7L1313.3 472.2L1314.8 466L1320 467.2L1321.2 461L1326.1 461.8L1326.8 455.6L1331.2 456.2L1331.5 450.1L1335.4 450.4L1335 444.5L1338.3 444.5L1336 433.5L1338.2 433.4L1334 423.8L1335.2 423.7L1329.5 416.3L1329.4 415.5L1328.6 415.6L1320.1 411.1L1315 409.4L1313.8 409.9L1309.2 409.1L1303.8 408.9L1302.1 409.9L1296.9 410.4L1295.2 411.7L1290.5 412.8L1285.1 414.9L1283.3 416.7L1278.5 419.3ZM1305.3 449.4L1302.5 455L1298.3 453.1L1295.4 458.7L1287.2 454.1L1283.9 459.5L1276.8 454.1L1271.5 448.4L1275.4 443.6L1272.1 437.9L1276.7 433.8L1275.8 431.2L1280.9 427.6L1280.5 425.3L1285.9 422.4L1291.6 420L1303.6 416.6L1304.2 419.2L1310.4 417.6L1313.2 421.3L1318.5 424.8L1314.9 428.7L1319.2 430.5L1316.7 435.2L1319.5 436.2L1315.5 446.7L1311.8 445.4L1309.3 451Z" fill="#000" fill-opacity="0.04"/><path d="M1282.8 415.5L1275.6 420.6L1266.4 429.8L1261.4 436.8L1259.9 440.2L1259.4 442.6L1256.7 447.5L1256.6 450.7L1254.5 455.9L1255.1 459.7L1257.8 465.9L1256.3 471.3L1261.4 478.1L1268.8 484.7L1277.9 490.6L1279.3 485.1L1289.6 490.2L1295.5 492.5L1297 486.8L1308.8 490.4L1310.3 484.4L1316.2 485.8L1317.5 479.6L1323.2 480.6L1324.3 474.4L1335.2 475.5L1335.5 469.1L1340.5 469.2L1340.3 462.8L1344.8 462.7L1344 456.4L1347.9 456L1346.4 449.9L1349.8 449.4L1347.6 443.6L1350.4 442.9L1347.4 437.5L1351.5 435.9L1347.5 431.1L1350.1 429.3L1345.2 425.3L1346.5 423.7L1347.1 421.9L1341.3 419.4L1340.8 417L1339.2 415L1335.7 412.6L1332.3 411.3L1333.6 409.8L1326.2 408.3L1325.1 407L1318.1 406.8L1315.3 406.1L1305.9 406.9L1299.7 408.1L1292.7 410.5ZM1314.6 465.7L1313.1 471.9L1307.7 470.4L1305.9 476.5L1295.2 472.6L1293.1 478.4L1283 473.5L1280.9 479.2L1272.1 473.4L1268.3 470.3L1262.3 463.9L1264.9 458.6L1262.7 455.3L1260 448.9L1263.2 444.1L1262.9 438.1L1266.6 433.7L1267.3 431L1271.5 427.2L1272.6 424.8L1277.1 421.6L1278.6 419.4L1283.4 416.9L1285.2 415.1L1290.1 413.2L1295.3 411.9L1297 410.6L1302.2 410.1L1303.9 409.1L1313.9 410.2L1315.1 409.6L1319.7 411.2L1328.4 415.7L1328.6 416.3L1329.3 416.5L1332 419.6L1334.7 423.5L1333.7 423.6L1337.9 433.1L1335.7 433.2L1338 444.3L1334.7 444.2L1335.1 450.1L1331.2 449.8L1331 455.9L1326.6 455.4L1325.8 461.5L1321 460.7L1319.8 466.9Z" fill="#000" fill-opacity="0.07"/><path d="M1261.2 437.4L1255.6 449L1253 458.6L1252.1 466.7L1252.7 470.6L1253.9 473.8L1257.6 480.1L1257.3 485.4L1263.6 492.1L1271.4 498L1276.3 501L1276.9 495.9L1287.2 500.9L1293.1 503.3L1294.2 498L1306.2 501.7L1307.5 496.1L1319.9 498.6L1321.1 492.8L1327.2 493.6L1328.1 487.5L1334 488L1334.7 481.8L1340.3 481.9L1340.5 475.5L1350.6 474.9L1350 468.5L1354.4 467.8L1353.2 461.6L1357 460.6L1355.1 454.5L1358.3 453.5L1355.8 447.6L1360.6 445.2L1357.1 439.9L1360.2 437.2L1355.8 432.6L1357.2 430.1L1357.7 426.9L1352.6 423.7L1352.1 421.4L1350.7 418.9L1346.9 415.1L1341.5 411.6L1334.9 409L1335.9 408.7L1332.6 407.8L1326.3 406.6L1318.5 405.9L1308.8 406.3L1315.3 406.3L1318.1 407.1L1324.9 407.2L1326.1 408.5L1333.1 409.9L1331.8 411.4L1335.3 412.7L1338.8 415L1340.8 417.6L1341 419.6L1346.8 422.1L1346.2 423.7L1344.9 425.3L1349.7 429.3L1347.2 431L1351.1 435.8L1347.1 437.3L1350 442.7L1347.3 443.4L1349.5 449.2L1346.1 449.7L1347.6 455.8L1343.7 456.2L1344.5 462.4L1340.1 462.6L1340.3 468.9L1335.3 468.8L1335 475.2L1324.1 474.1L1323 480.4L1317.3 479.4L1316 485.5L1310.1 484.1L1308.7 490.1L1296.8 486.5L1295.3 492.2L1284.4 487.5L1279.1 484.8L1277.7 490.2L1268.8 484.4L1265 481.2L1261.6 478L1256.5 471.3L1258 465.9L1256.3 462.5L1254.8 455.9L1256.9 450.8L1257 447.6L1259.7 442.7L1261.6 437L1266.9 429.5ZM1307 406.7L1299.2 408.5L1307.1 406.9Z" fill="#000" fill-opacity="0.10"/><path d="M1252.3 462.9L1251.8 472.7L1252.7 480.8L1253.9 484.6L1255.6 487.8L1257.8 490.9L1263.4 496.9L1271.5 503L1280.7 508.2L1286.2 510.6L1286.7 506L1297.9 510.1L1304.1 511.8L1305.1 506.9L1317.5 509.4L1318.7 504.2L1324.9 504.9L1326.1 499.4L1332.2 499.8L1333.2 494L1344.8 493.9L1345.4 487.9L1350.7 487.3L1350.8 481.1L1355.7 480.3L1355.2 474.1L1359.6 473L1358.5 466.8L1365.6 464.1L1363.6 458.1L1366.4 456.5L1363.7 450.7L1367.7 447.3L1364.1 442.1L1366.1 438.7L1366.7 436.4L1362.4 432.2L1362.3 429L1361.8 427.1L1359.7 423.4L1355.9 419.2L1351 416.5L1354.2 417.8L1349.2 414.4L1343.3 411.5L1335.5 408.6L1334.1 409L1341 411.7L1346.4 415L1349.2 417.4L1351.1 420L1352.3 423.8L1357.5 427L1357.1 429.8L1355.5 432.6L1359.8 437.1L1356.8 439.8L1360.3 445.1L1355.5 447.5L1358 453.3L1354.8 454.4L1356.7 460.5L1352.9 461.4L1354.1 467.6L1349.7 468.3L1350.3 474.6L1340.3 475.3L1340 481.6L1334.5 481.5L1333.8 487.7L1327.9 487.3L1327 493.3L1320.9 492.6L1319.7 498.4L1307.3 495.9L1306.1 501.4L1294 497.7L1292.9 502.9L1282 498.3L1276.7 495.5L1276.1 500.6L1267.4 494.8L1263.6 491.7L1257.5 485.3L1257.9 480L1255.6 476.6L1252.8 469.9L1252.4 466.7L1253.4 457.4Z" fill="#000" fill-opacity="0.14"/><path d="M1252.8 481.4L1253.6 486.1L1256.2 494.2L1260 500.7L1262.5 503.5L1268.8 509.1L1276.5 514.1L1281.3 516.6L1281 512.6L1291 516.9L1296.8 518.8L1297.3 514.7L1309.1 517.6L1310.2 513.2L1322.4 515L1323.7 510.1L1329.8 510.6L1331.1 505.4L1342.9 505.3L1344 499.7L1349.6 499.2L1350.3 493.4L1355.5 492.5L1355.8 486.5L1360.5 485.3L1360.2 479.2L1368.1 476.2L1367.1 470.1L1370.3 468.3L1368.6 462.3L1373.2 458.3L1370.7 452.7L1373.2 448.2L1370 443.2L1370.6 439.1L1370.2 436.4L1366.4 432.3L1365 428.5L1361.8 424.1L1357.3 419.9L1350.8 415.4L1352.5 416.9L1349.7 415.6L1352 417.6L1355.7 419.4L1359.2 423.1L1361.9 428.7L1362.1 432.3L1366.4 436.5L1365.1 440.2L1363.8 442.1L1367.4 447.2L1363.4 450.6L1366.1 456.4L1363.3 457.9L1365.3 463.9L1358.2 466.6L1359.3 472.8L1355 473.9L1355.4 480.1L1350.6 480.9L1350.5 487.1L1345.2 487.6L1344.6 493.7L1333 493.8L1332 499.6L1325.9 499.1L1324.8 504.7L1318.5 503.9L1317.3 509.1L1304.9 506.6L1303.9 511.5L1292.2 507.9L1286.4 505.7L1286 510.3L1276 505.4L1271.5 502.6L1267.3 499.7L1260.4 493.6L1257.7 490.4L1254 483.9L1252.9 480.7L1252 471.5Z" fill="#000" fill-opacity="0.17"/><path d="M1256.4 494.7L1260 502.3L1261.9 505.1L1266.7 510.1L1268.8 513.8L1272.3 516.7L1270.4 513.1L1281.8 519.9L1291.3 523.9L1291.2 520.7L1307.2 525.1L1308.1 521.6L1319.6 523.3L1321 519.4L1326.9 519.8L1328.4 515.4L1340 515.3L1341.6 510.5L1347.2 509.9L1348.5 504.7L1353.8 503.8L1354.8 498.3L1359.7 497.1L1360.3 491.3L1368.7 488.1L1368.7 482.2L1372.1 480.2L1371.4 474.2L1376.6 469.7L1375.2 464L1378.1 458.9L1375.9 453.5L1376.5 451.4L1376.6 448.2L1373.9 443.3L1372.9 438.7L1371.7 436L1365 427.2L1358.8 421.2L1364.5 428.1L1366.2 432.4L1370 436.5L1370.2 441L1369.7 443.2L1373 448.3L1370.4 452.6L1372.9 458.2L1368.3 462.2L1370 468.2L1366.8 470L1367.9 476L1360 479.1L1360.2 485.2L1355.5 486.3L1355.2 492.3L1350.1 493.2L1349.3 499L1343.8 499.5L1342.7 505L1330.9 505.1L1329.6 510.3L1323.5 509.9L1322.2 514.7L1310 512.9L1308.9 517.3L1297.1 514.4L1296.6 518.5L1285.9 514.6L1280.7 512.2L1281 516.1L1272.5 511.3L1268.7 508.6L1262.4 503L1257.9 497L1256.4 494.1L1253.7 485.4Z" fill="#000" fill-opacity="0.21"/><path d="M1264.4 509.2L1269.4 515.2L1274.3 520L1282.3 525.8L1288.3 529.2L1294.5 531.8L1306.3 534.9L1313.9 535.7L1320.5 535.7L1331.4 534.1L1341.5 530.9L1348.6 527.4L1354.5 523.7L1363.6 515.7L1367.6 511.3L1372.2 504.8L1375.1 499.5L1378.4 491.4L1380.5 483.6L1381.4 477.6L1381.7 469.5L1381.3 463.4L1379.9 455L1375.6 443.2L1371 435L1373.3 440.9L1373.6 443.4L1376.4 448.3L1375.7 453.5L1377.8 458.9L1374.9 463.9L1376.3 469.7L1371.2 474.1L1371.8 480.1L1368.4 482L1368.5 487.9L1360.1 491.1L1359.5 496.9L1354.6 498.1L1353.6 503.6L1348.3 504.5L1347 509.7L1341.4 510.3L1339.9 515.1L1328.3 515.2L1326.8 519.6L1320.9 519.1L1319.5 523.1L1307.9 521.3L1307 524.9L1290.9 520.3L1291 523.6L1277.7 517.5L1269.7 512.3L1271.5 515.7L1269 513.7L1266.9 510L1261.8 504.4L1259.6 501.1Z" fill="#000" fill-opacity="0.25"/><g opacity="0.97"><path d="M1188 533.5L1088.6 490.3L1088.6 794.2L1188 837.4Z" fill="rgb(187, 189, 193)"/><path d="M1088.6 519.6L1088.6 539.3L1105.2 546.5L1105.2 566.1L1088.6 558.9L1088.6 578.5L1105.2 585.7L1105.2 605.3L1088.6 598.1L1088.6 617.8L1105.2 625L1105.2 644.5L1088.6 637.3L1088.6 657L1105.2 664.2L1105.2 683.7L1088.6 676.5L1088.6 696.2L1105.2 703.4L1105.2 723L1088.6 715.8L1088.6 735.4L1105.2 742.6L1105.2 762.2L1088.6 755L1088.6 774.7L1105.2 781.9L1105.2 801.4L1121.8 808.7L1121.8 789.1L1138.3 796.3L1138.3 815.8L1154.9 823.1L1154.9 803.5L1171.4 810.7L1171.4 830.2L1188 837.4L1188 817.8L1171.5 810.6L1171.5 791.1L1188 798.3L1188 778.6L1171.5 771.4L1171.5 751.8L1188 759L1188 739.4L1171.5 732.2L1171.5 712.6L1188 719.8L1188 700.1L1171.5 692.9L1171.5 673.4L1188 680.6L1188 660.9L1171.5 653.7L1171.5 634.2L1188 641.4L1188 621.7L1171.5 614.5L1171.5 594.9L1188 602.1L1188 582.5L1171.5 575.3L1171.5 555.7L1188 562.9L1188 543.2L1171.5 536L1171.5 526.3L1154.9 519L1154.9 528.8L1138.4 521.6L1138.4 511.9L1121.7 504.6L1121.7 514.4L1105.2 507.2L1105.2 497.5L1088.6 490.3L1088.6 500.1L1105.2 507.3L1105.2 526.8ZM1105.2 762.3L1121.7 769.4L1121.7 789L1105.2 781.8ZM1138.3 757L1138.3 776.6L1121.8 769.4L1121.8 749.9ZM1105.2 723L1121.7 730.2L1121.7 749.8L1105.2 742.6ZM1138.3 717.8L1138.3 737.4L1121.8 730.2L1121.8 710.6ZM1105.2 683.8L1121.7 691L1121.7 710.5L1105.2 703.4ZM1138.3 678.6L1138.3 698.1L1121.8 691L1121.8 671.4ZM1105.2 644.6L1121.7 651.8L1121.7 671.3L1105.2 664.1ZM1138.3 639.4L1138.3 658.9L1121.8 651.7L1121.8 632.2ZM1154.9 685.7L1138.4 678.5L1138.4 659L1154.9 666.2ZM1171.4 653.8L1171.4 673.3L1154.9 666.1L1154.9 646.6ZM1138.4 619.8L1154.9 626.9L1154.9 646.5L1138.4 639.3ZM1171.4 614.5L1171.4 634.1L1154.9 626.9L1154.9 607.4ZM1138.4 580.5L1154.9 587.7L1154.9 607.3L1138.4 600.1ZM1171.4 575.3L1171.4 594.9L1154.9 587.7L1154.9 568.1ZM1138.4 541.3L1154.9 548.5L1154.9 568L1138.4 560.9ZM1171.4 536.1L1171.4 555.6L1154.9 548.5L1154.9 528.9ZM1121.7 612.5L1121.7 632.1L1105.2 624.9L1105.2 605.4ZM1138.3 619.7L1121.8 612.5L1121.8 593L1138.3 600.1ZM1121.7 573.3L1121.7 592.9L1105.2 585.7L1105.2 566.1ZM1138.3 580.5L1121.8 573.3L1121.8 553.7L1138.3 560.9ZM1121.7 534.1L1121.7 553.6L1105.2 546.5L1105.2 526.9ZM1138.3 541.2L1121.8 534.1L1121.8 514.5L1138.3 521.7ZM1154.9 783.8L1154.9 803.4L1138.4 796.2L1138.4 776.7ZM1171.4 791L1154.9 783.8L1154.9 764.3L1171.4 771.4ZM1154.9 744.6L1154.9 764.2L1138.4 757L1138.4 737.4ZM1171.4 751.8L1154.9 744.6L1154.9 725L1171.4 732.2ZM1154.9 705.4L1154.9 724.9L1138.4 717.8L1138.4 698.2ZM1171.4 712.5L1154.9 705.4L1154.9 685.8L1171.4 693Z" fill="#000" fill-opacity="0.380"/><path d="M1281.4 791.3L1281.4 487.4L1188 533.5L1188 837.4Z" fill="rgb(200, 201, 205)"/><path d="M1203.6 594.4L1188 602.1L1188 621.7L1203.6 614.1L1203.6 633.6L1188 641.3L1188 661L1203.6 653.3L1203.6 672.8L1188 680.5L1188 700.2L1203.6 692.5L1203.6 712.1L1188 719.7L1188 739.4L1203.6 731.7L1203.6 751.3L1188 759L1188 778.6L1203.6 771L1203.6 790.5L1188 798.2L1188 817.9L1203.6 810.2L1203.6 829.8L1219.2 822.1L1219.2 802.5L1234.7 794.8L1234.7 814.4L1250.3 806.7L1250.3 787.1L1265.8 779.5L1265.8 799L1281.4 791.3L1281.4 771.7L1265.9 779.4L1265.9 759.8L1281.4 752.2L1281.4 732.5L1265.9 740.1L1265.9 720.6L1281.4 712.9L1281.4 693.3L1265.9 700.9L1265.9 681.4L1281.4 673.7L1281.4 654L1265.9 661.7L1265.9 642.2L1281.4 634.5L1281.4 614.8L1265.9 622.5L1265.9 602.9L1281.4 595.3L1281.4 575.6L1265.9 583.2L1265.9 563.7L1281.4 556L1281.4 536.4L1265.9 544L1265.9 524.5L1281.4 516.8L1281.4 497.1L1265.9 504.8L1265.9 495L1250.2 502.7L1250.2 512.5L1234.8 520.2L1234.8 510.4L1219.1 518.1L1219.1 527.9L1203.6 535.5L1203.6 525.8L1188 533.5L1188 543.3L1203.6 535.6L1203.6 555.2L1188 562.8L1188 582.5L1203.6 574.9ZM1203.6 790.6L1219.1 782.9L1219.1 802.4L1203.6 810.1ZM1234.7 755.6L1234.7 775.2L1219.2 782.8L1219.2 763.3ZM1203.6 751.3L1219.1 743.7L1219.1 763.2L1203.6 770.9ZM1234.7 716.4L1234.7 735.9L1219.2 743.6L1219.2 724ZM1203.6 712.1L1219.1 704.5L1219.1 724L1203.6 731.7ZM1234.7 677.2L1234.7 696.7L1219.2 704.4L1219.2 684.8ZM1203.6 672.9L1219.1 665.2L1219.1 684.8L1203.6 692.4ZM1234.7 637.9L1234.7 657.5L1219.2 665.1L1219.2 645.6ZM1250.2 669.4L1234.8 677.1L1234.8 657.5L1250.2 649.9ZM1265.8 622.6L1265.8 642.1L1250.3 649.8L1250.3 630.2ZM1234.8 618.3L1250.2 610.6L1250.2 630.2L1234.8 637.8ZM1265.8 583.3L1265.8 602.9L1250.3 610.5L1250.3 591ZM1234.8 579.1L1250.2 571.4L1250.2 591L1234.8 598.6ZM1265.8 544.1L1265.8 563.7L1250.3 571.3L1250.3 551.8ZM1234.8 539.8L1250.2 532.2L1250.2 551.7L1234.8 559.4ZM1265.8 504.9L1265.8 524.4L1250.3 532.1L1250.3 512.6ZM1219.1 626L1219.1 645.6L1203.6 653.2L1203.6 633.7ZM1234.7 618.3L1219.2 625.9L1219.2 606.4L1234.7 598.7ZM1219.1 586.8L1219.1 606.3L1203.6 614L1203.6 594.4ZM1234.7 579L1219.2 586.7L1219.2 567.1L1234.7 559.5ZM1219.1 547.6L1219.1 567.1L1203.6 574.8L1203.6 555.2ZM1234.7 539.8L1219.2 547.5L1219.2 527.9L1234.7 520.3ZM1250.2 767.5L1250.2 787.1L1234.8 794.7L1234.8 775.2ZM1265.8 759.8L1250.3 767.4L1250.3 747.9L1265.8 740.2ZM1250.2 728.3L1250.2 747.9L1234.8 755.5L1234.8 736ZM1265.8 720.6L1250.3 728.2L1250.3 708.7L1265.8 701ZM1250.2 689.1L1250.2 708.6L1234.8 716.3L1234.8 696.7ZM1265.8 681.3L1250.3 689L1250.3 669.4L1265.8 661.8Z" fill="#000" fill-opacity="0.380"/><path d="M1136.4 443.7L1112.5 465.2L1100.6 476.8L1088.4 490.3L1187.9 533.7L1281.6 487.4L1269.6 474.4L1257.6 463.2L1245.5 452.5L1221.6 432.3L1217.2 428.3L1208.2 419.2L1209.4 422.6L1208.8 425.5L1206.6 428.2L1202.8 430.6L1197.9 432.5L1192.1 433.7L1185.8 434.2L1179.4 433.9L1173.4 432.8L1168.2 431.1L1164.2 428.8L1161.6 426.2L1160.6 423.3L1161.3 420L1148.4 433.4Z" fill="rgb(200, 201, 205)"/><path d="M1152.3 429.3L1148.4 433.6L1160.5 423.3L1161.1 420.3ZM1161.5 426.2L1144.2 448.8L1136.5 443.8L1124.5 454.4L1112.5 465.4L1126.9 472.5L1118.2 485.1L1109.6 499.4L1125 506.1L1131.6 491.1L1138.1 477.9L1148.2 482.5L1143.3 496.2L1138.3 511.9L1151.7 517.7L1155.3 501.4L1158.9 486.9L1171.1 491.7L1169.1 507.1L1167 524.3L1188.1 533.5L1187.3 497.9L1202.5 491.2L1205.1 506.6L1207.8 523.8L1222.2 516.6L1218.2 500.4L1214.2 486.1L1224.1 481.3L1229.4 495L1234.7 510.5L1247.3 504.2L1240.5 489.4L1233.7 476.4L1244.1 470.7L1252.8 483L1261.7 497.1L1281.4 487.4L1269.5 474.4L1257.4 463.2L1244.1 470.7L1235.3 459L1226.5 447.6L1233.5 442.3L1209.5 422.5L1208.9 425.5L1226.4 447.6L1220.2 451.8L1206.6 428.3L1202.9 430.7L1213.5 455.4L1206.1 458.7L1198 432.6L1192.1 433.8L1197.3 461.9L1186.6 465.5L1185.8 434.3L1179.4 434L1175.3 462.3L1166.2 459.4L1173.4 432.9L1168.2 431.2L1158.2 456.3L1151.1 452.8L1164.2 428.9ZM1171.2 491.7L1175.3 462.3L1186.5 465.6L1187.3 497.8ZM1151.1 452.8L1138 477.8L1127 472.4L1135.6 460.5L1144.2 448.8ZM1166.1 459.4L1158.9 486.8L1148.3 482.4L1158.3 456.3ZM1206 458.8L1214.1 486L1202.6 491.2L1197.4 462ZM1224.1 481.3L1213.5 455.5L1220.2 451.8L1233.7 476.4Z" fill="#000" fill-opacity="0.380"/><path d="M1160.6 423.4L1161.3 420L1148 433.8L1148.1 433.9ZM1192.1 433.7L1185.7 434.2L1186.4 465.7L1197.5 462L1194.9 447.9L1202.1 445.7L1198 432.5ZM1109.5 499.4L1167.1 524.5L1169.2 507L1143.4 496.2L1118.2 484.9Z" fill="#000" fill-opacity="0.04"/><path d="M1257.6 463.2L1209.5 422.4L1208.8 425.5L1206.6 428.2L1202.8 430.6L1197.8 432.5L1201.8 445.5L1194.6 447.7L1197.2 461.9L1186.4 465.5L1187.9 533.7L1281.6 487.4L1269.6 474.4Z" fill="#000" fill-opacity="0.07"/><path d="M1209.4 422.6L1222 432.7L1208.2 419.2Z" fill="#000" fill-opacity="0.10"/><path d="M1179.6 412.3L1173.9 411.3L1168.9 409.6L1165.1 407.4L1162.6 404.9L1161.4 401.6L1161.4 417.2L1160.3 423.3L1161.5 426.7L1161.6 426.5L1164.2 429.2L1168.1 431.3L1173.3 433.1L1179.5 434.2L1185.7 434.4L1192 434L1198.1 432.7L1203 430.8L1206.6 428.6L1208.8 425.8L1208.9 426.1L1209.7 422.6L1208.6 416.5L1208.6 400.8L1207.8 404.2L1205.7 406.8L1202.1 409.1L1197.4 410.9L1191.8 412.1L1185.7 412.6Z" fill="rgb(200, 201, 205)"/><path d="M1162.4 404.9L1162.4 419.9L1161.5 417.1L1160.4 423.3L1161.5 426.4L1162.5 420.1L1165 422.7L1164.1 429L1168.2 431.3L1168.9 424.9L1173.9 426.5L1173.4 433L1179.4 434L1179.7 427.5L1185.7 427.8L1185.7 434.3L1192.1 433.8L1191.8 427.3L1197.4 426.2L1197.9 432.6L1202.9 430.7L1202.2 424.4L1205.7 422.1L1206.6 428.4L1208.9 425.5L1207.9 419.4L1208.5 416.5L1208.5 401.3L1207.9 404.3L1207.9 419.4L1205.8 421.9L1205.8 406.9L1202.1 409.2L1202.1 424.3L1197.4 426.1L1197.4 411L1191.8 412.2L1191.8 427.3L1185.8 427.8L1185.8 412.6L1179.6 412.4L1179.6 427.5L1173.9 426.5L1173.9 411.4L1168.9 409.7L1168.9 424.8L1165 422.6L1165 407.5Z" fill="#000" fill-opacity="0.380"/><path d="M1164 429L1168.3 431.4L1173.5 433.1L1179.5 434.2L1185.9 434.4L1185.9 427.7L1179.6 427.4L1173.9 426.4L1168.9 424.7L1165.1 422.5L1162.4 419.8L1161.4 426.3Z" fill="#000" fill-opacity="0.07"/><path d="M1161.5 426.7L1162.6 420.3L1165.1 422.9L1168.8 424.9L1173.8 426.6L1179.8 427.6L1185.6 427.9L1185.7 434.4L1192.2 433.9L1191.9 427.2L1185.9 427.7L1185.9 412.6L1179.6 412.3L1173.9 411.3L1168.9 409.6L1165.1 407.4L1162.6 404.9L1161.4 401.5L1161.4 417.2L1160.3 423.3Z" fill="#000" fill-opacity="0.10"/><path d="M1197.5 410.9L1191.8 412.1L1185.6 412.6L1185.6 427.9L1191.7 427.5L1192 434L1197.8 432.8L1203 430.8L1202.3 424.2L1197.5 426Z" fill="#000" fill-opacity="0.14"/><path d="M1202.1 424.5L1202.8 430.9L1206.8 428.4L1205.8 421.8L1202.3 424.1L1202.3 409.1L1197.3 411L1197.3 426.3Z" fill="#000" fill-opacity="0.17"/><path d="M1208.6 400.8L1207.8 404.2L1205.7 406.8L1202 409.2L1202 424.6L1205.6 422.3L1206.6 428.6L1208.8 425.8L1208.9 426.1L1209.7 422.6L1208.6 416.5Z" fill="#000" fill-opacity="0.21"/><path d="M1170.7 358.3L1153 367.1L1148.7 371.6L1148.7 371.3L1148.5 371.3L1148.5 392.4L1149.4 406L1149.1 405.8L1149.5 406.2L1149.5 406.8L1149.7 406.8L1149.7 406.5L1153.9 410.8L1173.2 419.2L1198.8 418.7L1198.7 418.9L1217 409.9L1221.9 404.8L1221.5 404.9L1221.5 384.6L1220.5 370.7L1215.9 365.9L1197.3 357.9ZM1175.9 383.9L1161.5 377.6L1160.9 368.6L1174.4 362L1194.1 361.7L1208.5 367.9L1209.1 376.9L1195.6 383.6Z" fill="rgb(200, 201, 205)"/><path d="M1208.6 367.9L1216 366.3L1216.9 378.3L1209.2 377L1195.6 383.7L1199 387.1L1173 387.5L1175.9 384L1161.4 377.7L1154 379.3L1153.1 367.2L1160.8 368.6L1174.4 361.8L1171 358.4L1153.1 367.1L1148.6 371.9L1149.5 385.6L1149.5 406.2L1171.2 415.6L1172.9 419L1199.1 418.6L1201 415.2L1221.4 405.1L1221.4 384.7L1220.5 370.8L1216 366.2L1197 358L1194.1 361.6ZM1216.9 378.4L1221.3 384.6L1201 394.6L1199.1 387.2ZM1153.9 379.3L1172.9 387.6L1171.2 395L1149.6 385.6ZM1201 415.1L1171.3 415.6L1171.3 395.1L1201 394.6Z" fill="#000" fill-opacity="0.300"/><path d="M1197 357.9L1170.7 358.3L1153 367.1L1148.5 371.8L1149.5 386L1154 379.4L1172.8 387.6L1171.1 395.2L1201.2 394.7L1199.2 387.2L1217.3 378.3L1216.5 366.3ZM1160.9 368.6L1174.4 362L1194.1 361.7L1208.5 367.9L1209.1 376.9L1195.6 383.6L1175.9 383.9L1161.5 377.6Z" fill="#000" fill-opacity="0.04"/><path d="M1221.5 384.6L1216.9 378.2L1198.9 387.1L1200.9 394.8ZM1171.4 415.8L1171.4 395L1149.5 385.5L1149.5 406.3Z" fill="#000" fill-opacity="0.10"/><path d="M1149.5 406.8L1149.7 385.6L1148.7 371.3L1148.5 392.4ZM1201.1 415.3L1201.1 394.5L1171.1 394.9L1171.1 415.7Z" fill="#000" fill-opacity="0.14"/><path d="M1221.5 385L1220.5 370.7L1215.9 365.9L1216.8 378.4Z" fill="#000" fill-opacity="0.17"/><path d="M1217 409.9L1221.9 404.8L1221.5 404.9L1221.5 384.4L1200.9 394.5L1200.9 415L1171.3 415.5L1149.1 405.8L1153.9 410.8L1173.2 419.2L1198.7 418.9Z" fill="#000" fill-opacity="0.21"/><path d="M1163.6 358.9L1162.1 357.6L1160.9 356.2L1160.2 354.7L1159.7 352.6L1159.7 374.4L1160.1 376.5L1160.2 376.4L1161 377.9L1161 377.7L1162.1 379.1L1163.7 380.4L1165.6 381.6L1170.2 383.6L1176.2 385.1L1182.4 385.7L1189 385.7L1195.3 384.8L1200.9 383.2L1205.4 381L1208.5 378.5L1209.4 377L1209.5 377.2L1210 375.7L1210.2 375.7L1210.3 351.9L1210.1 351.9L1210 354L1209.5 355.4L1208.5 356.9L1207.2 358.3L1205.4 359.5L1200.9 361.8L1198.3 362.6L1192.3 363.9L1185.8 364.4L1182.5 364.3L1176.1 363.7L1170.3 362.2L1167.8 361.3Z" fill="rgb(170, 172, 176)"/><path d="M1160.8 356.1L1160.8 361.4L1160.1 360L1159.8 358.4L1159.8 363.8L1160.1 365.5L1160.8 366.8L1160.8 372L1160.1 370.6L1159.8 368.9L1159.8 374.4L1160.1 376L1160.9 377.5L1160.9 372.2L1162 373.6L1163.5 374.9L1163.5 380.2L1165.5 381.5L1167.8 382.6L1167.8 377.3L1170.3 378.2L1173.1 379L1173.1 384.3L1176.1 385L1179.3 385.4L1179.3 380.1L1182.5 380.4L1185.8 380.4L1185.8 385.7L1189.1 385.6L1192.3 385.2L1192.3 379.9L1195.4 379.4L1198.3 378.7L1198.3 384L1201 383.1L1203.4 382L1203.4 376.7L1205.5 375.6L1207.2 374.3L1207.2 379.6L1208.6 378.2L1209.6 376.7L1209.6 371.4L1210.1 370L1210.2 368.3L1210.2 362.9L1210.1 364.6L1209.6 365.9L1209.6 360.8L1210.1 359.4L1210.2 357.7L1210.2 352.3L1210.1 354L1209.5 355.5L1209.5 360.8L1208.6 362.2L1207.3 363.6L1207.3 358.3L1205.5 359.6L1203.4 360.8L1203.4 366.1L1201 367.1L1198.3 368L1198.3 362.7L1195.4 363.5L1192.3 364L1192.3 369.3L1189.1 369.6L1185.8 369.8L1185.8 364.5L1182.5 364.4L1179.2 364.2L1179.2 369.5L1176.1 369L1173.1 368.4L1173.1 363.1L1170.3 362.3L1167.7 361.3L1167.7 366.6L1165.5 365.5L1163.6 364.3L1163.6 359L1162 357.6ZM1173.1 373.8L1176.1 374.4L1179.2 374.8L1179.2 380L1176.1 379.6L1173.1 379ZM1179.3 369.5L1182.5 369.8L1185.8 369.8L1185.8 375.1L1179.3 374.8ZM1185.8 375.1L1192.3 374.6L1192.3 379.9L1189.1 380.2L1185.8 380.3ZM1192.3 369.3L1195.4 368.8L1198.3 368.1L1198.3 373.3L1195.4 374L1192.3 374.6ZM1165.4 370.8L1167.7 372L1167.7 377.2L1165.5 376.1L1163.6 374.8L1163.6 369.6ZM1170.3 367.6L1173.1 368.4L1173.1 373.7L1170.3 372.9L1167.8 371.9L1167.8 366.7ZM1162 363L1163.5 364.3L1163.5 369.5L1162 368.2L1160.9 366.8L1160.9 361.6ZM1201 372.5L1203.4 371.4L1203.4 376.7L1201 377.7L1198.3 378.6L1198.3 373.4ZM1205.5 365L1207.2 363.7L1207.2 368.9L1205.5 370.2L1203.4 371.3L1203.4 366.1ZM1209.5 371.3L1208.6 372.8L1207.3 374.1L1207.3 368.9L1208.6 367.6L1209.5 366.2Z" fill="#000" fill-opacity="0.380"/><path d="M1167.8 361.3L1163.6 358.9L1161.9 357.4L1161.9 378.9L1163.7 380.4L1167.9 382.7L1173.2 384.5L1179.4 385.5L1179.4 364.1L1173.1 363Z" fill="#000" fill-opacity="0.21"/><path d="M1162.1 357.6L1160 354.2L1160 375.9L1162.1 379.1ZM1185.9 364.4L1179.1 364.1L1179.1 385.5L1185.9 385.8Z" fill="#000" fill-opacity="0.25"/><path d="M1159.8 352.6L1159.7 374.4L1160.1 376.5L1160.2 354.7ZM1185.7 364.4L1185.7 385.8L1192.4 385.3L1192.4 363.9Z" fill="#000" fill-opacity="0.29"/><path d="M1205.4 359.5L1198.3 362.6L1192.2 363.9L1192.2 385.3L1198.2 384.1L1203.5 382.1L1208.5 378.5L1210.2 375.7L1210.3 351.9L1209.5 355.4L1208.5 356.9Z" fill="#000" fill-opacity="0.33"/><pattern id="ck2" width="7" height="7" patternUnits="userSpaceOnUse" patternTransform="translate(1185 352) skewY(-12)"><rect width="7" height="7" fill="#9a9b9e"/><path d="M0 0h3.5v3.5H0zM3.5 3.5h3.5v3.5h-3.5z" fill="#626366"/></pattern><path d="M1202.3 344.3L1199.7 343.3L1196.9 342.5L1193.9 341.9L1190.8 341.5L1187.5 341.2L1184.2 341.2L1180.9 341.3L1177.7 341.6L1174.6 342.2L1171.7 342.9L1169 343.8L1166.6 344.8L1164.5 346L1162.8 347.3L1161.4 348.7L1160.4 350.2L1159.9 351.7L1159.8 353.2L1160.1 354.7L1160.8 356.2L1162 357.7L1163.6 359L1165.5 360.2L1167.7 361.4L1170.3 362.3L1173.1 363.1L1176.1 363.8L1179.2 364.2L1182.5 364.5L1185.8 364.5L1189.1 364.4L1192.3 364L1195.4 363.5L1198.3 362.8L1201 361.9L1203.4 360.8L1205.5 359.6L1207.2 358.3L1208.6 357L1209.6 355.5L1210.1 354L1210.2 352.5L1209.9 350.9L1209.2 349.4L1208 348L1206.4 346.7L1204.5 345.4Z" fill="url(#ck2)"/></g><path d="M1100.1 476.9L1088.1 490.3L1088.3 490.6L1088.3 794.3L1188.1 837.7L1281.7 791.4L1281.9 487.3L1269.8 474.2L1257.8 463L1245.7 452.2L1221.8 432L1217.4 428.1L1209.5 420.1L1208.9 416.5L1208.9 414.2L1217.1 410.1L1222.1 404.8L1221.8 404.4L1221.8 384.6L1220.8 370.7L1216.1 365.7L1197 357.5L1170.6 358L1152.8 366.8L1148.9 371L1148.3 371.1L1148.2 392.4L1149.1 405.5L1148.8 405.9L1149.3 407L1149.8 407.1L1153.7 411.1L1161.1 414.3L1161.1 417.2L1160.5 420.3L1148.2 433.2L1124.1 454.2L1112.1 465.2Z" fill="#ffd9c0" fill-opacity="0.05"/><linearGradient id="bg1" gradientUnits="userSpaceOnUse" x1="0" y1="660" x2="0" y2="820"><stop offset="0" stop-color="#fff" stop-opacity="0"/><stop offset="1" stop-color="#fff" stop-opacity=".16"/></linearGradient><path d="M1100.1 476.9L1088.1 490.3L1088.3 490.6L1088.3 794.3L1188.1 837.7L1281.7 791.4L1281.9 487.3L1269.8 474.2L1257.8 463L1245.7 452.2L1221.8 432L1217.4 428.1L1209.5 420.1L1208.9 416.5L1208.9 414.2L1217.1 410.1L1222.1 404.8L1221.8 404.4L1221.8 384.6L1220.8 370.7L1216.1 365.7L1197 357.5L1170.6 358L1152.8 366.8L1148.9 371L1148.3 371.1L1148.2 392.4L1149.1 405.5L1148.8 405.9L1149.3 407L1149.8 407.1L1153.7 411.1L1161.1 414.3L1161.1 417.2L1160.5 420.3L1148.2 433.2L1124.1 454.2L1112.1 465.2Z" fill="url(#bg1)"/><path d="M1088.6 794.2L1088.6 490.3" stroke="#f0932f" stroke-width="1.0" fill="none" /><path d="M1138.3 815.8L1138.3 511.9" stroke="#f0932f" stroke-width="1.0" fill="none" /><path d="M1234.7 814.4L1234.7 510.4" stroke="#f0932f" stroke-width="1.0" fill="none" /><path d="M1281.4 791.3L1281.4 487.4" stroke="#f0932f" stroke-width="1.0" fill="none" /><path d="M1188 837.4L1188 533.5" stroke="#ff5a5a" stroke-width="1.6" fill="none" /><path d="M1182 748.1L1182 444.2" stroke="#f0932f" stroke-width="1.0" fill="none" opacity=".35"/><path d="M1135.3 771.2L1135.3 467.2" stroke="#f0932f" stroke-width="1.0" fill="none" opacity=".35"/><path d="M1231.7 769.7L1231.7 465.8" stroke="#f0932f" stroke-width="1.0" fill="none" opacity=".35"/><path d="M1188 837.4L1088.6 794.2L1182 748.1L1281.4 791.3L1188 837.4" stroke="#f0932f" stroke-width="1.0" fill="none" opacity=".8"/><path d="M1188 685.1L1088.6 641.9L1182 595.9L1281.4 639.1L1188 685.1" stroke="#f0932f" stroke-width="1.0" fill="none" opacity=".8"/><path d="M1138.3 815.8L1231.7 769.7" stroke="#f0932f" stroke-width="1.0" fill="none" opacity=".7"/><path d="M1234.7 814.4L1135.3 771.2" stroke="#f0932f" stroke-width="1.0" fill="none" opacity=".7"/><path d="M1138.3 663.5L1231.7 617.5" stroke="#f0932f" stroke-width="1.0" fill="none" opacity=".4"/><path d="M1234.7 662.1L1135.3 618.9" stroke="#f0932f" stroke-width="1.0" fill="none" opacity=".4"/><path d="M1188 824.1L1088.6 780.9" stroke="#f0932f" stroke-width="1.0" fill="none" opacity=".5"/><path d="M1188 824.1L1281.4 778" stroke="#f0932f" stroke-width="1.0" fill="none" opacity=".5"/><path d="M1188 533.5L1088.6 490.3L1182 444.2L1281.4 487.4L1188 533.5" stroke="#ff4f7a" stroke-width="1.6" fill="none" /><path d="M1188 530.4L1088.6 487.2" stroke="#ff8a9a" stroke-width="0.8" fill="none" /><path d="M1188 530.4L1281.4 484.3" stroke="#ff8a9a" stroke-width="0.8" fill="none" /><path d="M1188 533.5L1185.8 434.3" stroke="#f0932f" stroke-width="1.0" fill="none" opacity=".8"/><path d="M1088.6 490.3L1160.5 423.3" stroke="#f0932f" stroke-width="1.0" fill="none" opacity=".8"/><path d="M1281.4 487.4L1209.5 422.6" stroke="#f0932f" stroke-width="1.0" fill="none" opacity=".8"/><path d="M1182 444.2L1184.2 411.6" stroke="#f0932f" stroke-width="1.0" fill="none" opacity=".8"/><path d="M1138.3 511.9L1168.2 431.2" stroke="#f0932f" stroke-width="1.0" fill="none" opacity=".8"/><path d="M1234.7 510.4L1202.9 430.7" stroke="#f0932f" stroke-width="1.0" fill="none" opacity=".8"/><path d="M1231.7 465.8L1201.8 414.6" stroke="#f0932f" stroke-width="1.0" fill="none" opacity=".8"/><path d="M1135.3 467.2L1167.1 415.2" stroke="#f0932f" stroke-width="1.0" fill="none" opacity=".8"/><path d="M1201.8 414.6L1199.3 413.7L1196.6 412.9L1193.7 412.3L1190.6 411.9L1187.4 411.6L1184.2 411.6L1181 411.7L1177.9 412.1L1174.9 412.6L1172.1 413.3L1169.4 414.1L1167.1 415.2L1165.1 416.3L1163.4 417.6L1162 418.9L1161.1 420.4L1160.6 421.8L1160.5 423.3L1160.8 424.8L1161.5 426.2L1162.6 427.6L1164.1 428.9L1166 430.1L1168.2 431.2L1170.7 432.2L1173.4 433L1176.3 433.6L1179.4 434L1182.6 434.3L1185.8 434.3L1189 434.2L1192.1 433.8L1195.1 433.3L1197.9 432.6L1200.6 431.7L1202.9 430.7L1204.9 429.6L1206.6 428.3L1208 426.9L1208.9 425.5L1209.4 424.1L1209.5 422.6L1209.2 421.1L1208.5 419.6L1207.4 418.2L1205.9 416.9L1204 415.7L1201.8 414.6" stroke="#ff4f7a" stroke-width="1.2" fill="none" opacity=".9"/><path d="M1197 389.4L1171 389.8L1153.1 398.6L1153.9 410.7L1173 419L1199 418.6L1216.9 409.8L1216.1 397.7L1197 389.4" stroke="#f0932f" stroke-width="0.9" fill="none" opacity=".85"/><path d="M1198.7 381.9L1169 382.4L1148.6 392.4L1149.6 406.2L1171.3 415.6L1201 415.2L1221.4 405.1L1220.4 391.3L1198.7 381.9" stroke="#f0932f" stroke-width="0.9" fill="none" opacity=".85"/><path d="M1198.7 361.4L1169 361.8L1148.6 371.9L1149.6 385.6L1171.3 395.1L1201 394.6L1221.4 384.6L1220.4 370.8L1198.7 361.4" stroke="#f0932f" stroke-width="0.9" fill="none" opacity=".85"/><path d="M1197 358L1171 358.4L1153.1 367.2L1153.9 379.3L1173 387.6L1199 387.2L1216.9 378.3L1216.1 366.3L1197 358" stroke="#f0932f" stroke-width="0.9" fill="none" opacity=".85"/><path d="M1194.2 361.5L1174.3 361.8L1160.8 368.5L1161.4 377.7L1175.8 384L1195.7 383.7L1209.2 377L1208.6 367.8L1194.2 361.5" stroke="#f0932f" stroke-width="0.9" fill="none" opacity=".85"/><path d="M1193.3 400.7L1175.3 400.9L1163 407L1163.6 415.3L1176.7 421L1194.7 420.8L1207 414.7L1206.4 406.4L1193.3 400.7" stroke="#f0932f" stroke-width="0.9" fill="none" opacity=".85"/><path d="M1197 389.4L1198.7 381.9L1198.7 361.4L1197 358" stroke="#f0932f" stroke-width="1.0" fill="none" opacity=".8"/><path d="M1171 389.8L1169 382.4L1169 361.8L1171 358.4" stroke="#f0932f" stroke-width="1.0" fill="none" opacity=".8"/><path d="M1153.1 398.6L1148.6 392.4L1148.6 371.9L1153.1 367.2" stroke="#f0932f" stroke-width="1.0" fill="none" opacity=".8"/><path d="M1153.9 410.7L1149.6 406.2L1149.6 385.6L1153.9 379.3" stroke="#f0932f" stroke-width="1.0" fill="none" opacity=".8"/><path d="M1173 419L1171.3 415.6L1171.3 395.1L1173 387.6" stroke="#f0932f" stroke-width="1.0" fill="none" opacity=".8"/><path d="M1199 418.6L1201 415.2L1201 394.6L1199 387.2" stroke="#f0932f" stroke-width="1.0" fill="none" opacity=".8"/><path d="M1216.9 409.8L1221.4 405.1L1221.4 384.6L1216.9 378.3" stroke="#f0932f" stroke-width="1.0" fill="none" opacity=".8"/><path d="M1216.1 397.7L1220.4 391.3L1220.4 370.8L1216.1 366.3" stroke="#f0932f" stroke-width="1.0" fill="none" opacity=".8"/><path d="M1202.3 344.3L1199.7 343.3L1196.9 342.5L1193.9 341.9L1190.8 341.5L1187.5 341.2L1184.2 341.2L1180.9 341.3L1177.7 341.6L1174.6 342.2L1171.7 342.9L1169 343.8L1166.6 344.8L1164.5 346L1162.8 347.3L1161.4 348.7L1160.4 350.2L1159.9 351.7L1159.8 353.2L1160.1 354.7L1160.8 356.2L1162 357.7L1163.6 359L1165.5 360.2L1167.7 361.4L1170.3 362.3L1173.1 363.1L1176.1 363.8L1179.2 364.2L1182.5 364.5L1185.8 364.5L1189.1 364.4L1192.3 364L1195.4 363.5L1198.3 362.8L1201 361.9L1203.4 360.8L1205.5 359.6L1207.2 358.3L1208.6 357L1209.6 355.5L1210.1 354L1210.2 352.5L1209.9 350.9L1209.2 349.4L1208 348L1206.4 346.7L1204.5 345.4L1202.3 344.3" stroke="#f0932f" stroke-width="0.9" fill="none" opacity=".0"/><path d="M1100.1 476.9L1088.1 490.3L1088.3 490.6L1088.3 794.3L1188.1 837.7L1281.7 791.4L1281.9 487.3L1269.8 474.2L1257.8 463L1245.7 452.2L1221.8 432L1217.4 428.1L1209.5 420.1L1208.9 416.5L1208.9 414.2L1217.1 410.1L1222.1 404.8L1221.8 404.4L1221.8 384.6L1220.8 370.7L1216.1 365.7L1197 357.5L1170.6 358L1152.8 366.8L1148.9 371L1148.3 371.1L1148.2 392.4L1149.1 405.5L1148.8 405.9L1149.3 407L1149.8 407.1L1153.7 411.1L1161.1 414.3L1161.1 417.2L1160.5 420.3L1148.2 433.2L1124.1 454.2L1112.1 465.2Z" fill="none" stroke="#ff7a1c" stroke-width="1.8" stroke-linejoin="round"/><circle cx="1185.0" cy="640.5" r="2.2" fill="#ff9a2e" stroke="#7a3a00" stroke-width=".6"/><g opacity=".88"><path d="M1200.7 574.4L1233.9 558" stroke="#ff4458" stroke-width="2.0" fill="none" /><path d="M1236 562.3L1247.4 551.3L1231.8 553.7Z" fill="#ff4458"/><path d="M1169.9 575.1L1133.2 559.2" stroke="#8bdc10" stroke-width="2.0" fill="none" /><path d="M1135.1 554.8L1118.5 552.8L1131.3 563.6Z" fill="#8bdc10"/><path d="M1185.5 564.9L1185.5 516.9" stroke="#3f8cff" stroke-width="2.0" fill="none" /><path d="M1180.7 517.9L1185.5 499.9L1190.3 517.9Z" fill="#3f8cff"/><path d="M1163.6 543.8L1155.4 540.2L1155.4 530.2L1163.6 533.8Z" fill="#ff4458" fill-opacity=".55" stroke="#ff4458" stroke-width="1"/><path d="M1207 544L1215 540L1215 530L1207 534Z" fill="#8bdc10" fill-opacity=".55" stroke="#8bdc10" stroke-width="1"/><path d="M1185.1 562.7L1194.1 558.3L1184.9 554.3L1175.9 558.7Z" fill="#3f8cff" fill-opacity=".55" stroke="#3f8cff" stroke-width="1"/><circle cx="1185.5" cy="581.9" r="15" fill="none" stroke="#fff" stroke-width="1.6"/></g></svg>
<div class="t3" style="top:5.5px;height:70px;overflow:hidden">
<div class="t3i " style="top:0px"><svg viewBox="0 0 28 28"><rect x="4.5" y="4.5" width="20" height="20" fill="none" stroke="#e6b25e" stroke-width="1.3" stroke-dasharray="4 2.4"/><path d="M11.5 8.5 L11.5 20 L14.4 17 L19 16.2 Z" fill="#e6e6e6"/></svg><i class=tri></i></div>
<div class="t3i  sep" style="top:35px"><svg viewBox="0 0 28 28"><circle cx="14" cy="14" r="10.3" fill="none" stroke="#fff" stroke-width="1.6"/><circle cx="14" cy="14" r="10.3" fill="none" stroke="#c83232" stroke-width="1.6" stroke-dasharray="4.05 4.05"/><path d="M14 7.5V12M14 16V20.5M7.5 14H12M16 14H20.5" stroke="#9a9a9a" stroke-width="1.5" fill="none"/></svg></div>
</div>
<div class="t3" style="top:80.5px;height:140px;overflow:hidden">
<div class="t3i act" style="top:0px"><svg viewBox="0 0 28 28"><g fill="#fff"><path d="M14 2.5L17.2 7.2H10.8Z"/><path d="M14 25.5L17.2 20.8H10.8Z"/><path d="M2.5 14L7.2 10.8V17.2Z"/><path d="M25.5 14L20.8 10.8V17.2Z"/><rect x="13.2" y="7.2" width="1.6" height="3"/><rect x="13.2" y="17.8" width="1.6" height="3"/><rect x="7.2" y="13.2" width="3" height="1.6"/><rect x="17.8" y="13.2" width="3" height="1.6"/></g></svg></div>
<div class="t3i  sep" style="top:35px"><svg viewBox="0 0 28 28"><g fill="none" stroke="#e6e6e6" stroke-width="1.4"><path d="M6 11.5A8.6 8.6 0 0 1 22 11.5"/><path d="M6.3 17.5A8.6 8.6 0 0 0 21.7 17.5"/></g><g fill="#e6e6e6"><path d="M14 10.3L17.7 14L14 17.7L10.3 14Z"/><path d="M2.8 12L8.6 12L5.7 16.3Z"/><path d="M19.4 15.6L25.2 15.6L22.3 11.3Z"/></g></svg></div>
<div class="t3i  sep" style="top:70px"><svg viewBox="0 0 28 28"><rect x="5" y="14" width="9.5" height="9.5" fill="#e6e6e6"/><path d="M9.5 5.2H23.3V19" fill="none" stroke="#e6e6e6" stroke-width="1.2"/><path d="M9.5 5.2V11.5M23.3 19H17" fill="none" stroke="#e6e6e6" stroke-width="1.2"/><path d="M15 13.5L20.5 8" stroke="#e6e6e6" stroke-width="1.3"/><path d="M21.5 7L21 11L17.5 7.5Z" fill="#e6e6e6"/></svg><i class=tri></i></div>
<div class="t3i  sep" style="top:105px"><svg viewBox="0 0 28 28"><circle cx="14" cy="14" r="9.3" fill="none" stroke="#e6e6e6" stroke-width="1.3"/><rect x="10" y="10" width="8" height="8" fill="#e6e6e6"/><g fill="#e6e6e6" stroke="#313131" stroke-width=".6"><path d="M14 2.2L17 6.6H11Z"/><path d="M14 25.8L17 21.4H11Z"/><path d="M2.2 14L6.6 11V17Z"/><path d="M25.8 14L21.4 11V17Z"/></g></svg></div>
</div>
<div class="t3" style="top:225.5px;height:70px;overflow:hidden">
<div class="t3i " style="top:0px"><svg viewBox="0 0 28 28"><path d="M5.2 16.2L18.5 4.4L22 8.2L8.6 19.8L4.6 20.6Z" fill="#e6e6e6"/><path d="M17 5.9L20.4 9.6" stroke="#313131" stroke-width="1"/><path d="M4.5 24C9 24.5 11 21.5 14.5 20C18 18.6 20 21 22 23.3 C23 24.4 24.5 24.7 25.6 24.5" fill="none" stroke="#7fd6ac" stroke-width="1.4"/></svg><i class=tri></i></div>
<div class="t3i  sep" style="top:35px"><svg viewBox="0 0 28 28"><path d="M9 23V12.5A10.5 10.5 0 0 1 20.2 23Z" fill="#8fdcb6"/><path d="M9 23V12.5A10.5 10.5 0 0 1 20.2 23" fill="none" stroke="#2d2d2d" stroke-width=".8"/><path d="M5 3.5H9.2V25.5H5Z" fill="#e6e6e6"/><path d="M5 22H24.5V25.8H5Z" fill="#e6e6e6"/><path d="M6.5 6H9M6.5 9H9M6.5 12H9M6.5 15H9M6.5 18H9M12 23.5V25.5M15 23.5V25.5M18 23.5V25.5M21 23.5V25.5" stroke="#2d2d2d" stroke-width=".8"/></svg></div>
</div>
<div class="t3" style="top:300.5px;height:35px;overflow:hidden">
<div class="t3i " style="top:0px"><svg viewBox="0 0 28 28"><path d="M3.5 6.5H9.5M6.5 3.5V9.5" stroke="#8fdcb6" stroke-width="1.8" fill="none"/><g fill="none" stroke="#8fdcb6" stroke-width="1.2" stroke-linejoin="round"><rect x="8" y="12" width="12" height="12"/><path d="M8 12L13 9.0H25L20 12"/><path d="M25 9.0V21.0L20 24"/></g></svg><i class=tri></i></div>
</div>
<div class="t3" style="top:340.5px;height:420px;overflow:hidden">
<div class="t3i " style="top:0px"><svg viewBox="0 0 28 28"><g fill="none" stroke="#e6e6e6" stroke-width="1.1" stroke-linejoin="round"><rect x="6" y="13" width="14" height="14"/><path d="M6 13L9.5 10.9H23.5L20 13"/><path d="M23.5 10.9V24.9L20 27"/></g><path d="M6 7H20V13H6Z" fill="#8fdcb6"/><path d="M6 7L9.5 4.5H23.5L20 7Z" fill="#8fdcb6"/><path d="M20 7L23.5 4.5V10.9L20 13Z" fill="#6fbf98"/><path d="M6 7H20V13M6 7V13" fill="none" stroke="#e6e6e6" stroke-width=".6" opacity=".5"/></svg><i class=tri></i></div>
<div class="t3i  sep" style="top:35px"><svg viewBox="0 0 28 28"><rect x="5" y="8" width="15" height="15" fill="#8fdcb6"/><rect x="9.3" y="12.3" width="6.4" height="6.4" fill="#2d2d2d"/><path d="M5 8L9.3 12.3M20 8L15.7 12.3M5 23L9.3 18.7M20 23L15.7 18.7" stroke="#2d2d2d" stroke-width=".9"/><g fill="none" stroke="#e6e6e6" stroke-width="1.1" stroke-linejoin="round"><rect x="5" y="8" width="15" height="15"/><path d="M5 8L9.2 5.48H24.2L20 8"/><path d="M24.2 5.48V20.48L20 23"/></g></svg></div>
<div class="t3i  sep" style="top:70px"><svg viewBox="0 0 28 28"><path d="M6 11L10 6.5H19.5L23.5 10V11L20 13.2H6Z" fill="#8fdcb6"/><g fill="none" stroke="#e6e6e6" stroke-width="1.1" stroke-linejoin="round"><path d="M6 13.2H20V24H6Z"/><path d="M6 13.2V11L10 6.5H19.5L23.5 10V21L20 24"/><path d="M20 13.2L23.5 10.5"/></g></svg></div>
<div class="t3i  sep" style="top:105px"><svg viewBox="0 0 28 28"><g fill="none" stroke="#e6e6e6" stroke-width="1.1" stroke-linejoin="round"><path d="M5 10.5L9 6H12.5L11.5 10.5V24H5Z"/><path d="M14.5 10.5L15.5 6H20.5L23.5 9.5V21L20.5 24H14.5Z"/><path d="M14.5 10.5H20.5V24M20.5 10.5L23.5 9.5"/><path d="M5 10.5H11.5"/></g></svg><i class=tri></i></div>
<div class="t3i  sep" style="top:140px"><svg viewBox="0 0 28 28"><g fill="none" stroke="#e6e6e6" stroke-width="1.1" stroke-linejoin="round"><rect x="5.5" y="9.5" width="14" height="14"/><path d="M5.5 9.5L9.7 6.98H23.7L19.5 9.5"/><path d="M23.7 6.98V20.98L19.5 23.5"/></g><path d="M9 11.5L13.5 5.6L14.8 21.5Z" fill="none" stroke="#8fdcb6" stroke-width="1.1"/><circle cx="13.5" cy="5.6" r="1.5" fill="#8fdcb6"/><circle cx="9" cy="11.5" r="1.3" fill="#8fdcb6"/><circle cx="14.8" cy="21.5" r="1.3" fill="#8fdcb6"/></svg><i class=tri></i></div>
<div class="t3i  sep" style="top:175px"><svg viewBox="0 0 28 28"><path d="M11 6L20.5 8.5L23 21.5L7 22L6.5 12.5Z" fill="#8fdcb6"/><g fill="#fff"><circle cx="11" cy="6" r="1.6"/><circle cx="20.5" cy="8.5" r="1.6"/><circle cx="23" cy="21.5" r="1.6"/><circle cx="7" cy="22" r="1.6"/><circle cx="6.5" cy="12.5" r="1.6"/></g></svg></div>
<div class="t3i  sep" style="top:210px"><svg viewBox="0 0 28 28"><path d="M14 14L23.5 9.5A10.5 10.5 0 1 0 24.4 15.5L20 15Z" fill="#8fdcb6"/><path d="M14 14L14 3.5M14 14L5 8.5M14 14L4 17.5M14 14L10 23.7M14 14L19.5 23" stroke="#2d2d2d" stroke-width="1"/><path d="M21.5 10.2L25.5 8.4V13.2" fill="none" stroke="#e6e6e6" stroke-width="1"/></svg><i class=tri></i></div>
<div class="t3i  sep" style="top:245px"><svg viewBox="0 0 28 28"><path d="M6 9.5C8 6.5 12 5.5 15 5.5C19 5.5 21.5 7 22.5 9.5C23.5 13 23.3 17 22 20C20 22.5 17 23.3 14 23.3C10.5 23.3 7.5 22.3 6 19.8C4.8 16.5 4.8 12.5 6 9.5Z" fill="#d6bfe8"/><path d="M5.2 14.5C10 15.5 18 15.3 23.2 14M13.5 5.5C12.5 11 12.5 18 13.5 23.3M6 9.5C10 11 18 10.5 22.5 9.5" fill="none" stroke="#2d2d2d" stroke-width=".9"/></svg><i class=tri></i></div>
<div class="t3i  sep" style="top:280px"><svg viewBox="0 0 28 28"><g fill="none" stroke="#e6e6e6" stroke-width="1.1" stroke-linejoin="round"><path d="M6 11L10 6.5H22.5V19.5L18.5 24H6Z"/><path d="M9.5 12L12.5 8.5V20.5L9.5 24"/><path d="M9.5 12V24M9.5 12H18.5V24M18.5 12L22.5 6.5"/></g><path d="M3 5.5H6.5M3 5.5L4.6 4M3 5.5L4.6 7" stroke="#d6bfe8" stroke-width="1" fill="none"/></svg><i class=tri></i></div>
<div class="t3i  sep" style="top:315px"><svg viewBox="0 0 28 28"><rect x="8.5" y="8.5" width="11" height="11" fill="none" stroke="#e6e6e6" stroke-width="1.1"/><path d="M8.5 8.5L19.5 19.5M19.5 8.5L8.5 19.5" stroke="#e6e6e6" stroke-width="1.6"/><rect x="11.5" y="11.5" width="5" height="5" fill="#2d2d2d" stroke="#e6e6e6" stroke-width="1"/><g fill="#d6bfe8"><path d="M14 1.8L16.8 5.8H11.2Z"/><path d="M14 26.2L16.8 22.2H11.2Z"/><path d="M1.8 14L5.8 11.2V16.8Z"/><path d="M26.2 14L22.2 11.2V16.8Z"/></g></svg><i class=tri></i></div>
<div class="t3i  sep" style="top:350px"><svg viewBox="0 0 28 28"><path d="M3.5 12L14 7L25 17.5L14.5 22.5Z" fill="#d6bfe8"/><path d="M3.5 12L14.5 22.5L14.5 25L3.5 14.5Z" fill="#b9a2cc"/><path d="M14.5 22.5L25 17.5V20L14.5 25Z" fill="#a58fb8"/><path d="M19.5 4.5H24M21.7 2.4V6.6" stroke="#d6bfe8" stroke-width="1" fill="none" transform="translate(0.5,0.5)"/></svg><i class=tri></i></div>
<div class="t3i  sep" style="top:385px"><svg viewBox="0 0 28 28"><g fill="none" stroke="#e6e6e6" stroke-width="1.1" stroke-linejoin="round"><path d="M0.8 15L7.4 6.9L25.2 4V17.8L19.3 23.8H6.6Z"/><path d="M19.3 9.6V23.8M19.3 9.6L25.2 4M0.8 15L19.3 9.6"/></g><circle cx="0.8" cy="15" r="1.5" fill="#d6bfe8"/></svg><i class=tri></i></div>
</div>
<div class="vtxt" style="top:7px">User Orthographic</div><div class="vtxt" style="top:24.7px">(1) glass.004</div>
</div>
</body></html>
